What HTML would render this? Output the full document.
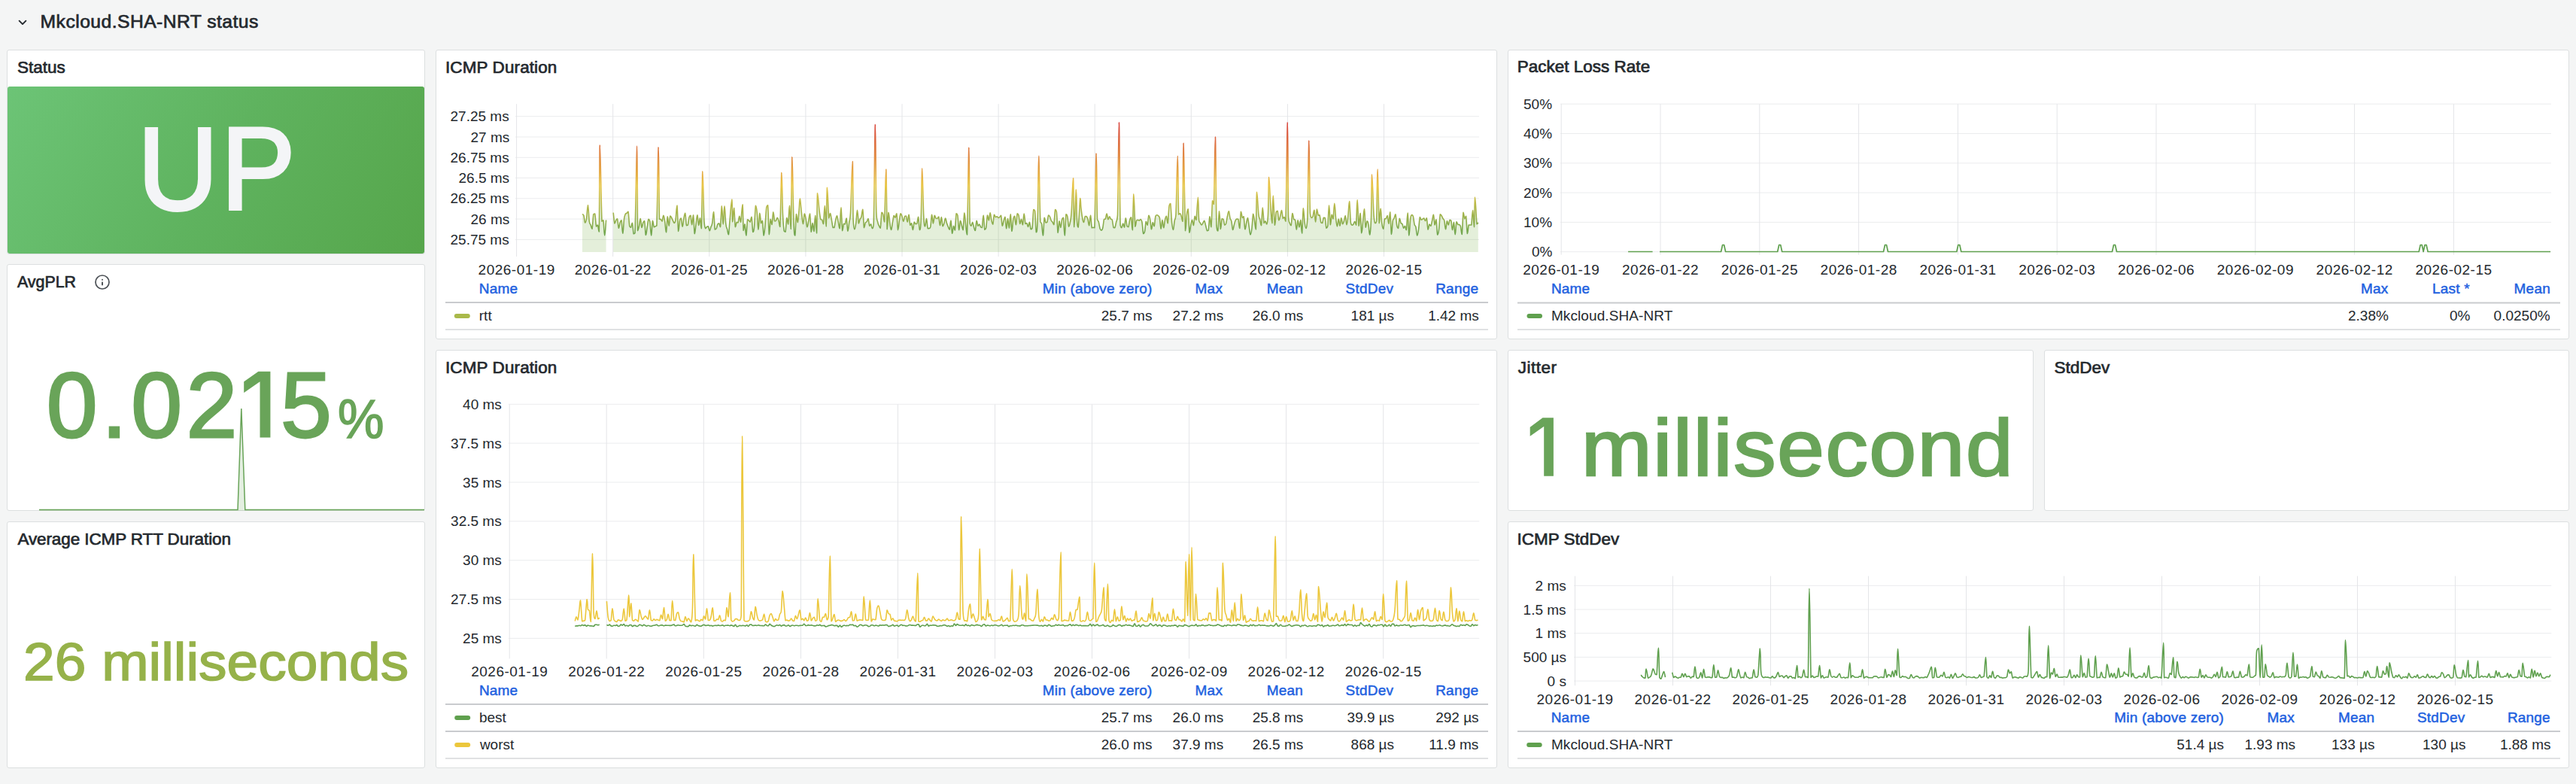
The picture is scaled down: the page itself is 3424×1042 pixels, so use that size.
<!DOCTYPE html>
<html><head><meta charset="utf-8"><style>
html,body{margin:0;padding:0}
body{width:3424px;height:1042px;overflow:hidden;position:relative;background:#f4f5f5;font-family:"Liberation Sans",sans-serif}
.p{position:absolute;box-sizing:border-box;background:#fff;border:1px solid #dcdfe0;border-radius:3px}
.t{position:absolute;white-space:nowrap}
svg{position:absolute;left:0;top:0}
</style></head><body>
<div class="p" style="left:9px;top:66px;width:556px;height:272px"></div>
<div class="p" style="left:9px;top:351px;width:556px;height:328px"></div>
<div class="p" style="left:9px;top:693px;width:556px;height:328px"></div>
<div class="p" style="left:579px;top:66px;width:1411px;height:385px"></div>
<div class="p" style="left:579px;top:465px;width:1411px;height:556px"></div>
<div class="p" style="left:2004px;top:66px;width:1411px;height:385px"></div>
<div class="p" style="left:2004px;top:465px;width:699px;height:214px"></div>
<div class="p" style="left:2717px;top:465px;width:698px;height:214px"></div>
<div class="p" style="left:2004px;top:693px;width:1411px;height:328px"></div>
<div style="position:absolute;left:10px;top:115px;width:554px;height:222px;border-radius:3px;background:linear-gradient(120deg,#6cc476 0%,#5fb35f 50%,#56a64b 100%)"></div>
<svg width="3424" height="1042">
<polyline points="25.6,27.7 30,32.1 34.4,27.7" fill="none" stroke="#24292e" stroke-width="1.9" stroke-linecap="round" stroke-linejoin="round"/>
<circle cx="136" cy="375" r="9" fill="none" stroke="#4d5257" stroke-width="1.7"/><rect x="135" y="370.8" width="2" height="2" rx="1" fill="#4d5257"/><rect x="135" y="374.6" width="2" height="4.8" rx="0.8" fill="#4d5257"/>
<path d="M52,677.5 L316,677.5 L320.8,543 L325.8,677.5 L564,677.5 L564,679 L52,679 Z" fill="#69a459" fill-opacity="0.18"/><polyline points="52,677.5 316,677.5 320.8,543 325.8,677.5 564,677.5" fill="none" stroke="#69a459" stroke-width="1.5"/>
<polygon points="359.4,493.8 343.4,493.8 324.2,507.2 324.2,521.9 345.5,507.2 345.5,581.6 359.4,581.6" fill="#69a459"/>
<polygon points="2064.9,555.2 2050.5,555.2 2033.7,567.7 2033.7,579.7 2052.2,566.7 2052.2,632.8 2064.9,632.8" fill="#69a459"/>
<path d="M685.0,154.7H1966.0M685.0,182.0H1966.0M685.0,209.3H1966.0M685.0,236.5H1966.0M685.0,263.8H1966.0M685.0,291.1H1966.0M685.0,318.4H1966.0" stroke="#ebecee" stroke-width="1" fill="none"/>
<path d="M686.6,138.2V341.0M814.7,138.2V341.0M942.8,138.2V341.0M1070.9,138.2V341.0M1199.0,138.2V341.0M1327.1,138.2V341.0M1455.2,138.2V341.0M1583.3,138.2V341.0M1711.4,138.2V341.0M1839.5,138.2V341.0" stroke="#e4e5e8" stroke-width="1" fill="none"/>
<defs><linearGradient id="g4" gradientUnits="userSpaceOnUse" x1="0" y1="318" x2="0" y2="160"><stop offset="0" stop-color="#62a24f"/><stop offset="0.45" stop-color="#e9c646"/><stop offset="1" stop-color="#d8403e"/></linearGradient></defs>
<path d="M774.0,284.6C774.4,284.9 775.1,284.6 775.9,286.3C776.6,288.6 777.0,295.1 777.7,296.0C778.5,296.0 778.8,295.3 779.6,290.6C780.3,286.0 780.7,272.7 781.4,272.7C782.2,273.4 782.6,289.2 783.3,294.4C784.0,299.1 784.4,297.1 785.2,299.1C785.9,301.0 786.3,304.3 787.0,304.3C787.8,301.5 788.1,288.7 788.9,284.7C789.6,284.0 790.0,284.0 790.7,284.0C791.5,287.3 791.8,298.0 792.6,301.0C793.3,301.0 793.7,299.0 794.4,299.0C795.2,300.4 795.7,308.0 796.3,308.0C796.9,286.8 796.7,195.8 797.4,193.0C798.1,193.0 799.1,274.2 800.0,294.1C800.9,294.1 801.1,292.7 801.9,292.7C802.6,296.4 803.0,313.0 803.7,313.0C804.5,313.0 805.2,296.6 805.6,292.5 L805.6,335 L774,335 Z" fill="rgb(120,175,70)" fill-opacity="0.2" stroke="none"/>
<path d="M774.0,284.6C774.4,284.9 775.1,284.6 775.9,286.3C776.6,288.6 777.0,295.1 777.7,296.0C778.5,296.0 778.8,295.3 779.6,290.6C780.3,286.0 780.7,272.7 781.4,272.7C782.2,273.4 782.6,289.2 783.3,294.4C784.0,299.1 784.4,297.1 785.2,299.1C785.9,301.0 786.3,304.3 787.0,304.3C787.8,301.5 788.1,288.7 788.9,284.7C789.6,284.0 790.0,284.0 790.7,284.0C791.5,287.3 791.8,298.0 792.6,301.0C793.3,301.0 793.7,299.0 794.4,299.0C795.2,300.4 795.7,308.0 796.3,308.0C796.9,286.8 796.7,195.8 797.4,193.0C798.1,193.0 799.1,274.2 800.0,294.1C800.9,294.1 801.1,292.7 801.9,292.7C802.6,296.4 803.0,313.0 803.7,313.0C804.5,313.0 805.2,296.6 805.6,292.5" fill="none" stroke="url(#g4)" stroke-width="1.6" stroke-linejoin="round"/>
<path d="M815.2,282.7C815.6,285.6 816.3,295.0 817.0,297.0C817.7,297.0 818.1,293.8 818.8,292.6C819.5,291.4 819.9,290.9 820.6,290.9C821.3,293.0 821.7,302.3 822.4,303.2C823.1,303.2 823.5,297.7 824.2,295.6C824.9,293.5 825.3,292.7 826.0,292.7C826.7,295.6 827.1,310.3 827.8,310.3C828.5,309.9 828.9,296.0 829.6,290.8C830.3,285.6 830.7,285.8 831.4,284.3C832.1,283.3 832.5,283.9 833.2,283.3C833.9,282.7 834.3,281.2 835.0,281.2C835.7,284.6 836.1,296.4 836.8,300.6C837.5,302.2 837.9,302.2 838.6,302.2C839.3,301.4 839.7,296.2 840.4,296.2C841.1,297.9 841.5,308.1 842.2,310.7C842.9,310.7 843.1,310.7 844.0,309.7C844.9,286.4 846.0,195.0 846.7,194.4C847.4,194.4 847.1,285.3 847.6,306.6C848.2,306.6 848.7,304.1 849.4,300.9C850.2,297.6 850.5,290.5 851.2,290.5C852.0,290.8 852.3,301.3 853.0,302.4C853.8,302.4 854.1,297.7 854.8,295.9C855.6,294.1 855.9,293.6 856.6,293.6C857.4,296.9 857.7,310.8 858.4,312.5C859.2,312.5 859.5,306.3 860.2,302.0C861.0,297.8 861.3,292.7 862.0,291.3C862.8,291.3 863.1,291.3 863.9,294.8C864.6,299.1 864.9,313.0 865.7,313.0C866.4,312.7 866.7,295.6 867.5,293.3C868.2,293.3 868.5,300.3 869.3,301.8C870.0,301.8 870.3,301.2 871.1,300.8C871.8,300.4 872.0,300.8 872.9,299.9C873.7,278.9 874.5,197.5 875.2,195.8C875.9,195.8 875.9,272.2 876.5,291.3C877.1,291.5 877.5,291.3 878.3,291.5C879.0,292.0 879.3,294.1 880.1,294.1C880.8,293.1 881.1,286.3 881.9,286.3C882.6,286.4 883.0,290.0 883.7,294.5C884.4,298.9 884.8,308.8 885.5,308.8C886.2,307.4 886.6,289.5 887.3,287.8C888.0,287.8 888.4,300.2 889.1,300.2C889.8,300.0 890.2,289.2 890.9,287.0C891.6,287.0 892.0,288.2 892.7,289.5C893.4,290.8 893.8,292.0 894.5,293.4C895.2,294.8 895.6,296.4 896.3,296.4C897.0,296.1 897.4,296.4 898.1,291.7C898.8,287.0 899.2,273.0 899.9,273.0C900.6,276.1 901.0,303.4 901.7,307.4C902.4,307.4 902.8,296.6 903.5,293.1C904.2,290.0 904.6,290.0 905.3,290.0C906.0,291.6 906.4,301.3 907.1,301.3C907.8,301.3 908.2,294.0 908.9,290.3C909.6,286.7 910.0,283.2 910.7,283.2C911.4,285.0 911.8,296.5 912.5,299.7C913.2,299.7 913.6,299.7 914.3,299.1C915.0,296.8 915.4,290.9 916.1,288.4C916.8,286.3 917.2,286.3 917.9,286.3C918.6,288.4 919.0,298.7 919.7,298.7C920.4,298.6 920.8,285.7 921.5,285.7C922.2,288.1 922.6,308.1 923.3,310.6C924.0,310.6 924.4,302.8 925.1,297.8C925.8,292.8 926.2,285.7 926.9,285.7C927.6,286.0 928.0,298.5 928.7,299.4C929.4,299.4 929.8,289.9 930.5,289.9C931.2,290.8 931.6,303.8 932.3,303.8C933.0,291.4 933.2,230.0 933.9,227.9C934.6,227.9 935.2,278.3 935.9,293.4C936.7,303.6 937.0,302.0 937.7,303.6C938.4,303.6 938.8,302.0 939.5,301.5C940.3,300.9 940.6,300.7 941.3,300.7C942.1,301.8 942.4,306.6 943.1,306.8C943.9,306.8 944.2,303.7 944.9,301.7C945.7,299.6 946.0,300.6 946.7,296.6C947.5,292.5 947.8,281.5 948.5,281.5C949.3,283.2 949.6,300.6 950.3,305.0C951.1,305.0 951.4,305.0 952.1,303.9C952.9,302.5 953.2,299.5 953.9,298.0C954.7,296.8 955.0,296.8 955.7,296.8C956.5,297.5 956.8,301.7 957.5,301.7C958.3,297.1 958.6,274.5 959.4,273.8C960.1,273.8 960.4,298.2 961.2,298.2C961.9,298.2 962.2,274.0 963.0,273.9C963.7,273.9 964.0,291.4 964.8,297.5C965.5,303.7 965.8,301.7 966.6,304.6C967.3,307.4 967.6,311.8 968.4,311.8C969.1,309.1 969.3,300.7 970.2,291.4C971.0,282.0 972.1,265.0 972.8,265.0C973.5,265.7 973.2,292.6 973.8,294.8C974.3,294.8 974.8,276.3 975.6,276.3C976.3,277.6 976.6,297.9 977.4,301.7C978.1,301.7 978.5,296.4 979.2,295.3C979.9,295.3 980.3,296.0 981.0,296.0C981.7,294.4 982.1,287.5 982.8,287.3C983.5,287.3 983.7,295.1 984.6,295.1C985.4,292.0 986.3,271.8 987.0,271.8C987.7,274.1 987.6,301.2 988.2,306.4C988.8,306.4 989.3,297.9 990.0,297.9C990.7,299.3 991.1,313.0 991.8,313.0C992.5,311.8 992.9,295.9 993.6,291.9C994.3,291.9 994.7,292.5 995.4,293.1C996.1,293.7 996.5,295.0 997.2,295.0C997.9,294.0 998.3,288.4 999.0,288.4C999.7,291.1 1000.1,305.9 1000.8,308.4C1001.5,308.4 1001.9,308.0 1002.6,301.0C1003.3,293.9 1003.7,277.1 1004.4,273.3C1005.1,273.3 1005.5,275.4 1006.2,281.8C1006.9,288.2 1007.3,305.0 1008.0,305.3C1008.7,305.3 1009.1,284.9 1009.8,283.2C1010.5,283.2 1010.9,294.7 1011.6,296.7C1012.3,296.7 1012.7,293.4 1013.4,293.4C1014.1,296.6 1014.5,311.9 1015.2,313.0C1015.9,313.0 1016.3,306.4 1017.0,299.0C1017.7,291.5 1018.1,280.9 1018.8,275.7C1019.5,272.8 1019.9,272.8 1020.6,272.8C1021.3,280.0 1021.7,308.0 1022.4,311.7C1023.1,311.7 1023.5,294.0 1024.2,291.4C1024.9,291.4 1025.3,298.5 1026.0,298.5C1026.7,296.6 1027.1,282.9 1027.8,281.9C1028.5,281.9 1028.9,291.5 1029.6,293.8C1030.3,293.8 1030.7,293.8 1031.4,293.3C1032.1,292.5 1032.5,289.3 1033.2,289.3C1033.9,289.4 1034.3,291.2 1035.0,293.6C1035.8,296.0 1036.1,301.4 1036.8,301.4C1037.6,288.5 1038.2,233.2 1038.9,229.5C1039.6,229.5 1039.8,267.6 1040.4,283.0C1041.1,298.5 1041.5,302.0 1042.2,307.0C1043.0,308.1 1043.3,308.1 1044.0,308.1C1044.8,304.5 1045.1,291.5 1045.8,289.5C1046.6,289.5 1046.9,298.0 1047.6,298.0C1048.4,294.8 1048.7,273.2 1049.4,273.2C1050.2,274.5 1050.6,304.4 1051.2,304.4C1051.9,291.5 1052.2,211.4 1052.9,208.7C1053.6,208.7 1054.1,269.8 1054.9,290.6C1055.6,311.5 1055.9,313.0 1056.7,313.0C1057.4,311.8 1057.7,288.0 1058.5,284.5C1059.2,284.5 1059.5,295.6 1060.3,295.6C1061.0,294.5 1061.4,285.6 1062.1,279.3C1062.7,273.0 1062.6,264.0 1063.3,264.0C1064.0,265.2 1064.8,278.6 1065.7,285.4C1066.5,292.1 1066.7,297.7 1067.5,297.7C1068.2,297.5 1068.5,285.6 1069.3,284.1C1070.0,284.1 1070.3,286.8 1071.1,290.3C1071.8,293.8 1072.1,300.9 1072.9,301.7C1073.6,301.7 1074.0,297.5 1074.7,294.0C1075.4,290.5 1075.8,284.1 1076.5,284.1C1077.2,287.0 1077.6,305.8 1078.3,308.3C1079.0,308.3 1079.4,296.6 1080.1,296.4C1080.8,296.4 1081.2,307.5 1081.9,307.5C1082.6,305.5 1083.0,286.4 1083.7,286.4C1084.4,286.8 1084.9,309.9 1085.5,309.9C1086.1,304.0 1085.9,262.6 1086.6,256.7C1087.3,256.7 1088.2,273.4 1089.1,280.4C1089.9,287.4 1090.2,289.4 1090.9,291.7C1091.6,292.2 1092.0,291.7 1092.7,292.2C1093.4,293.4 1093.8,297.7 1094.5,297.7C1095.2,293.9 1095.6,273.5 1096.3,273.5C1097.0,274.1 1097.5,300.9 1098.1,300.9C1098.7,296.0 1098.8,251.5 1099.5,249.3C1100.2,249.3 1100.9,282.9 1101.7,289.8C1102.5,289.8 1102.8,283.5 1103.5,283.5C1104.2,284.0 1104.6,288.2 1105.3,291.9C1106.0,295.7 1106.4,300.3 1107.1,302.4C1107.8,302.4 1108.2,302.4 1108.9,302.4C1109.6,300.4 1110.0,295.5 1110.7,292.4C1111.4,289.3 1111.8,286.9 1112.5,286.9C1113.2,287.5 1113.6,291.9 1114.3,295.2C1115.0,298.6 1115.4,303.7 1116.1,303.7C1116.8,299.8 1117.2,275.9 1117.9,275.9C1118.6,276.5 1119.0,302.3 1119.7,306.6C1120.4,306.6 1120.8,299.1 1121.5,297.3C1122.2,297.3 1122.6,297.9 1123.3,297.9C1124.0,296.4 1124.4,290.0 1125.1,290.0C1125.8,291.8 1126.2,306.0 1126.9,307.1C1127.6,307.1 1128.0,300.7 1128.7,295.8C1129.4,290.8 1129.6,295.8 1130.5,282.5C1131.4,266.3 1132.5,214.5 1133.2,214.5C1133.9,216.3 1133.6,273.7 1134.1,291.8C1134.7,304.7 1135.2,303.6 1135.9,304.7C1136.7,304.7 1137.0,301.9 1137.7,296.8C1138.5,291.7 1138.8,279.2 1139.5,279.2C1140.3,279.2 1140.6,294.5 1141.3,296.9C1142.1,296.9 1142.4,292.9 1143.1,291.1C1143.9,289.4 1144.2,290.8 1144.9,288.3C1145.7,285.7 1146.0,278.2 1146.7,278.2C1147.5,281.1 1147.8,299.0 1148.5,302.6C1149.3,302.6 1149.6,297.6 1150.3,296.0C1151.1,294.6 1151.4,295.7 1152.2,294.6C1152.9,293.6 1153.2,290.6 1154.0,290.6C1154.7,291.7 1155.0,298.9 1155.8,300.3C1156.5,300.3 1156.8,297.7 1157.6,297.7C1158.3,298.4 1158.6,303.5 1159.4,303.6C1160.1,303.6 1160.4,303.6 1161.2,298.5C1162.0,270.9 1162.7,168.9 1163.4,165.6C1164.1,165.6 1164.1,256.0 1164.8,281.8C1165.4,294.9 1165.8,291.3 1166.6,294.9C1167.3,298.5 1167.6,298.3 1168.4,300.0C1169.1,301.6 1169.4,303.1 1170.2,303.1C1170.9,299.5 1171.3,285.8 1172.0,282.2C1172.7,282.2 1173.1,282.3 1173.8,284.9C1174.5,287.4 1174.8,295.0 1175.6,295.0C1176.4,283.1 1177.0,225.1 1177.7,225.1C1178.4,227.1 1178.5,293.4 1179.2,304.8C1179.8,304.8 1180.3,284.0 1181.0,282.3C1181.7,282.3 1182.1,291.9 1182.8,296.5C1183.5,301.1 1183.9,305.5 1184.6,305.5C1185.3,305.3 1185.7,299.4 1186.4,295.6C1187.1,291.8 1187.5,287.8 1188.2,286.5C1188.9,286.5 1189.3,289.2 1190.0,289.2C1190.7,288.7 1191.1,283.9 1191.8,283.9C1192.5,287.2 1192.9,303.8 1193.6,305.6C1194.3,305.6 1194.7,297.5 1195.4,293.1C1196.1,288.8 1196.5,284.9 1197.2,283.8C1197.9,283.8 1198.3,285.8 1199.0,287.8C1199.7,289.9 1200.1,294.2 1200.8,294.2C1201.5,294.1 1201.9,289.0 1202.6,287.5C1203.3,287.0 1203.7,287.0 1204.4,287.0C1205.1,288.4 1205.5,295.0 1206.2,295.0C1206.9,294.7 1207.3,285.3 1208.0,285.3C1208.7,286.1 1209.1,297.0 1209.8,299.3C1210.5,299.3 1210.9,296.6 1211.6,296.6C1212.3,297.9 1212.7,305.5 1213.4,305.5C1214.1,305.2 1214.5,296.6 1215.2,295.0C1215.9,295.0 1216.3,297.1 1217.0,297.6C1217.7,297.6 1218.1,297.6 1218.8,297.3C1219.5,295.5 1219.9,288.4 1220.6,288.4C1221.3,290.1 1221.7,305.2 1222.4,305.6C1223.1,305.6 1223.6,305.6 1224.2,290.5C1224.9,274.2 1225.0,224.4 1225.7,224.0C1226.4,224.0 1227.0,273.2 1227.8,288.6C1228.6,301.0 1228.9,300.6 1229.6,301.0C1230.4,301.0 1230.7,290.5 1231.4,290.5C1232.2,291.0 1232.5,300.9 1233.2,303.6C1234.0,303.6 1234.3,303.6 1235.0,303.6C1235.8,303.2 1236.1,303.6 1236.8,301.4C1237.6,297.7 1237.9,286.2 1238.6,285.3C1239.4,285.3 1239.7,296.6 1240.4,296.9C1241.2,296.9 1241.5,287.8 1242.2,286.4C1243.0,286.4 1243.3,289.3 1244.0,290.1C1244.8,290.5 1245.1,290.5 1245.8,290.5C1246.6,290.1 1246.9,288.1 1247.7,288.1C1248.4,289.9 1248.7,299.5 1249.5,299.6C1250.2,299.6 1250.5,288.6 1251.3,288.6C1252.0,288.8 1252.3,299.0 1253.1,300.7C1253.8,300.7 1254.1,298.9 1254.9,296.8C1255.6,294.7 1255.9,290.1 1256.7,290.1C1257.4,290.1 1257.7,294.6 1258.5,296.8C1259.2,299.0 1259.5,299.6 1260.3,301.3C1261.0,302.9 1261.3,305.2 1262.1,305.2C1262.8,303.5 1263.1,293.1 1263.9,293.1C1264.6,294.1 1264.9,308.8 1265.7,310.3C1266.4,310.3 1266.8,301.1 1267.5,300.3C1268.2,300.3 1268.6,306.0 1269.3,306.0C1270.0,302.7 1270.4,287.7 1271.1,283.7C1271.8,283.7 1272.2,283.7 1272.9,286.3C1273.6,290.7 1274.0,304.3 1274.7,305.7C1275.4,305.7 1275.8,294.7 1276.5,293.4C1277.2,293.4 1277.6,296.9 1278.3,299.3C1279.0,301.8 1279.4,305.7 1280.1,305.7C1280.8,302.4 1281.2,284.2 1281.9,283.0C1282.6,283.0 1283.0,293.4 1283.7,299.2C1284.4,305.0 1284.6,312.0 1285.5,312.0C1286.3,291.4 1287.2,199.6 1287.9,196.4C1288.6,196.4 1288.5,275.4 1289.1,296.1C1289.7,300.2 1290.2,300.2 1290.9,300.2C1291.6,300.0 1292.0,295.4 1292.7,295.4C1293.4,295.8 1293.8,299.8 1294.5,302.0C1295.2,304.2 1295.6,306.5 1296.3,306.5C1297.0,304.8 1297.4,294.7 1298.1,293.4C1298.8,293.4 1299.2,299.4 1299.9,300.3C1300.6,300.3 1301.0,298.0 1301.7,298.0C1302.4,298.2 1302.8,300.8 1303.5,301.7C1304.2,302.5 1304.6,302.5 1305.3,302.5C1306.0,299.4 1306.4,286.2 1307.1,286.2C1307.8,286.7 1308.2,302.0 1308.9,305.3C1309.6,305.3 1310.0,305.3 1310.7,302.7C1311.4,298.9 1311.8,287.9 1312.5,286.0C1313.2,286.0 1313.6,292.9 1314.3,292.9C1315.0,292.3 1315.4,282.8 1316.1,282.8C1316.8,282.8 1317.2,289.8 1317.9,292.9C1318.6,295.9 1319.0,298.2 1319.7,298.2C1320.4,296.7 1320.8,287.3 1321.5,285.4C1322.2,285.4 1322.6,288.2 1323.3,288.7C1324.1,288.7 1324.4,287.8 1325.1,287.8C1325.9,288.0 1326.2,289.2 1326.9,289.4C1327.7,289.4 1328.0,289.4 1328.7,288.7C1329.5,288.1 1329.8,286.2 1330.5,286.2C1331.3,288.5 1331.6,298.8 1332.3,300.2C1333.1,300.2 1333.4,295.9 1334.1,293.5C1334.9,291.1 1335.2,288.3 1335.9,288.3C1336.7,290.4 1337.0,303.4 1337.7,303.8C1338.5,303.8 1338.8,290.7 1339.5,290.5C1340.3,290.5 1340.6,303.0 1341.3,303.0C1342.1,301.9 1342.4,284.7 1343.2,284.7C1343.9,285.6 1344.2,306.0 1345.0,307.4C1345.7,307.4 1346.0,295.5 1346.8,291.5C1347.5,287.5 1347.8,287.2 1348.6,287.2C1349.3,288.7 1349.6,298.8 1350.4,298.8C1351.1,298.2 1351.4,286.5 1352.2,283.9C1352.9,283.9 1353.2,283.9 1354.0,286.1C1354.7,288.8 1355.0,296.4 1355.8,297.4C1356.5,297.4 1356.8,291.2 1357.6,291.2C1358.3,291.5 1358.6,298.8 1359.4,298.8C1360.1,297.3 1360.4,284.3 1361.2,284.1C1361.9,284.1 1362.3,295.0 1363.0,297.5C1363.7,297.5 1364.1,296.5 1364.8,296.5C1365.5,297.2 1365.9,301.4 1366.6,301.4C1367.3,301.2 1367.7,295.3 1368.4,295.3C1369.1,296.0 1369.5,303.2 1370.2,304.8C1370.9,304.8 1371.3,304.8 1372.0,303.4C1372.7,298.2 1373.1,283.1 1373.8,278.5C1374.5,278.5 1374.9,278.5 1375.6,280.3C1376.3,286.3 1376.7,306.4 1377.4,308.7C1378.1,308.7 1378.5,308.7 1379.2,291.5C1379.9,271.3 1380.0,207.3 1380.7,207.3C1381.4,207.9 1382.0,276.3 1382.8,294.4C1383.6,297.7 1383.9,294.4 1384.6,297.7C1385.3,301.4 1385.7,313.0 1386.4,313.0C1387.1,311.3 1387.5,292.7 1388.2,289.3C1388.9,289.3 1389.3,294.7 1390.0,295.9C1390.7,295.9 1391.1,295.9 1391.8,295.4C1392.5,293.4 1392.9,287.6 1393.6,286.1C1394.3,286.1 1394.7,286.5 1395.4,287.9C1396.1,289.2 1396.5,291.6 1397.2,293.0C1397.9,294.5 1398.3,294.1 1399.0,295.2C1399.7,296.3 1400.1,298.6 1400.8,298.6C1401.5,295.3 1401.9,281.9 1402.6,278.6C1403.3,278.6 1403.7,278.6 1404.4,281.9C1405.1,288.1 1405.5,307.0 1406.2,309.4C1406.9,309.4 1407.3,295.2 1408.0,293.8C1408.7,293.8 1409.1,302.4 1409.8,302.4C1410.5,302.0 1410.9,294.3 1411.6,291.7C1412.3,289.3 1412.7,289.3 1413.4,289.3C1414.1,293.5 1414.5,313.0 1415.2,313.0C1415.9,312.1 1416.3,289.9 1417.0,284.8C1417.7,284.8 1418.1,284.8 1418.8,287.6C1419.6,290.8 1419.9,299.5 1420.6,301.1C1421.4,301.1 1421.7,299.4 1422.4,295.5C1423.2,291.5 1423.4,293.0 1424.2,281.3C1425.0,269.6 1425.8,236.9 1426.5,236.9C1427.2,240.9 1427.1,298.5 1427.8,301.6C1428.6,301.6 1429.7,254.2 1430.4,252.0C1431.1,252.0 1430.9,280.5 1431.4,290.5C1432.0,300.6 1432.4,302.0 1433.2,302.0C1434.1,296.6 1435.1,268.8 1435.8,263.5C1436.5,263.5 1436.3,270.3 1436.8,275.5C1437.4,280.6 1437.9,285.4 1438.7,289.4C1439.4,293.4 1439.7,295.5 1440.5,295.5C1441.2,295.1 1441.5,289.1 1442.3,287.5C1443.0,287.5 1443.3,287.5 1444.1,287.6C1444.8,288.3 1445.1,288.6 1445.9,291.0C1446.6,293.5 1446.9,299.7 1447.7,299.7C1448.4,298.7 1448.7,286.2 1449.5,286.2C1450.2,286.8 1450.5,299.5 1451.3,302.7C1452.0,302.7 1452.3,302.4 1453.1,302.4C1453.8,302.4 1454.0,302.6 1454.9,302.6C1455.7,282.9 1456.5,206.3 1457.2,204.0C1457.9,204.0 1457.9,272.7 1458.5,290.9C1459.1,294.9 1459.6,292.3 1460.3,294.9C1461.0,297.5 1461.4,301.6 1462.1,303.8C1462.8,306.1 1463.2,306.1 1463.9,306.1C1464.6,306.0 1465.0,306.1 1465.7,303.3C1466.4,300.4 1466.8,293.9 1467.5,291.5C1468.2,291.1 1468.6,291.5 1469.3,291.1C1470.0,289.7 1470.4,284.1 1471.1,284.1C1471.8,284.2 1472.2,290.9 1472.9,291.6C1473.6,291.6 1474.0,287.8 1474.7,287.7C1475.4,287.7 1475.8,290.3 1476.5,291.1C1477.2,292.0 1477.6,291.1 1478.3,292.1C1479.0,294.3 1479.4,300.3 1480.1,302.4C1480.8,302.6 1481.2,302.6 1481.9,302.6C1482.6,301.1 1483.0,298.3 1483.7,294.9C1484.4,291.5 1484.8,294.9 1485.5,285.6C1486.2,259.2 1486.7,162.9 1487.4,162.9C1488.1,165.6 1488.4,271.1 1489.1,299.0C1489.8,302.6 1490.2,302.6 1490.9,302.6C1491.6,302.2 1492.0,297.2 1492.7,297.1C1493.4,297.1 1493.8,302.2 1494.5,302.2C1495.2,300.7 1495.6,290.0 1496.3,289.7C1497.0,289.7 1497.4,298.5 1498.1,300.8C1498.8,301.6 1499.2,301.6 1499.9,301.6C1500.6,299.9 1501.0,294.8 1501.7,292.3C1502.4,289.7 1502.8,288.8 1503.5,288.8C1504.2,291.5 1504.6,305.8 1505.3,305.8C1506.0,299.6 1506.2,258.9 1506.9,258.0C1507.6,258.0 1508.2,294.2 1508.9,301.2C1509.7,301.2 1510.0,294.8 1510.7,293.0C1511.4,292.3 1511.8,292.3 1512.5,292.3C1513.2,292.4 1513.6,293.1 1514.3,293.1C1515.1,293.0 1515.4,291.5 1516.1,291.5C1516.9,291.9 1517.2,291.5 1517.9,295.0C1518.7,298.8 1519.0,307.9 1519.7,310.5C1520.5,310.5 1520.8,310.5 1521.5,307.7C1522.3,304.4 1522.6,295.8 1523.3,294.2C1524.1,294.2 1524.4,299.3 1525.1,299.3C1525.9,297.8 1526.2,287.9 1526.9,286.4C1527.7,286.4 1528.0,288.0 1528.7,291.7C1529.5,295.4 1529.8,304.0 1530.5,304.8C1531.3,304.8 1531.6,296.4 1532.3,295.6C1533.1,295.6 1533.4,300.6 1534.2,300.6C1534.9,298.9 1535.2,290.1 1536.0,287.2C1536.7,285.8 1537.0,285.8 1537.8,285.8C1538.5,285.8 1538.8,286.0 1539.6,286.8C1540.3,287.6 1540.6,286.8 1541.4,289.8C1542.1,293.3 1542.4,303.5 1543.2,304.1C1543.9,304.1 1544.2,292.9 1545.0,292.6C1545.7,292.6 1546.0,302.8 1546.8,302.8C1547.5,302.6 1547.8,294.9 1548.6,291.7C1549.3,288.6 1549.6,287.2 1550.4,287.2C1551.1,288.2 1551.4,296.7 1552.2,296.7C1552.9,294.1 1553.3,279.3 1554.0,274.0C1554.7,270.6 1555.1,270.6 1555.8,270.6C1556.5,275.0 1556.9,288.8 1557.6,295.7C1558.3,302.7 1558.7,305.4 1559.4,305.4C1560.1,304.9 1560.5,297.6 1561.2,293.5C1561.9,289.5 1562.2,293.5 1563.0,285.1C1563.8,267.8 1564.6,207.3 1565.3,207.3C1566.0,207.3 1566.0,269.7 1566.6,285.0C1567.2,285.0 1567.7,283.7 1568.4,283.7C1569.1,284.2 1569.5,285.1 1570.2,287.2C1570.9,289.4 1571.4,294.3 1572.0,294.3C1572.6,275.0 1572.3,190.3 1573.0,190.3C1573.7,192.7 1574.7,287.6 1575.6,306.6C1576.5,306.6 1576.7,291.2 1577.4,285.5C1578.1,279.7 1578.5,277.9 1579.2,277.9C1579.9,282.6 1580.3,304.9 1581.0,309.1C1581.7,309.1 1582.1,302.4 1582.8,299.0C1583.5,295.6 1583.9,292.2 1584.6,292.2C1585.3,292.3 1585.7,299.6 1586.4,299.6C1587.1,298.6 1587.5,288.8 1588.2,287.4C1588.9,287.4 1589.2,292.4 1590.0,292.4C1590.8,287.4 1591.7,262.2 1592.4,262.2C1593.1,262.2 1593.0,285.8 1593.6,292.6C1594.2,296.4 1594.7,295.1 1595.4,296.4C1596.1,297.7 1596.5,299.0 1597.2,299.0C1597.9,299.0 1598.3,297.5 1599.0,296.3C1599.7,295.2 1600.1,293.2 1600.8,293.2C1601.5,293.9 1601.9,297.0 1602.6,299.7C1603.3,302.3 1603.7,305.3 1604.4,306.6C1605.1,306.6 1605.5,306.6 1606.2,306.1C1606.9,302.4 1607.3,288.7 1608.0,287.8C1608.7,287.8 1609.1,301.8 1609.8,301.8C1610.6,297.6 1610.9,272.9 1611.6,266.8C1612.4,266.8 1612.7,271.4 1613.4,271.4C1614.2,254.5 1614.7,182.1 1615.4,182.1C1616.1,187.8 1616.3,274.9 1617.0,299.9C1617.7,306.9 1618.1,306.9 1618.8,306.9C1619.6,303.1 1619.9,281.2 1620.6,280.7C1621.4,280.7 1621.7,302.5 1622.4,304.5C1623.2,304.5 1623.5,293.3 1624.2,290.7C1625.0,290.7 1625.3,290.7 1626.0,291.3C1626.8,293.0 1627.1,298.0 1627.8,299.1C1628.6,299.1 1628.9,299.1 1629.7,296.9C1630.4,294.5 1630.7,290.5 1631.5,287.3C1632.2,284.1 1632.5,280.7 1633.3,280.7C1634.0,281.3 1634.3,287.5 1635.1,290.2C1635.8,292.9 1636.1,291.2 1636.9,294.3C1637.6,297.3 1637.9,304.7 1638.7,305.5C1639.4,305.5 1639.7,300.9 1640.5,298.4C1641.2,295.8 1641.5,294.2 1642.3,292.7C1643.0,291.3 1643.3,291.3 1644.1,291.0C1644.8,291.0 1645.1,291.0 1645.9,291.3C1646.6,293.8 1646.9,303.5 1647.7,303.5C1648.4,301.5 1648.8,284.0 1649.5,281.2C1650.2,281.2 1650.6,288.0 1651.3,289.4C1652.0,289.4 1652.4,287.8 1653.1,287.8C1653.8,290.9 1654.2,303.1 1654.9,304.8C1655.6,304.8 1656.0,299.4 1656.7,296.3C1657.4,293.3 1657.8,289.6 1658.5,289.6C1659.2,290.6 1659.6,297.2 1660.3,301.6C1661.0,306.1 1661.4,311.4 1662.1,311.9C1662.8,311.9 1663.2,309.5 1663.9,304.0C1664.6,298.4 1665.0,286.3 1665.7,284.2C1666.4,284.2 1666.8,289.3 1667.5,293.5C1668.2,297.6 1668.7,304.9 1669.3,304.9C1669.9,297.3 1669.9,259.3 1670.6,255.3C1671.3,255.3 1672.1,277.6 1672.9,284.9C1673.7,291.7 1674.0,288.8 1674.7,291.7C1675.4,294.7 1675.8,299.7 1676.5,299.7C1677.2,296.5 1677.6,276.6 1678.3,276.0C1679.0,276.0 1679.4,292.9 1680.1,296.5C1680.8,296.5 1681.2,293.9 1681.9,293.9C1682.6,294.2 1683.0,298.0 1683.7,298.0C1684.4,296.2 1684.9,297.5 1685.5,285.0C1686.1,272.5 1686.0,237.2 1686.7,235.6C1687.4,235.6 1688.3,264.8 1689.1,277.0C1690.0,289.2 1690.3,296.6 1690.9,296.6C1691.5,293.3 1691.5,260.2 1692.2,260.2C1692.9,260.7 1693.7,295.0 1694.5,299.3C1695.3,299.3 1695.6,285.4 1696.3,281.6C1697.0,280.4 1697.4,280.4 1698.1,280.4C1698.8,282.7 1699.2,291.4 1699.9,292.8C1700.6,292.8 1701.0,290.1 1701.7,287.4C1702.4,284.8 1702.8,279.6 1703.5,279.6C1704.2,280.2 1704.6,288.5 1705.3,290.3C1706.0,290.3 1706.4,288.5 1707.1,288.5C1707.9,289.2 1708.1,294.2 1708.9,294.2C1709.8,269.1 1710.7,164.3 1711.4,162.9C1712.1,162.9 1711.9,260.6 1712.5,287.3C1713.1,296.8 1713.6,294.3 1714.3,296.8C1715.1,299.2 1715.4,299.6 1716.1,299.6C1716.9,297.0 1717.2,285.1 1717.9,283.5C1718.7,283.5 1719.0,289.6 1719.7,291.4C1720.5,292.3 1720.8,291.4 1721.5,292.3C1722.3,295.0 1722.6,305.1 1723.3,305.2C1724.1,305.2 1724.4,293.4 1725.1,292.8C1725.9,292.8 1726.2,302.0 1727.0,302.0C1727.7,302.0 1728.0,292.6 1728.8,292.6C1729.5,294.2 1729.8,310.0 1730.6,310.0C1731.3,306.8 1731.6,279.6 1732.4,276.9C1733.1,276.9 1733.4,291.1 1734.2,296.4C1734.9,301.8 1735.2,303.5 1736.0,303.5C1736.7,302.5 1737.0,303.5 1737.8,291.3C1738.6,268.0 1739.2,188.7 1739.9,187.0C1740.6,187.0 1740.7,262.5 1741.4,283.0C1742.0,289.4 1742.4,288.4 1743.2,289.4C1743.9,289.4 1744.2,289.4 1745.0,287.9C1745.7,285.9 1746.1,279.2 1746.8,279.2C1747.5,280.6 1747.9,295.0 1748.6,295.0C1749.3,294.8 1749.7,279.8 1750.4,278.1C1751.1,278.1 1751.5,284.7 1752.2,286.3C1752.9,286.3 1753.3,285.9 1754.0,285.9C1754.7,287.8 1755.1,293.7 1755.8,295.8C1756.5,296.5 1756.9,296.5 1757.6,296.5C1758.3,295.2 1758.7,290.7 1759.4,289.2C1760.1,289.2 1760.5,289.2 1761.2,289.4C1761.9,292.2 1762.3,301.0 1763.0,303.2C1763.7,303.2 1764.1,303.2 1764.8,300.5C1765.5,294.4 1765.9,273.3 1766.6,273.0C1767.3,273.0 1767.7,296.4 1768.4,298.8C1769.1,298.8 1769.5,287.0 1770.2,285.3C1770.9,285.3 1771.3,290.7 1772.0,290.7C1772.7,287.7 1773.1,270.4 1773.8,270.3C1774.5,270.3 1774.9,284.2 1775.6,290.3C1776.3,296.4 1776.7,300.8 1777.4,300.9C1778.1,300.9 1778.5,291.1 1779.2,291.0C1779.9,291.0 1780.3,300.1 1781.0,300.1C1781.7,299.9 1782.1,290.2 1782.8,289.7C1783.5,289.7 1783.9,296.9 1784.6,297.7C1785.3,297.7 1785.7,296.0 1786.4,293.9C1787.1,291.7 1787.5,286.8 1788.2,286.8C1788.9,287.8 1789.3,298.4 1790.0,298.7C1790.7,298.7 1791.1,294.2 1791.8,288.0C1792.5,281.7 1792.9,267.5 1793.6,267.5C1794.3,269.1 1794.7,289.9 1795.4,296.2C1796.1,299.2 1796.5,298.8 1797.2,299.2C1797.9,299.2 1798.3,299.0 1799.0,298.0C1799.7,297.1 1800.1,294.2 1800.8,294.2C1801.5,294.4 1802.0,299.1 1802.6,299.1C1803.3,293.4 1803.4,265.7 1804.1,265.7C1804.8,266.0 1805.4,296.9 1806.2,300.4C1807.0,300.4 1807.3,283.4 1808.0,283.4C1808.8,285.2 1809.1,307.5 1809.8,309.8C1810.6,309.8 1810.9,301.3 1811.6,294.9C1812.4,288.4 1812.7,277.7 1813.4,277.7C1814.2,279.2 1814.5,299.0 1815.2,302.2C1816.0,302.2 1816.3,294.8 1817.0,293.9C1817.8,293.9 1818.1,293.9 1818.8,297.5C1819.6,301.1 1819.9,312.0 1820.6,312.0C1821.4,310.6 1821.9,306.6 1822.5,290.6C1823.0,274.6 1822.9,232.8 1823.6,232.0C1824.3,232.0 1825.2,273.8 1826.1,286.8C1826.9,296.7 1827.1,295.3 1827.9,296.7C1828.6,296.7 1829.0,296.7 1829.7,294.0C1830.3,279.7 1830.3,225.1 1831.0,225.1C1831.7,225.6 1832.4,286.2 1833.3,296.6C1834.1,296.6 1834.3,277.1 1835.1,277.1C1835.8,277.2 1836.1,291.9 1836.9,297.4C1837.6,302.8 1837.9,304.3 1838.7,304.3C1839.4,303.0 1839.7,293.5 1840.5,290.8C1841.2,290.6 1841.6,290.8 1842.3,290.6C1843.0,289.7 1843.4,286.5 1844.1,286.5C1844.8,287.9 1845.2,297.2 1845.9,297.2C1846.6,296.2 1847.0,281.9 1847.7,281.9C1848.4,284.7 1848.8,309.0 1849.5,311.4C1850.2,311.4 1850.6,297.7 1851.3,293.4C1852.0,290.0 1852.4,291.8 1853.1,290.0C1853.8,288.3 1854.2,284.8 1854.9,284.8C1855.6,286.7 1856.0,296.0 1856.7,299.7C1857.4,303.4 1857.8,303.4 1858.5,303.4C1859.2,301.5 1859.6,291.7 1860.3,290.3C1861.0,290.3 1861.4,295.1 1862.1,296.6C1862.8,297.6 1863.2,296.6 1863.9,297.6C1864.6,299.0 1865.0,302.8 1865.7,303.3C1866.4,303.3 1866.8,300.3 1867.5,300.3C1868.2,300.8 1868.6,305.6 1869.3,305.6C1870.0,302.2 1870.4,283.1 1871.1,283.1C1871.8,284.6 1872.2,311.4 1872.9,313.0C1873.6,313.0 1874.0,296.4 1874.7,290.9C1875.4,285.6 1875.8,286.3 1876.5,285.6C1877.2,285.6 1877.6,285.6 1878.3,287.2C1879.0,289.8 1879.4,295.5 1880.1,298.4C1880.8,301.3 1881.2,298.8 1881.9,301.7C1882.6,304.6 1883.0,312.2 1883.7,313.0C1884.4,313.0 1884.8,310.4 1885.5,305.5C1886.2,300.7 1886.6,291.3 1887.3,288.6C1888.0,288.6 1888.4,291.7 1889.1,292.2C1889.8,292.2 1890.2,291.6 1890.9,291.2C1891.6,290.7 1892.0,290.0 1892.7,290.0C1893.4,290.5 1893.8,293.7 1894.5,293.7C1895.2,293.7 1895.6,289.9 1896.3,289.9C1897.0,292.2 1897.4,303.5 1898.1,305.1C1898.9,305.1 1899.2,298.9 1899.9,298.0C1900.7,298.0 1901.0,300.4 1901.7,300.4C1902.5,299.6 1902.8,296.8 1903.5,293.8C1904.3,290.8 1904.6,285.3 1905.3,285.3C1906.1,286.3 1906.4,297.5 1907.1,298.9C1907.9,298.9 1908.2,291.8 1908.9,291.8C1909.7,294.4 1910.0,309.3 1910.7,312.0C1911.5,312.0 1911.8,311.0 1912.5,305.6C1913.3,300.2 1913.6,288.6 1914.3,284.9C1915.1,284.9 1915.4,285.6 1916.1,286.7C1916.9,287.9 1917.2,289.2 1918.0,290.5C1918.7,291.8 1919.0,290.5 1919.8,293.3C1920.5,296.2 1920.8,304.8 1921.6,304.8C1922.3,304.8 1922.6,294.8 1923.4,293.6C1924.1,293.6 1924.4,299.0 1925.2,299.0C1925.9,298.8 1926.2,293.6 1927.0,292.4C1927.7,292.4 1928.0,292.4 1928.8,293.3C1929.5,295.9 1929.8,305.2 1930.6,305.6C1931.3,305.6 1931.6,295.3 1932.4,295.3C1933.1,296.5 1933.4,311.8 1934.2,311.8C1934.9,311.7 1935.2,297.4 1936.0,294.8C1936.7,294.8 1937.1,297.7 1937.8,298.4C1938.5,298.5 1938.9,298.4 1939.6,298.5C1940.3,299.0 1940.7,298.5 1941.4,300.8C1942.1,303.4 1942.5,311.5 1943.2,311.5C1943.9,307.8 1944.3,286.5 1945.0,282.3C1945.7,282.3 1946.1,289.7 1946.8,290.7C1947.5,290.7 1947.9,287.2 1948.6,287.2C1949.3,291.1 1949.7,308.1 1950.4,310.5C1951.1,310.5 1951.5,301.4 1952.2,299.1C1952.9,299.0 1953.3,299.0 1954.0,299.0C1954.7,299.0 1955.1,299.0 1955.8,299.0C1956.5,295.1 1956.9,279.5 1957.6,279.5C1958.3,280.0 1958.8,301.7 1959.4,301.7C1960.0,298.3 1959.9,263.0 1960.6,262.2C1961.3,262.2 1962.2,291.0 1963.0,297.8C1963.8,297.8 1964.4,296.3 1964.8,295.9 L1964.8,335 L815.2,335 Z" fill="rgb(120,175,70)" fill-opacity="0.2" stroke="none"/>
<path d="M815.2,282.7C815.6,285.6 816.3,295.0 817.0,297.0C817.7,297.0 818.1,293.8 818.8,292.6C819.5,291.4 819.9,290.9 820.6,290.9C821.3,293.0 821.7,302.3 822.4,303.2C823.1,303.2 823.5,297.7 824.2,295.6C824.9,293.5 825.3,292.7 826.0,292.7C826.7,295.6 827.1,310.3 827.8,310.3C828.5,309.9 828.9,296.0 829.6,290.8C830.3,285.6 830.7,285.8 831.4,284.3C832.1,283.3 832.5,283.9 833.2,283.3C833.9,282.7 834.3,281.2 835.0,281.2C835.7,284.6 836.1,296.4 836.8,300.6C837.5,302.2 837.9,302.2 838.6,302.2C839.3,301.4 839.7,296.2 840.4,296.2C841.1,297.9 841.5,308.1 842.2,310.7C842.9,310.7 843.1,310.7 844.0,309.7C844.9,286.4 846.0,195.0 846.7,194.4C847.4,194.4 847.1,285.3 847.6,306.6C848.2,306.6 848.7,304.1 849.4,300.9C850.2,297.6 850.5,290.5 851.2,290.5C852.0,290.8 852.3,301.3 853.0,302.4C853.8,302.4 854.1,297.7 854.8,295.9C855.6,294.1 855.9,293.6 856.6,293.6C857.4,296.9 857.7,310.8 858.4,312.5C859.2,312.5 859.5,306.3 860.2,302.0C861.0,297.8 861.3,292.7 862.0,291.3C862.8,291.3 863.1,291.3 863.9,294.8C864.6,299.1 864.9,313.0 865.7,313.0C866.4,312.7 866.7,295.6 867.5,293.3C868.2,293.3 868.5,300.3 869.3,301.8C870.0,301.8 870.3,301.2 871.1,300.8C871.8,300.4 872.0,300.8 872.9,299.9C873.7,278.9 874.5,197.5 875.2,195.8C875.9,195.8 875.9,272.2 876.5,291.3C877.1,291.5 877.5,291.3 878.3,291.5C879.0,292.0 879.3,294.1 880.1,294.1C880.8,293.1 881.1,286.3 881.9,286.3C882.6,286.4 883.0,290.0 883.7,294.5C884.4,298.9 884.8,308.8 885.5,308.8C886.2,307.4 886.6,289.5 887.3,287.8C888.0,287.8 888.4,300.2 889.1,300.2C889.8,300.0 890.2,289.2 890.9,287.0C891.6,287.0 892.0,288.2 892.7,289.5C893.4,290.8 893.8,292.0 894.5,293.4C895.2,294.8 895.6,296.4 896.3,296.4C897.0,296.1 897.4,296.4 898.1,291.7C898.8,287.0 899.2,273.0 899.9,273.0C900.6,276.1 901.0,303.4 901.7,307.4C902.4,307.4 902.8,296.6 903.5,293.1C904.2,290.0 904.6,290.0 905.3,290.0C906.0,291.6 906.4,301.3 907.1,301.3C907.8,301.3 908.2,294.0 908.9,290.3C909.6,286.7 910.0,283.2 910.7,283.2C911.4,285.0 911.8,296.5 912.5,299.7C913.2,299.7 913.6,299.7 914.3,299.1C915.0,296.8 915.4,290.9 916.1,288.4C916.8,286.3 917.2,286.3 917.9,286.3C918.6,288.4 919.0,298.7 919.7,298.7C920.4,298.6 920.8,285.7 921.5,285.7C922.2,288.1 922.6,308.1 923.3,310.6C924.0,310.6 924.4,302.8 925.1,297.8C925.8,292.8 926.2,285.7 926.9,285.7C927.6,286.0 928.0,298.5 928.7,299.4C929.4,299.4 929.8,289.9 930.5,289.9C931.2,290.8 931.6,303.8 932.3,303.8C933.0,291.4 933.2,230.0 933.9,227.9C934.6,227.9 935.2,278.3 935.9,293.4C936.7,303.6 937.0,302.0 937.7,303.6C938.4,303.6 938.8,302.0 939.5,301.5C940.3,300.9 940.6,300.7 941.3,300.7C942.1,301.8 942.4,306.6 943.1,306.8C943.9,306.8 944.2,303.7 944.9,301.7C945.7,299.6 946.0,300.6 946.7,296.6C947.5,292.5 947.8,281.5 948.5,281.5C949.3,283.2 949.6,300.6 950.3,305.0C951.1,305.0 951.4,305.0 952.1,303.9C952.9,302.5 953.2,299.5 953.9,298.0C954.7,296.8 955.0,296.8 955.7,296.8C956.5,297.5 956.8,301.7 957.5,301.7C958.3,297.1 958.6,274.5 959.4,273.8C960.1,273.8 960.4,298.2 961.2,298.2C961.9,298.2 962.2,274.0 963.0,273.9C963.7,273.9 964.0,291.4 964.8,297.5C965.5,303.7 965.8,301.7 966.6,304.6C967.3,307.4 967.6,311.8 968.4,311.8C969.1,309.1 969.3,300.7 970.2,291.4C971.0,282.0 972.1,265.0 972.8,265.0C973.5,265.7 973.2,292.6 973.8,294.8C974.3,294.8 974.8,276.3 975.6,276.3C976.3,277.6 976.6,297.9 977.4,301.7C978.1,301.7 978.5,296.4 979.2,295.3C979.9,295.3 980.3,296.0 981.0,296.0C981.7,294.4 982.1,287.5 982.8,287.3C983.5,287.3 983.7,295.1 984.6,295.1C985.4,292.0 986.3,271.8 987.0,271.8C987.7,274.1 987.6,301.2 988.2,306.4C988.8,306.4 989.3,297.9 990.0,297.9C990.7,299.3 991.1,313.0 991.8,313.0C992.5,311.8 992.9,295.9 993.6,291.9C994.3,291.9 994.7,292.5 995.4,293.1C996.1,293.7 996.5,295.0 997.2,295.0C997.9,294.0 998.3,288.4 999.0,288.4C999.7,291.1 1000.1,305.9 1000.8,308.4C1001.5,308.4 1001.9,308.0 1002.6,301.0C1003.3,293.9 1003.7,277.1 1004.4,273.3C1005.1,273.3 1005.5,275.4 1006.2,281.8C1006.9,288.2 1007.3,305.0 1008.0,305.3C1008.7,305.3 1009.1,284.9 1009.8,283.2C1010.5,283.2 1010.9,294.7 1011.6,296.7C1012.3,296.7 1012.7,293.4 1013.4,293.4C1014.1,296.6 1014.5,311.9 1015.2,313.0C1015.9,313.0 1016.3,306.4 1017.0,299.0C1017.7,291.5 1018.1,280.9 1018.8,275.7C1019.5,272.8 1019.9,272.8 1020.6,272.8C1021.3,280.0 1021.7,308.0 1022.4,311.7C1023.1,311.7 1023.5,294.0 1024.2,291.4C1024.9,291.4 1025.3,298.5 1026.0,298.5C1026.7,296.6 1027.1,282.9 1027.8,281.9C1028.5,281.9 1028.9,291.5 1029.6,293.8C1030.3,293.8 1030.7,293.8 1031.4,293.3C1032.1,292.5 1032.5,289.3 1033.2,289.3C1033.9,289.4 1034.3,291.2 1035.0,293.6C1035.8,296.0 1036.1,301.4 1036.8,301.4C1037.6,288.5 1038.2,233.2 1038.9,229.5C1039.6,229.5 1039.8,267.6 1040.4,283.0C1041.1,298.5 1041.5,302.0 1042.2,307.0C1043.0,308.1 1043.3,308.1 1044.0,308.1C1044.8,304.5 1045.1,291.5 1045.8,289.5C1046.6,289.5 1046.9,298.0 1047.6,298.0C1048.4,294.8 1048.7,273.2 1049.4,273.2C1050.2,274.5 1050.6,304.4 1051.2,304.4C1051.9,291.5 1052.2,211.4 1052.9,208.7C1053.6,208.7 1054.1,269.8 1054.9,290.6C1055.6,311.5 1055.9,313.0 1056.7,313.0C1057.4,311.8 1057.7,288.0 1058.5,284.5C1059.2,284.5 1059.5,295.6 1060.3,295.6C1061.0,294.5 1061.4,285.6 1062.1,279.3C1062.7,273.0 1062.6,264.0 1063.3,264.0C1064.0,265.2 1064.8,278.6 1065.7,285.4C1066.5,292.1 1066.7,297.7 1067.5,297.7C1068.2,297.5 1068.5,285.6 1069.3,284.1C1070.0,284.1 1070.3,286.8 1071.1,290.3C1071.8,293.8 1072.1,300.9 1072.9,301.7C1073.6,301.7 1074.0,297.5 1074.7,294.0C1075.4,290.5 1075.8,284.1 1076.5,284.1C1077.2,287.0 1077.6,305.8 1078.3,308.3C1079.0,308.3 1079.4,296.6 1080.1,296.4C1080.8,296.4 1081.2,307.5 1081.9,307.5C1082.6,305.5 1083.0,286.4 1083.7,286.4C1084.4,286.8 1084.9,309.9 1085.5,309.9C1086.1,304.0 1085.9,262.6 1086.6,256.7C1087.3,256.7 1088.2,273.4 1089.1,280.4C1089.9,287.4 1090.2,289.4 1090.9,291.7C1091.6,292.2 1092.0,291.7 1092.7,292.2C1093.4,293.4 1093.8,297.7 1094.5,297.7C1095.2,293.9 1095.6,273.5 1096.3,273.5C1097.0,274.1 1097.5,300.9 1098.1,300.9C1098.7,296.0 1098.8,251.5 1099.5,249.3C1100.2,249.3 1100.9,282.9 1101.7,289.8C1102.5,289.8 1102.8,283.5 1103.5,283.5C1104.2,284.0 1104.6,288.2 1105.3,291.9C1106.0,295.7 1106.4,300.3 1107.1,302.4C1107.8,302.4 1108.2,302.4 1108.9,302.4C1109.6,300.4 1110.0,295.5 1110.7,292.4C1111.4,289.3 1111.8,286.9 1112.5,286.9C1113.2,287.5 1113.6,291.9 1114.3,295.2C1115.0,298.6 1115.4,303.7 1116.1,303.7C1116.8,299.8 1117.2,275.9 1117.9,275.9C1118.6,276.5 1119.0,302.3 1119.7,306.6C1120.4,306.6 1120.8,299.1 1121.5,297.3C1122.2,297.3 1122.6,297.9 1123.3,297.9C1124.0,296.4 1124.4,290.0 1125.1,290.0C1125.8,291.8 1126.2,306.0 1126.9,307.1C1127.6,307.1 1128.0,300.7 1128.7,295.8C1129.4,290.8 1129.6,295.8 1130.5,282.5C1131.4,266.3 1132.5,214.5 1133.2,214.5C1133.9,216.3 1133.6,273.7 1134.1,291.8C1134.7,304.7 1135.2,303.6 1135.9,304.7C1136.7,304.7 1137.0,301.9 1137.7,296.8C1138.5,291.7 1138.8,279.2 1139.5,279.2C1140.3,279.2 1140.6,294.5 1141.3,296.9C1142.1,296.9 1142.4,292.9 1143.1,291.1C1143.9,289.4 1144.2,290.8 1144.9,288.3C1145.7,285.7 1146.0,278.2 1146.7,278.2C1147.5,281.1 1147.8,299.0 1148.5,302.6C1149.3,302.6 1149.6,297.6 1150.3,296.0C1151.1,294.6 1151.4,295.7 1152.2,294.6C1152.9,293.6 1153.2,290.6 1154.0,290.6C1154.7,291.7 1155.0,298.9 1155.8,300.3C1156.5,300.3 1156.8,297.7 1157.6,297.7C1158.3,298.4 1158.6,303.5 1159.4,303.6C1160.1,303.6 1160.4,303.6 1161.2,298.5C1162.0,270.9 1162.7,168.9 1163.4,165.6C1164.1,165.6 1164.1,256.0 1164.8,281.8C1165.4,294.9 1165.8,291.3 1166.6,294.9C1167.3,298.5 1167.6,298.3 1168.4,300.0C1169.1,301.6 1169.4,303.1 1170.2,303.1C1170.9,299.5 1171.3,285.8 1172.0,282.2C1172.7,282.2 1173.1,282.3 1173.8,284.9C1174.5,287.4 1174.8,295.0 1175.6,295.0C1176.4,283.1 1177.0,225.1 1177.7,225.1C1178.4,227.1 1178.5,293.4 1179.2,304.8C1179.8,304.8 1180.3,284.0 1181.0,282.3C1181.7,282.3 1182.1,291.9 1182.8,296.5C1183.5,301.1 1183.9,305.5 1184.6,305.5C1185.3,305.3 1185.7,299.4 1186.4,295.6C1187.1,291.8 1187.5,287.8 1188.2,286.5C1188.9,286.5 1189.3,289.2 1190.0,289.2C1190.7,288.7 1191.1,283.9 1191.8,283.9C1192.5,287.2 1192.9,303.8 1193.6,305.6C1194.3,305.6 1194.7,297.5 1195.4,293.1C1196.1,288.8 1196.5,284.9 1197.2,283.8C1197.9,283.8 1198.3,285.8 1199.0,287.8C1199.7,289.9 1200.1,294.2 1200.8,294.2C1201.5,294.1 1201.9,289.0 1202.6,287.5C1203.3,287.0 1203.7,287.0 1204.4,287.0C1205.1,288.4 1205.5,295.0 1206.2,295.0C1206.9,294.7 1207.3,285.3 1208.0,285.3C1208.7,286.1 1209.1,297.0 1209.8,299.3C1210.5,299.3 1210.9,296.6 1211.6,296.6C1212.3,297.9 1212.7,305.5 1213.4,305.5C1214.1,305.2 1214.5,296.6 1215.2,295.0C1215.9,295.0 1216.3,297.1 1217.0,297.6C1217.7,297.6 1218.1,297.6 1218.8,297.3C1219.5,295.5 1219.9,288.4 1220.6,288.4C1221.3,290.1 1221.7,305.2 1222.4,305.6C1223.1,305.6 1223.6,305.6 1224.2,290.5C1224.9,274.2 1225.0,224.4 1225.7,224.0C1226.4,224.0 1227.0,273.2 1227.8,288.6C1228.6,301.0 1228.9,300.6 1229.6,301.0C1230.4,301.0 1230.7,290.5 1231.4,290.5C1232.2,291.0 1232.5,300.9 1233.2,303.6C1234.0,303.6 1234.3,303.6 1235.0,303.6C1235.8,303.2 1236.1,303.6 1236.8,301.4C1237.6,297.7 1237.9,286.2 1238.6,285.3C1239.4,285.3 1239.7,296.6 1240.4,296.9C1241.2,296.9 1241.5,287.8 1242.2,286.4C1243.0,286.4 1243.3,289.3 1244.0,290.1C1244.8,290.5 1245.1,290.5 1245.8,290.5C1246.6,290.1 1246.9,288.1 1247.7,288.1C1248.4,289.9 1248.7,299.5 1249.5,299.6C1250.2,299.6 1250.5,288.6 1251.3,288.6C1252.0,288.8 1252.3,299.0 1253.1,300.7C1253.8,300.7 1254.1,298.9 1254.9,296.8C1255.6,294.7 1255.9,290.1 1256.7,290.1C1257.4,290.1 1257.7,294.6 1258.5,296.8C1259.2,299.0 1259.5,299.6 1260.3,301.3C1261.0,302.9 1261.3,305.2 1262.1,305.2C1262.8,303.5 1263.1,293.1 1263.9,293.1C1264.6,294.1 1264.9,308.8 1265.7,310.3C1266.4,310.3 1266.8,301.1 1267.5,300.3C1268.2,300.3 1268.6,306.0 1269.3,306.0C1270.0,302.7 1270.4,287.7 1271.1,283.7C1271.8,283.7 1272.2,283.7 1272.9,286.3C1273.6,290.7 1274.0,304.3 1274.7,305.7C1275.4,305.7 1275.8,294.7 1276.5,293.4C1277.2,293.4 1277.6,296.9 1278.3,299.3C1279.0,301.8 1279.4,305.7 1280.1,305.7C1280.8,302.4 1281.2,284.2 1281.9,283.0C1282.6,283.0 1283.0,293.4 1283.7,299.2C1284.4,305.0 1284.6,312.0 1285.5,312.0C1286.3,291.4 1287.2,199.6 1287.9,196.4C1288.6,196.4 1288.5,275.4 1289.1,296.1C1289.7,300.2 1290.2,300.2 1290.9,300.2C1291.6,300.0 1292.0,295.4 1292.7,295.4C1293.4,295.8 1293.8,299.8 1294.5,302.0C1295.2,304.2 1295.6,306.5 1296.3,306.5C1297.0,304.8 1297.4,294.7 1298.1,293.4C1298.8,293.4 1299.2,299.4 1299.9,300.3C1300.6,300.3 1301.0,298.0 1301.7,298.0C1302.4,298.2 1302.8,300.8 1303.5,301.7C1304.2,302.5 1304.6,302.5 1305.3,302.5C1306.0,299.4 1306.4,286.2 1307.1,286.2C1307.8,286.7 1308.2,302.0 1308.9,305.3C1309.6,305.3 1310.0,305.3 1310.7,302.7C1311.4,298.9 1311.8,287.9 1312.5,286.0C1313.2,286.0 1313.6,292.9 1314.3,292.9C1315.0,292.3 1315.4,282.8 1316.1,282.8C1316.8,282.8 1317.2,289.8 1317.9,292.9C1318.6,295.9 1319.0,298.2 1319.7,298.2C1320.4,296.7 1320.8,287.3 1321.5,285.4C1322.2,285.4 1322.6,288.2 1323.3,288.7C1324.1,288.7 1324.4,287.8 1325.1,287.8C1325.9,288.0 1326.2,289.2 1326.9,289.4C1327.7,289.4 1328.0,289.4 1328.7,288.7C1329.5,288.1 1329.8,286.2 1330.5,286.2C1331.3,288.5 1331.6,298.8 1332.3,300.2C1333.1,300.2 1333.4,295.9 1334.1,293.5C1334.9,291.1 1335.2,288.3 1335.9,288.3C1336.7,290.4 1337.0,303.4 1337.7,303.8C1338.5,303.8 1338.8,290.7 1339.5,290.5C1340.3,290.5 1340.6,303.0 1341.3,303.0C1342.1,301.9 1342.4,284.7 1343.2,284.7C1343.9,285.6 1344.2,306.0 1345.0,307.4C1345.7,307.4 1346.0,295.5 1346.8,291.5C1347.5,287.5 1347.8,287.2 1348.6,287.2C1349.3,288.7 1349.6,298.8 1350.4,298.8C1351.1,298.2 1351.4,286.5 1352.2,283.9C1352.9,283.9 1353.2,283.9 1354.0,286.1C1354.7,288.8 1355.0,296.4 1355.8,297.4C1356.5,297.4 1356.8,291.2 1357.6,291.2C1358.3,291.5 1358.6,298.8 1359.4,298.8C1360.1,297.3 1360.4,284.3 1361.2,284.1C1361.9,284.1 1362.3,295.0 1363.0,297.5C1363.7,297.5 1364.1,296.5 1364.8,296.5C1365.5,297.2 1365.9,301.4 1366.6,301.4C1367.3,301.2 1367.7,295.3 1368.4,295.3C1369.1,296.0 1369.5,303.2 1370.2,304.8C1370.9,304.8 1371.3,304.8 1372.0,303.4C1372.7,298.2 1373.1,283.1 1373.8,278.5C1374.5,278.5 1374.9,278.5 1375.6,280.3C1376.3,286.3 1376.7,306.4 1377.4,308.7C1378.1,308.7 1378.5,308.7 1379.2,291.5C1379.9,271.3 1380.0,207.3 1380.7,207.3C1381.4,207.9 1382.0,276.3 1382.8,294.4C1383.6,297.7 1383.9,294.4 1384.6,297.7C1385.3,301.4 1385.7,313.0 1386.4,313.0C1387.1,311.3 1387.5,292.7 1388.2,289.3C1388.9,289.3 1389.3,294.7 1390.0,295.9C1390.7,295.9 1391.1,295.9 1391.8,295.4C1392.5,293.4 1392.9,287.6 1393.6,286.1C1394.3,286.1 1394.7,286.5 1395.4,287.9C1396.1,289.2 1396.5,291.6 1397.2,293.0C1397.9,294.5 1398.3,294.1 1399.0,295.2C1399.7,296.3 1400.1,298.6 1400.8,298.6C1401.5,295.3 1401.9,281.9 1402.6,278.6C1403.3,278.6 1403.7,278.6 1404.4,281.9C1405.1,288.1 1405.5,307.0 1406.2,309.4C1406.9,309.4 1407.3,295.2 1408.0,293.8C1408.7,293.8 1409.1,302.4 1409.8,302.4C1410.5,302.0 1410.9,294.3 1411.6,291.7C1412.3,289.3 1412.7,289.3 1413.4,289.3C1414.1,293.5 1414.5,313.0 1415.2,313.0C1415.9,312.1 1416.3,289.9 1417.0,284.8C1417.7,284.8 1418.1,284.8 1418.8,287.6C1419.6,290.8 1419.9,299.5 1420.6,301.1C1421.4,301.1 1421.7,299.4 1422.4,295.5C1423.2,291.5 1423.4,293.0 1424.2,281.3C1425.0,269.6 1425.8,236.9 1426.5,236.9C1427.2,240.9 1427.1,298.5 1427.8,301.6C1428.6,301.6 1429.7,254.2 1430.4,252.0C1431.1,252.0 1430.9,280.5 1431.4,290.5C1432.0,300.6 1432.4,302.0 1433.2,302.0C1434.1,296.6 1435.1,268.8 1435.8,263.5C1436.5,263.5 1436.3,270.3 1436.8,275.5C1437.4,280.6 1437.9,285.4 1438.7,289.4C1439.4,293.4 1439.7,295.5 1440.5,295.5C1441.2,295.1 1441.5,289.1 1442.3,287.5C1443.0,287.5 1443.3,287.5 1444.1,287.6C1444.8,288.3 1445.1,288.6 1445.9,291.0C1446.6,293.5 1446.9,299.7 1447.7,299.7C1448.4,298.7 1448.7,286.2 1449.5,286.2C1450.2,286.8 1450.5,299.5 1451.3,302.7C1452.0,302.7 1452.3,302.4 1453.1,302.4C1453.8,302.4 1454.0,302.6 1454.9,302.6C1455.7,282.9 1456.5,206.3 1457.2,204.0C1457.9,204.0 1457.9,272.7 1458.5,290.9C1459.1,294.9 1459.6,292.3 1460.3,294.9C1461.0,297.5 1461.4,301.6 1462.1,303.8C1462.8,306.1 1463.2,306.1 1463.9,306.1C1464.6,306.0 1465.0,306.1 1465.7,303.3C1466.4,300.4 1466.8,293.9 1467.5,291.5C1468.2,291.1 1468.6,291.5 1469.3,291.1C1470.0,289.7 1470.4,284.1 1471.1,284.1C1471.8,284.2 1472.2,290.9 1472.9,291.6C1473.6,291.6 1474.0,287.8 1474.7,287.7C1475.4,287.7 1475.8,290.3 1476.5,291.1C1477.2,292.0 1477.6,291.1 1478.3,292.1C1479.0,294.3 1479.4,300.3 1480.1,302.4C1480.8,302.6 1481.2,302.6 1481.9,302.6C1482.6,301.1 1483.0,298.3 1483.7,294.9C1484.4,291.5 1484.8,294.9 1485.5,285.6C1486.2,259.2 1486.7,162.9 1487.4,162.9C1488.1,165.6 1488.4,271.1 1489.1,299.0C1489.8,302.6 1490.2,302.6 1490.9,302.6C1491.6,302.2 1492.0,297.2 1492.7,297.1C1493.4,297.1 1493.8,302.2 1494.5,302.2C1495.2,300.7 1495.6,290.0 1496.3,289.7C1497.0,289.7 1497.4,298.5 1498.1,300.8C1498.8,301.6 1499.2,301.6 1499.9,301.6C1500.6,299.9 1501.0,294.8 1501.7,292.3C1502.4,289.7 1502.8,288.8 1503.5,288.8C1504.2,291.5 1504.6,305.8 1505.3,305.8C1506.0,299.6 1506.2,258.9 1506.9,258.0C1507.6,258.0 1508.2,294.2 1508.9,301.2C1509.7,301.2 1510.0,294.8 1510.7,293.0C1511.4,292.3 1511.8,292.3 1512.5,292.3C1513.2,292.4 1513.6,293.1 1514.3,293.1C1515.1,293.0 1515.4,291.5 1516.1,291.5C1516.9,291.9 1517.2,291.5 1517.9,295.0C1518.7,298.8 1519.0,307.9 1519.7,310.5C1520.5,310.5 1520.8,310.5 1521.5,307.7C1522.3,304.4 1522.6,295.8 1523.3,294.2C1524.1,294.2 1524.4,299.3 1525.1,299.3C1525.9,297.8 1526.2,287.9 1526.9,286.4C1527.7,286.4 1528.0,288.0 1528.7,291.7C1529.5,295.4 1529.8,304.0 1530.5,304.8C1531.3,304.8 1531.6,296.4 1532.3,295.6C1533.1,295.6 1533.4,300.6 1534.2,300.6C1534.9,298.9 1535.2,290.1 1536.0,287.2C1536.7,285.8 1537.0,285.8 1537.8,285.8C1538.5,285.8 1538.8,286.0 1539.6,286.8C1540.3,287.6 1540.6,286.8 1541.4,289.8C1542.1,293.3 1542.4,303.5 1543.2,304.1C1543.9,304.1 1544.2,292.9 1545.0,292.6C1545.7,292.6 1546.0,302.8 1546.8,302.8C1547.5,302.6 1547.8,294.9 1548.6,291.7C1549.3,288.6 1549.6,287.2 1550.4,287.2C1551.1,288.2 1551.4,296.7 1552.2,296.7C1552.9,294.1 1553.3,279.3 1554.0,274.0C1554.7,270.6 1555.1,270.6 1555.8,270.6C1556.5,275.0 1556.9,288.8 1557.6,295.7C1558.3,302.7 1558.7,305.4 1559.4,305.4C1560.1,304.9 1560.5,297.6 1561.2,293.5C1561.9,289.5 1562.2,293.5 1563.0,285.1C1563.8,267.8 1564.6,207.3 1565.3,207.3C1566.0,207.3 1566.0,269.7 1566.6,285.0C1567.2,285.0 1567.7,283.7 1568.4,283.7C1569.1,284.2 1569.5,285.1 1570.2,287.2C1570.9,289.4 1571.4,294.3 1572.0,294.3C1572.6,275.0 1572.3,190.3 1573.0,190.3C1573.7,192.7 1574.7,287.6 1575.6,306.6C1576.5,306.6 1576.7,291.2 1577.4,285.5C1578.1,279.7 1578.5,277.9 1579.2,277.9C1579.9,282.6 1580.3,304.9 1581.0,309.1C1581.7,309.1 1582.1,302.4 1582.8,299.0C1583.5,295.6 1583.9,292.2 1584.6,292.2C1585.3,292.3 1585.7,299.6 1586.4,299.6C1587.1,298.6 1587.5,288.8 1588.2,287.4C1588.9,287.4 1589.2,292.4 1590.0,292.4C1590.8,287.4 1591.7,262.2 1592.4,262.2C1593.1,262.2 1593.0,285.8 1593.6,292.6C1594.2,296.4 1594.7,295.1 1595.4,296.4C1596.1,297.7 1596.5,299.0 1597.2,299.0C1597.9,299.0 1598.3,297.5 1599.0,296.3C1599.7,295.2 1600.1,293.2 1600.8,293.2C1601.5,293.9 1601.9,297.0 1602.6,299.7C1603.3,302.3 1603.7,305.3 1604.4,306.6C1605.1,306.6 1605.5,306.6 1606.2,306.1C1606.9,302.4 1607.3,288.7 1608.0,287.8C1608.7,287.8 1609.1,301.8 1609.8,301.8C1610.6,297.6 1610.9,272.9 1611.6,266.8C1612.4,266.8 1612.7,271.4 1613.4,271.4C1614.2,254.5 1614.7,182.1 1615.4,182.1C1616.1,187.8 1616.3,274.9 1617.0,299.9C1617.7,306.9 1618.1,306.9 1618.8,306.9C1619.6,303.1 1619.9,281.2 1620.6,280.7C1621.4,280.7 1621.7,302.5 1622.4,304.5C1623.2,304.5 1623.5,293.3 1624.2,290.7C1625.0,290.7 1625.3,290.7 1626.0,291.3C1626.8,293.0 1627.1,298.0 1627.8,299.1C1628.6,299.1 1628.9,299.1 1629.7,296.9C1630.4,294.5 1630.7,290.5 1631.5,287.3C1632.2,284.1 1632.5,280.7 1633.3,280.7C1634.0,281.3 1634.3,287.5 1635.1,290.2C1635.8,292.9 1636.1,291.2 1636.9,294.3C1637.6,297.3 1637.9,304.7 1638.7,305.5C1639.4,305.5 1639.7,300.9 1640.5,298.4C1641.2,295.8 1641.5,294.2 1642.3,292.7C1643.0,291.3 1643.3,291.3 1644.1,291.0C1644.8,291.0 1645.1,291.0 1645.9,291.3C1646.6,293.8 1646.9,303.5 1647.7,303.5C1648.4,301.5 1648.8,284.0 1649.5,281.2C1650.2,281.2 1650.6,288.0 1651.3,289.4C1652.0,289.4 1652.4,287.8 1653.1,287.8C1653.8,290.9 1654.2,303.1 1654.9,304.8C1655.6,304.8 1656.0,299.4 1656.7,296.3C1657.4,293.3 1657.8,289.6 1658.5,289.6C1659.2,290.6 1659.6,297.2 1660.3,301.6C1661.0,306.1 1661.4,311.4 1662.1,311.9C1662.8,311.9 1663.2,309.5 1663.9,304.0C1664.6,298.4 1665.0,286.3 1665.7,284.2C1666.4,284.2 1666.8,289.3 1667.5,293.5C1668.2,297.6 1668.7,304.9 1669.3,304.9C1669.9,297.3 1669.9,259.3 1670.6,255.3C1671.3,255.3 1672.1,277.6 1672.9,284.9C1673.7,291.7 1674.0,288.8 1674.7,291.7C1675.4,294.7 1675.8,299.7 1676.5,299.7C1677.2,296.5 1677.6,276.6 1678.3,276.0C1679.0,276.0 1679.4,292.9 1680.1,296.5C1680.8,296.5 1681.2,293.9 1681.9,293.9C1682.6,294.2 1683.0,298.0 1683.7,298.0C1684.4,296.2 1684.9,297.5 1685.5,285.0C1686.1,272.5 1686.0,237.2 1686.7,235.6C1687.4,235.6 1688.3,264.8 1689.1,277.0C1690.0,289.2 1690.3,296.6 1690.9,296.6C1691.5,293.3 1691.5,260.2 1692.2,260.2C1692.9,260.7 1693.7,295.0 1694.5,299.3C1695.3,299.3 1695.6,285.4 1696.3,281.6C1697.0,280.4 1697.4,280.4 1698.1,280.4C1698.8,282.7 1699.2,291.4 1699.9,292.8C1700.6,292.8 1701.0,290.1 1701.7,287.4C1702.4,284.8 1702.8,279.6 1703.5,279.6C1704.2,280.2 1704.6,288.5 1705.3,290.3C1706.0,290.3 1706.4,288.5 1707.1,288.5C1707.9,289.2 1708.1,294.2 1708.9,294.2C1709.8,269.1 1710.7,164.3 1711.4,162.9C1712.1,162.9 1711.9,260.6 1712.5,287.3C1713.1,296.8 1713.6,294.3 1714.3,296.8C1715.1,299.2 1715.4,299.6 1716.1,299.6C1716.9,297.0 1717.2,285.1 1717.9,283.5C1718.7,283.5 1719.0,289.6 1719.7,291.4C1720.5,292.3 1720.8,291.4 1721.5,292.3C1722.3,295.0 1722.6,305.1 1723.3,305.2C1724.1,305.2 1724.4,293.4 1725.1,292.8C1725.9,292.8 1726.2,302.0 1727.0,302.0C1727.7,302.0 1728.0,292.6 1728.8,292.6C1729.5,294.2 1729.8,310.0 1730.6,310.0C1731.3,306.8 1731.6,279.6 1732.4,276.9C1733.1,276.9 1733.4,291.1 1734.2,296.4C1734.9,301.8 1735.2,303.5 1736.0,303.5C1736.7,302.5 1737.0,303.5 1737.8,291.3C1738.6,268.0 1739.2,188.7 1739.9,187.0C1740.6,187.0 1740.7,262.5 1741.4,283.0C1742.0,289.4 1742.4,288.4 1743.2,289.4C1743.9,289.4 1744.2,289.4 1745.0,287.9C1745.7,285.9 1746.1,279.2 1746.8,279.2C1747.5,280.6 1747.9,295.0 1748.6,295.0C1749.3,294.8 1749.7,279.8 1750.4,278.1C1751.1,278.1 1751.5,284.7 1752.2,286.3C1752.9,286.3 1753.3,285.9 1754.0,285.9C1754.7,287.8 1755.1,293.7 1755.8,295.8C1756.5,296.5 1756.9,296.5 1757.6,296.5C1758.3,295.2 1758.7,290.7 1759.4,289.2C1760.1,289.2 1760.5,289.2 1761.2,289.4C1761.9,292.2 1762.3,301.0 1763.0,303.2C1763.7,303.2 1764.1,303.2 1764.8,300.5C1765.5,294.4 1765.9,273.3 1766.6,273.0C1767.3,273.0 1767.7,296.4 1768.4,298.8C1769.1,298.8 1769.5,287.0 1770.2,285.3C1770.9,285.3 1771.3,290.7 1772.0,290.7C1772.7,287.7 1773.1,270.4 1773.8,270.3C1774.5,270.3 1774.9,284.2 1775.6,290.3C1776.3,296.4 1776.7,300.8 1777.4,300.9C1778.1,300.9 1778.5,291.1 1779.2,291.0C1779.9,291.0 1780.3,300.1 1781.0,300.1C1781.7,299.9 1782.1,290.2 1782.8,289.7C1783.5,289.7 1783.9,296.9 1784.6,297.7C1785.3,297.7 1785.7,296.0 1786.4,293.9C1787.1,291.7 1787.5,286.8 1788.2,286.8C1788.9,287.8 1789.3,298.4 1790.0,298.7C1790.7,298.7 1791.1,294.2 1791.8,288.0C1792.5,281.7 1792.9,267.5 1793.6,267.5C1794.3,269.1 1794.7,289.9 1795.4,296.2C1796.1,299.2 1796.5,298.8 1797.2,299.2C1797.9,299.2 1798.3,299.0 1799.0,298.0C1799.7,297.1 1800.1,294.2 1800.8,294.2C1801.5,294.4 1802.0,299.1 1802.6,299.1C1803.3,293.4 1803.4,265.7 1804.1,265.7C1804.8,266.0 1805.4,296.9 1806.2,300.4C1807.0,300.4 1807.3,283.4 1808.0,283.4C1808.8,285.2 1809.1,307.5 1809.8,309.8C1810.6,309.8 1810.9,301.3 1811.6,294.9C1812.4,288.4 1812.7,277.7 1813.4,277.7C1814.2,279.2 1814.5,299.0 1815.2,302.2C1816.0,302.2 1816.3,294.8 1817.0,293.9C1817.8,293.9 1818.1,293.9 1818.8,297.5C1819.6,301.1 1819.9,312.0 1820.6,312.0C1821.4,310.6 1821.9,306.6 1822.5,290.6C1823.0,274.6 1822.9,232.8 1823.6,232.0C1824.3,232.0 1825.2,273.8 1826.1,286.8C1826.9,296.7 1827.1,295.3 1827.9,296.7C1828.6,296.7 1829.0,296.7 1829.7,294.0C1830.3,279.7 1830.3,225.1 1831.0,225.1C1831.7,225.6 1832.4,286.2 1833.3,296.6C1834.1,296.6 1834.3,277.1 1835.1,277.1C1835.8,277.2 1836.1,291.9 1836.9,297.4C1837.6,302.8 1837.9,304.3 1838.7,304.3C1839.4,303.0 1839.7,293.5 1840.5,290.8C1841.2,290.6 1841.6,290.8 1842.3,290.6C1843.0,289.7 1843.4,286.5 1844.1,286.5C1844.8,287.9 1845.2,297.2 1845.9,297.2C1846.6,296.2 1847.0,281.9 1847.7,281.9C1848.4,284.7 1848.8,309.0 1849.5,311.4C1850.2,311.4 1850.6,297.7 1851.3,293.4C1852.0,290.0 1852.4,291.8 1853.1,290.0C1853.8,288.3 1854.2,284.8 1854.9,284.8C1855.6,286.7 1856.0,296.0 1856.7,299.7C1857.4,303.4 1857.8,303.4 1858.5,303.4C1859.2,301.5 1859.6,291.7 1860.3,290.3C1861.0,290.3 1861.4,295.1 1862.1,296.6C1862.8,297.6 1863.2,296.6 1863.9,297.6C1864.6,299.0 1865.0,302.8 1865.7,303.3C1866.4,303.3 1866.8,300.3 1867.5,300.3C1868.2,300.8 1868.6,305.6 1869.3,305.6C1870.0,302.2 1870.4,283.1 1871.1,283.1C1871.8,284.6 1872.2,311.4 1872.9,313.0C1873.6,313.0 1874.0,296.4 1874.7,290.9C1875.4,285.6 1875.8,286.3 1876.5,285.6C1877.2,285.6 1877.6,285.6 1878.3,287.2C1879.0,289.8 1879.4,295.5 1880.1,298.4C1880.8,301.3 1881.2,298.8 1881.9,301.7C1882.6,304.6 1883.0,312.2 1883.7,313.0C1884.4,313.0 1884.8,310.4 1885.5,305.5C1886.2,300.7 1886.6,291.3 1887.3,288.6C1888.0,288.6 1888.4,291.7 1889.1,292.2C1889.8,292.2 1890.2,291.6 1890.9,291.2C1891.6,290.7 1892.0,290.0 1892.7,290.0C1893.4,290.5 1893.8,293.7 1894.5,293.7C1895.2,293.7 1895.6,289.9 1896.3,289.9C1897.0,292.2 1897.4,303.5 1898.1,305.1C1898.9,305.1 1899.2,298.9 1899.9,298.0C1900.7,298.0 1901.0,300.4 1901.7,300.4C1902.5,299.6 1902.8,296.8 1903.5,293.8C1904.3,290.8 1904.6,285.3 1905.3,285.3C1906.1,286.3 1906.4,297.5 1907.1,298.9C1907.9,298.9 1908.2,291.8 1908.9,291.8C1909.7,294.4 1910.0,309.3 1910.7,312.0C1911.5,312.0 1911.8,311.0 1912.5,305.6C1913.3,300.2 1913.6,288.6 1914.3,284.9C1915.1,284.9 1915.4,285.6 1916.1,286.7C1916.9,287.9 1917.2,289.2 1918.0,290.5C1918.7,291.8 1919.0,290.5 1919.8,293.3C1920.5,296.2 1920.8,304.8 1921.6,304.8C1922.3,304.8 1922.6,294.8 1923.4,293.6C1924.1,293.6 1924.4,299.0 1925.2,299.0C1925.9,298.8 1926.2,293.6 1927.0,292.4C1927.7,292.4 1928.0,292.4 1928.8,293.3C1929.5,295.9 1929.8,305.2 1930.6,305.6C1931.3,305.6 1931.6,295.3 1932.4,295.3C1933.1,296.5 1933.4,311.8 1934.2,311.8C1934.9,311.7 1935.2,297.4 1936.0,294.8C1936.7,294.8 1937.1,297.7 1937.8,298.4C1938.5,298.5 1938.9,298.4 1939.6,298.5C1940.3,299.0 1940.7,298.5 1941.4,300.8C1942.1,303.4 1942.5,311.5 1943.2,311.5C1943.9,307.8 1944.3,286.5 1945.0,282.3C1945.7,282.3 1946.1,289.7 1946.8,290.7C1947.5,290.7 1947.9,287.2 1948.6,287.2C1949.3,291.1 1949.7,308.1 1950.4,310.5C1951.1,310.5 1951.5,301.4 1952.2,299.1C1952.9,299.0 1953.3,299.0 1954.0,299.0C1954.7,299.0 1955.1,299.0 1955.8,299.0C1956.5,295.1 1956.9,279.5 1957.6,279.5C1958.3,280.0 1958.8,301.7 1959.4,301.7C1960.0,298.3 1959.9,263.0 1960.6,262.2C1961.3,262.2 1962.2,291.0 1963.0,297.8C1963.8,297.8 1964.4,296.3 1964.8,295.9" fill="none" stroke="url(#g4)" stroke-width="1.6" stroke-linejoin="round"/>
<rect x="592" y="401" width="1386" height="2" fill="#c9cbce"/>
<rect x="603.8" y="417" width="21" height="6" rx="3" fill="#a9b94a"/>
<rect x="592" y="437" width="1386" height="2" fill="#e0e1e3"/>
<path d="M676.0,537.3H1966.3M676.0,589.1H1966.3M676.0,641.0H1966.3M676.0,692.8H1966.3M676.0,744.7H1966.3M676.0,796.5H1966.3M676.0,848.4H1966.3" stroke="#ebecee" stroke-width="1" fill="none"/>
<path d="M677.2,537.5V875.4M806.2,537.5V875.4M935.3,537.5V875.4M1064.4,537.5V875.4M1193.4,537.5V875.4M1322.5,537.5V875.4M1451.5,537.5V875.4M1580.6,537.5V875.4M1709.6,537.5V875.4M1838.7,537.5V875.4" stroke="#e4e5e8" stroke-width="1" fill="none"/>
<path d="M764.2,825.6C764.6,824.5 765.4,820.1 766.1,819.8C766.9,819.8 767.3,824.0 768.0,824.0C768.8,822.2 769.3,815.6 770.0,810.4C770.6,805.2 770.7,797.9 771.5,797.9C772.3,800.9 772.9,820.1 773.8,825.6C774.6,825.6 774.9,825.4 775.7,825.2C776.5,825.0 776.7,825.2 777.6,824.5C778.5,818.7 779.4,799.4 780.2,796.5C781.0,796.5 780.8,807.1 781.5,810.1C782.1,811.3 782.6,810.1 783.4,811.3C784.1,814.5 784.4,826.4 785.3,826.4C786.1,811.3 786.8,738.4 787.6,735.9C788.4,735.9 788.4,796.8 789.1,814.1C789.8,822.4 790.3,822.4 791.0,822.4C791.8,821.9 792.2,811.7 793.0,811.7C793.7,811.8 794.1,820.8 794.9,822.7C795.6,822.7 796.4,821.5 796.8,821.2" fill="none" stroke="#ecc73c" stroke-width="1.6" stroke-linejoin="round"/>
<path d="M764.2,832.2C764.6,832.1 765.4,831.9 766.1,831.9C766.9,831.9 767.3,831.9 768.0,831.9C768.8,831.8 769.2,831.2 770.0,831.2C770.7,831.2 771.1,831.7 771.9,831.7C772.6,831.6 773.0,830.6 773.8,830.5C774.6,830.5 774.9,831.4 775.7,831.4C776.5,831.4 776.9,830.6 777.6,830.6C778.4,830.8 778.8,832.3 779.5,832.3C780.3,832.3 780.7,831.1 781.5,831.0C782.2,831.0 782.6,831.6 783.4,831.8C784.1,831.9 784.5,831.9 785.3,831.9C786.1,831.9 786.4,831.9 787.2,832.0C788.0,832.1 788.4,832.4 789.1,832.4C789.9,832.1 790.3,830.6 791.0,830.2C791.8,830.2 792.2,830.2 793.0,830.3C793.7,830.4 794.1,830.6 794.9,830.7C795.6,830.7 796.4,830.4 796.8,830.4" fill="none" stroke="#5fa04e" stroke-width="1.6" stroke-linejoin="round"/>
<path d="M806.4,799.1C806.8,803.4 807.5,815.4 808.3,820.7C809.1,825.4 809.4,824.7 810.2,825.4C811.0,825.4 811.3,825.4 812.1,824.6C812.9,821.3 813.2,809.0 814.0,808.7C814.8,808.7 815.1,820.0 815.9,823.3C816.7,825.6 817.0,824.9 817.8,825.6C818.6,826.2 819.0,826.4 819.7,826.4C820.5,826.1 820.9,824.3 821.6,823.9C822.4,823.9 822.8,824.2 823.5,824.5C824.3,824.8 824.7,825.4 825.4,825.4C826.2,825.1 826.6,825.4 827.3,823.0C828.1,819.8 828.5,809.0 829.2,809.0C830.0,809.4 830.4,822.2 831.1,825.2C831.9,825.2 832.1,825.2 833.0,824.0C834.0,817.2 835.0,791.9 835.8,791.0C836.6,791.0 836.2,817.5 836.8,819.7C837.4,819.7 838.0,801.8 838.7,801.8C839.5,802.7 839.9,819.6 840.6,824.3C841.4,825.3 841.8,825.3 842.5,825.3C843.3,825.1 843.7,823.5 844.4,823.2C845.2,823.2 845.6,823.7 846.3,824.2C847.1,824.7 847.5,826.0 848.2,826.0C849.0,823.2 849.4,812.1 850.1,810.6C850.9,810.6 851.3,815.8 852.0,818.4C852.8,820.9 853.2,822.9 853.9,823.4C854.7,823.4 855.1,822.0 855.8,821.1C856.6,820.2 857.0,818.9 857.7,818.8C858.5,818.8 858.9,819.9 859.6,820.7C860.4,821.6 860.8,823.0 861.5,823.0C862.3,821.0 862.7,810.8 863.4,810.8C864.2,811.0 864.6,821.4 865.4,824.3C866.1,824.9 866.5,824.9 867.3,824.9C868.0,824.7 868.4,823.0 869.2,822.9C869.9,822.9 870.3,824.4 871.1,824.5C871.8,824.5 872.2,823.5 873.0,823.4C873.7,823.4 874.1,823.7 874.9,824.0C875.6,824.3 876.0,824.8 876.8,824.8C877.5,823.5 877.9,817.7 878.7,817.3C879.4,817.3 879.8,822.7 880.6,822.7C881.3,820.8 881.7,807.5 882.5,807.5C883.2,808.0 883.6,822.1 884.4,825.2C885.1,825.2 885.5,825.2 886.3,823.4C887.0,821.7 887.4,816.4 888.2,816.4C888.9,816.7 889.3,823.0 890.1,824.7C890.8,824.7 891.2,824.7 892.0,824.6C892.7,819.4 892.9,798.5 893.7,798.4C894.5,798.4 895.0,819.0 895.8,824.2C896.6,824.5 896.9,824.5 897.7,824.5C898.4,822.7 898.8,817.4 899.6,815.3C900.3,813.9 900.7,813.9 901.5,813.9C902.2,815.4 902.6,820.5 903.4,822.8C904.1,825.2 904.5,825.0 905.3,825.6C906.0,825.8 906.4,825.6 907.2,825.8C907.9,826.1 908.3,826.9 909.1,826.9C909.8,825.7 910.2,819.8 911.0,819.5C911.8,819.5 912.1,824.9 912.9,825.4C913.7,825.4 914.0,822.3 914.8,822.0C915.6,822.0 915.9,823.0 916.7,823.9C917.5,824.9 917.8,826.8 918.6,826.8C919.4,823.5 919.9,825.4 920.5,807.4C921.1,789.4 920.9,736.8 921.7,736.8C922.5,740.3 923.4,807.5 924.3,824.9C925.2,824.9 925.4,823.8 926.2,823.8C927.0,823.8 927.3,824.3 928.1,824.7C928.9,825.1 929.2,825.8 930.0,825.8C930.8,825.5 931.1,823.6 931.9,823.3C932.7,823.3 933.0,824.7 933.8,824.7C934.6,823.8 935.0,819.1 935.7,818.7C936.5,818.7 936.9,823.0 937.6,823.0C938.4,821.0 938.8,808.7 939.5,808.7C940.3,809.0 940.7,821.3 941.4,824.5C942.2,824.5 942.6,824.5 943.3,824.2C944.1,823.2 944.5,822.8 945.2,819.5C946.0,816.2 946.4,807.8 947.1,807.8C947.9,809.0 948.3,821.7 949.0,825.2C949.8,825.2 950.2,825.2 950.9,825.1C951.7,824.6 952.1,823.3 952.8,823.0C953.6,823.0 954.0,823.5 954.7,823.5C955.5,822.5 955.9,817.9 956.6,817.9C957.4,818.2 957.8,823.5 958.5,825.2C959.3,826.0 959.7,826.0 960.4,826.0C961.2,825.8 961.6,824.5 962.3,824.3C963.1,824.3 963.5,824.8 964.2,824.8C965.0,821.4 965.4,808.5 966.1,807.5C966.9,807.5 967.2,819.8 968.0,819.8C968.9,815.9 969.6,787.8 970.4,787.8C971.2,788.6 971.2,816.2 971.8,823.9C972.5,825.9 973.0,825.6 973.7,825.9C974.5,825.9 974.9,825.7 975.6,825.0C976.4,824.4 976.8,823.1 977.5,822.6C978.3,822.5 978.7,822.5 979.4,822.5C980.2,822.8 980.6,823.8 981.4,824.2C982.1,824.5 982.5,824.5 983.3,824.5C984.0,823.3 984.5,824.5 985.2,818.4C985.8,769.4 985.7,579.7 986.5,579.7C987.3,580.9 988.1,775.4 989.0,824.6C989.8,825.7 990.1,825.5 990.9,825.7C991.6,825.7 992.0,825.7 992.8,825.7C993.5,825.6 993.9,825.7 994.7,825.2C995.4,824.7 995.8,825.2 996.6,823.3C997.3,820.8 997.7,813.2 998.5,812.7C999.2,812.7 999.6,818.1 1000.4,820.4C1001.1,822.6 1001.5,823.9 1002.3,823.9C1003.0,821.0 1003.4,807.5 1004.2,806.2C1004.9,806.2 1005.3,813.9 1006.1,817.4C1006.8,820.9 1007.2,822.3 1008.0,823.9C1008.7,825.1 1009.1,825.0 1009.9,825.1C1010.6,825.1 1011.0,824.9 1011.8,824.6C1012.5,824.3 1012.9,824.6 1013.7,823.6C1014.4,821.9 1014.8,816.2 1015.6,816.2C1016.3,816.6 1016.7,823.6 1017.5,825.7C1018.2,826.7 1018.6,826.7 1019.4,826.7C1020.1,826.6 1020.5,826.7 1021.3,825.1C1022.0,823.3 1022.4,819.5 1023.2,817.6C1023.9,815.7 1024.3,815.6 1025.1,815.6C1025.8,816.1 1026.2,818.2 1027.0,820.2C1027.8,822.2 1028.1,825.2 1028.9,825.7C1029.7,825.7 1030.0,822.8 1030.8,822.6C1031.6,822.6 1031.9,824.2 1032.7,824.5C1033.5,824.5 1033.8,824.5 1034.6,823.9C1035.4,822.3 1035.7,818.7 1036.5,816.4C1037.3,814.0 1037.7,816.4 1038.4,812.2C1039.1,806.0 1039.4,786.9 1040.2,785.5C1041.0,785.5 1041.4,797.3 1042.2,805.2C1043.0,813.0 1043.3,821.0 1044.1,824.8C1044.9,824.8 1045.2,824.1 1046.0,824.1C1046.8,824.2 1047.1,825.0 1047.9,825.1C1048.7,825.1 1049.0,825.1 1049.8,824.7C1050.6,824.0 1051.0,822.0 1051.7,822.0C1052.5,822.0 1052.9,824.4 1053.6,825.0C1054.4,825.4 1054.8,825.4 1055.5,825.4C1056.3,824.1 1056.7,818.9 1057.4,818.4C1058.2,818.4 1058.6,822.7 1059.3,822.7C1060.1,822.5 1060.5,819.5 1061.2,817.1C1062.0,814.7 1062.4,810.8 1063.1,810.8C1063.9,812.2 1064.3,821.4 1065.0,823.7C1065.8,823.7 1066.2,822.3 1066.9,822.3C1067.7,822.5 1068.1,824.8 1068.8,824.8C1069.6,824.5 1070.0,821.0 1070.7,821.0C1071.5,821.1 1071.9,824.6 1072.6,825.2C1073.4,825.2 1073.8,825.2 1074.5,824.2C1075.3,822.1 1075.7,814.6 1076.4,814.6C1077.2,814.8 1077.6,823.5 1078.3,825.0C1079.1,825.0 1079.5,822.8 1080.2,821.9C1081.0,820.9 1081.4,820.2 1082.1,820.2C1082.9,820.9 1083.3,824.5 1084.0,825.3C1084.8,825.3 1085.3,825.3 1085.9,824.0C1086.6,818.1 1086.3,795.6 1087.1,795.6C1087.9,795.7 1088.8,818.4 1089.7,824.6C1090.7,826.2 1090.9,826.2 1091.6,826.2C1092.4,825.4 1092.8,821.5 1093.5,820.3C1094.3,820.2 1094.7,820.3 1095.4,820.2C1096.2,819.2 1096.6,815.6 1097.4,815.6C1098.1,816.3 1098.5,823.1 1099.3,823.8C1100.0,823.8 1100.4,823.8 1101.2,819.0C1101.9,802.0 1102.4,739.1 1103.2,739.1C1104.0,740.4 1104.2,809.0 1105.0,825.7C1105.7,825.7 1106.1,824.0 1106.9,822.2C1107.6,820.4 1108.0,816.6 1108.8,816.6C1109.5,817.4 1109.9,824.7 1110.7,826.3C1111.4,826.3 1111.8,825.2 1112.6,824.7C1113.3,824.3 1113.7,824.0 1114.5,824.0C1115.2,824.0 1115.6,824.6 1116.4,824.9C1117.1,825.2 1117.5,825.4 1118.3,825.4C1119.0,825.3 1119.4,825.2 1120.2,824.8C1120.9,824.4 1121.3,823.5 1122.1,823.5C1122.8,823.6 1123.2,825.3 1124.0,825.4C1124.7,825.4 1125.1,824.7 1125.9,823.7C1126.6,822.8 1127.0,821.4 1127.8,820.7C1128.5,820.4 1128.9,820.7 1129.7,820.4C1130.4,818.8 1130.8,812.9 1131.6,812.9C1132.3,813.9 1132.7,822.7 1133.5,825.0C1134.2,825.0 1134.6,825.0 1135.4,824.6C1136.1,822.8 1136.5,816.1 1137.3,816.1C1138.0,816.2 1138.4,823.5 1139.2,825.1C1139.9,825.1 1140.3,824.5 1141.1,824.3C1141.8,824.0 1142.2,823.9 1143.0,823.9C1143.8,823.9 1144.1,823.9 1144.9,824.0C1145.7,824.2 1146.1,824.4 1146.8,824.4C1147.5,818.2 1147.4,793.0 1148.2,792.9C1149.0,792.9 1149.7,817.5 1150.6,823.8C1151.5,824.4 1151.7,824.3 1152.5,824.4C1153.3,824.4 1153.6,824.4 1154.4,824.0C1155.2,818.7 1155.5,798.0 1156.3,798.0C1157.1,798.4 1157.4,820.9 1158.2,825.9C1159.0,825.9 1159.3,823.2 1160.1,822.8C1160.9,822.8 1161.2,823.3 1162.0,823.5C1162.8,823.6 1163.1,823.6 1163.9,823.6C1164.7,820.6 1165.0,812.4 1165.8,808.7C1166.6,805.0 1167.0,805.0 1167.7,805.0C1168.5,805.8 1168.9,809.2 1169.6,812.7C1170.4,816.3 1170.8,820.3 1171.5,822.7C1172.3,824.3 1172.7,824.0 1173.4,824.3C1174.2,824.5 1174.6,824.5 1175.3,824.5C1176.1,824.3 1176.5,824.5 1177.2,823.7C1178.0,820.9 1178.4,812.3 1179.1,810.7C1179.9,810.7 1180.3,814.6 1181.0,815.7C1181.8,816.3 1182.2,815.7 1182.9,816.3C1183.7,818.0 1184.1,823.1 1184.8,824.2C1185.6,824.2 1186.0,821.8 1186.7,821.8C1187.5,822.0 1187.9,824.4 1188.6,825.1C1189.4,825.4 1189.8,825.3 1190.5,825.4C1191.3,825.6 1191.7,825.8 1192.4,825.8C1193.2,825.6 1193.6,824.6 1194.3,824.3C1195.1,824.1 1195.5,824.1 1196.2,824.1C1197.0,824.1 1197.4,824.4 1198.1,824.4C1198.9,824.4 1199.3,824.2 1200.0,824.2C1200.8,824.2 1201.2,824.5 1201.9,824.5C1202.7,823.9 1203.1,824.4 1203.8,821.6C1204.6,818.8 1205.0,810.6 1205.7,810.5C1206.5,810.5 1206.9,818.2 1207.6,821.2C1208.4,824.2 1208.8,825.2 1209.5,825.7C1210.3,825.7 1210.7,825.2 1211.4,823.9C1212.2,822.6 1212.6,819.1 1213.4,819.1C1214.1,819.1 1214.5,822.5 1215.3,823.9C1216.0,825.3 1216.2,826.0 1217.2,826.0C1218.1,813.6 1219.0,761.6 1219.8,761.6C1220.6,761.6 1220.3,812.9 1221.0,825.9C1221.6,826.3 1222.1,826.3 1222.9,826.3C1223.6,826.1 1224.0,825.3 1224.8,824.9C1225.5,824.5 1225.9,824.9 1226.7,824.4C1227.4,823.5 1227.8,820.4 1228.6,820.4C1229.3,820.5 1229.7,824.0 1230.5,824.9C1231.2,824.9 1231.6,824.9 1232.4,824.9C1233.1,824.4 1233.5,822.2 1234.3,822.1C1235.0,822.1 1235.4,823.6 1236.2,824.4C1236.9,825.1 1237.3,825.9 1238.1,825.9C1238.8,824.8 1239.2,819.7 1240.0,819.0C1240.7,819.0 1241.1,821.1 1241.9,822.2C1242.6,823.3 1243.0,823.8 1243.8,824.4C1244.5,824.9 1244.9,824.9 1245.7,824.9C1246.4,824.7 1246.8,823.3 1247.6,823.1C1248.3,823.1 1248.7,823.9 1249.5,824.4C1250.2,824.8 1250.6,825.4 1251.4,825.4C1252.1,825.2 1252.5,823.8 1253.3,823.7C1254.0,823.7 1254.4,824.7 1255.2,824.8C1255.9,824.8 1256.3,824.7 1257.1,824.2C1257.8,823.6 1258.2,822.1 1259.0,822.1C1259.8,822.2 1260.1,824.3 1260.9,824.7C1261.7,824.7 1262.0,824.5 1262.8,824.3C1263.6,824.1 1263.9,823.7 1264.7,823.7C1265.5,823.8 1265.8,824.5 1266.6,824.7C1267.4,824.7 1267.7,824.7 1268.5,824.7C1269.3,824.3 1269.6,824.7 1270.4,822.9C1271.2,820.8 1271.5,814.1 1272.3,814.1C1273.1,814.1 1273.4,820.9 1274.2,822.8C1275.0,823.3 1275.4,823.3 1276.1,823.3C1276.8,796.0 1276.9,689.1 1277.7,686.7C1278.5,686.7 1279.1,783.7 1279.9,811.3C1280.7,824.9 1281.0,822.2 1281.8,824.9C1282.6,824.9 1283.0,824.9 1283.7,824.9C1284.5,825.0 1284.9,825.8 1285.6,825.8C1286.4,822.9 1286.8,815.0 1287.5,810.4C1288.3,805.8 1288.7,802.7 1289.4,802.7C1290.2,804.9 1290.6,818.9 1291.3,821.6C1292.1,821.6 1292.5,816.1 1293.2,815.9C1294.0,815.9 1294.4,818.5 1295.1,820.5C1295.9,822.6 1296.3,825.5 1297.0,826.4C1297.8,826.4 1298.2,826.4 1298.9,825.1C1299.7,823.1 1300.2,825.1 1300.8,816.1C1301.5,797.0 1301.3,729.5 1302.1,729.5C1302.9,731.1 1303.7,806.0 1304.6,824.0C1305.5,824.0 1305.8,819.5 1306.5,819.4C1307.3,819.4 1307.7,822.7 1308.4,823.6C1309.2,823.9 1309.4,823.9 1310.3,823.9C1311.2,818.5 1312.2,797.3 1313.0,796.5C1313.8,796.5 1313.5,815.9 1314.1,819.7C1314.7,819.7 1315.3,815.5 1316.0,815.5C1316.8,816.3 1317.2,821.6 1317.9,823.4C1318.7,824.9 1319.1,824.5 1319.8,824.9C1320.6,825.3 1321.0,825.2 1321.7,825.3C1322.5,825.3 1322.9,825.2 1323.6,825.1C1324.4,825.1 1324.8,825.1 1325.5,824.9C1326.3,824.5 1326.7,823.6 1327.4,823.6C1328.2,823.6 1328.6,824.6 1329.4,824.6C1330.1,823.7 1330.5,819.1 1331.3,819.1C1332.0,819.3 1332.4,824.7 1333.2,825.9C1333.9,825.9 1334.3,825.6 1335.1,825.1C1335.8,824.6 1336.2,824.2 1337.0,823.4C1337.7,822.6 1338.1,821.2 1338.9,821.2C1339.6,821.6 1340.0,824.8 1340.8,825.6C1341.5,825.6 1341.8,825.6 1342.7,825.1C1343.6,811.3 1344.5,757.1 1345.3,756.6C1346.1,756.6 1345.9,808.8 1346.5,822.7C1347.1,826.1 1347.6,825.5 1348.4,826.1C1349.1,826.1 1349.5,826.0 1350.3,825.7C1351.0,825.3 1351.4,825.7 1352.2,824.3C1352.9,822.3 1353.3,824.3 1354.1,815.5C1354.8,806.4 1355.0,778.8 1355.8,778.6C1356.6,778.6 1357.1,805.5 1357.9,814.4C1358.7,823.2 1359.0,823.1 1359.8,823.2C1360.5,823.2 1360.9,814.9 1361.7,814.9C1362.4,815.3 1362.9,825.5 1363.6,825.5C1364.2,815.1 1364.2,763.5 1365.0,763.0C1365.8,763.0 1366.5,810.9 1367.4,822.8C1368.2,822.8 1368.5,822.8 1369.3,822.8C1370.0,823.2 1370.4,824.2 1371.2,824.7C1371.9,825.2 1372.3,825.3 1373.1,825.3C1373.8,824.8 1374.2,823.8 1375.0,821.7C1375.8,819.6 1376.1,821.7 1376.9,814.7C1377.7,807.0 1378.0,783.2 1378.8,783.2C1379.6,783.9 1379.9,809.6 1380.7,818.2C1381.5,826.2 1381.8,825.2 1382.6,826.2C1383.4,826.2 1383.7,823.5 1384.5,823.4C1385.3,823.4 1385.6,825.9 1386.4,825.9C1387.2,825.2 1387.5,820.1 1388.3,819.7C1389.1,819.7 1389.4,823.1 1390.2,824.0C1391.0,824.1 1391.3,824.0 1392.1,824.1C1392.9,824.3 1393.2,825.0 1394.0,825.1C1394.8,825.1 1395.1,825.1 1395.9,824.6C1396.7,823.8 1397.1,821.6 1397.8,821.4C1398.6,821.4 1399.0,823.4 1399.7,823.4C1400.5,822.5 1400.9,817.0 1401.6,816.7C1402.4,816.7 1402.8,820.4 1403.5,822.0C1404.3,823.6 1404.7,824.8 1405.4,824.8C1406.2,824.6 1406.4,824.8 1407.3,820.8C1408.2,802.7 1409.2,734.0 1410.0,734.0C1410.8,734.9 1410.5,807.3 1411.1,825.5C1411.7,825.5 1412.3,825.5 1413.0,825.2C1413.8,824.9 1414.2,824.2 1414.9,824.1C1415.7,824.1 1416.1,824.2 1416.8,824.4C1417.6,824.6 1418.0,824.9 1418.7,825.0C1419.5,825.0 1419.9,825.0 1420.6,825.0C1421.4,822.6 1421.8,813.2 1422.5,813.2C1423.3,813.2 1423.7,822.7 1424.4,825.1C1425.2,825.1 1425.6,825.1 1426.3,824.9C1427.1,824.1 1427.5,824.2 1428.2,821.4C1429.0,818.5 1429.4,812.7 1430.1,810.5C1430.9,810.3 1431.1,810.5 1432.0,810.3C1433.0,806.9 1434.0,793.3 1434.8,793.3C1435.6,796.2 1435.3,818.5 1435.8,825.1C1436.4,826.0 1437.0,826.0 1437.7,826.0C1438.5,826.0 1438.9,824.8 1439.6,824.7C1440.4,824.7 1440.8,825.8 1441.5,825.8C1442.3,825.6 1442.7,825.8 1443.5,823.6C1444.2,821.1 1444.6,813.2 1445.4,813.2C1446.1,813.2 1446.5,821.1 1447.3,823.5C1448.0,825.0 1448.4,825.0 1449.2,825.0C1449.9,824.9 1450.3,823.9 1451.1,823.3C1451.8,822.7 1452.2,823.3 1453.0,822.1C1453.7,807.1 1453.8,748.3 1454.6,748.3C1455.4,749.1 1455.9,811.0 1456.8,826.3C1457.6,826.3 1457.9,826.1 1458.7,824.8C1459.4,823.5 1459.8,821.6 1460.6,819.8C1461.3,818.1 1461.7,817.8 1462.5,816.0C1463.2,814.2 1463.5,816.0 1464.4,810.6C1465.3,803.6 1466.2,780.9 1467.0,780.9C1467.8,783.2 1467.6,813.0 1468.2,821.9C1468.8,825.2 1469.2,825.2 1470.1,825.2C1470.9,816.1 1471.7,776.6 1472.5,776.3C1473.3,776.3 1473.2,813.4 1473.9,823.6C1474.5,827.4 1475.0,827.3 1475.8,827.4C1476.5,827.4 1476.9,824.6 1477.7,824.2C1478.4,824.2 1478.8,825.5 1479.6,825.5C1480.3,822.6 1480.7,809.8 1481.5,809.8C1482.2,809.8 1482.6,823.6 1483.4,825.6C1484.1,825.6 1484.5,819.9 1485.3,819.8C1486.0,819.8 1486.4,824.3 1487.2,825.2C1487.9,825.2 1488.3,825.2 1489.1,824.4C1489.8,820.5 1490.1,805.8 1490.9,805.7C1491.7,805.7 1492.1,821.1 1492.9,823.6C1493.7,823.6 1494.0,818.4 1494.8,818.4C1495.6,818.8 1495.9,825.3 1496.7,826.0C1497.5,826.0 1497.8,822.3 1498.6,821.9C1499.4,821.9 1499.7,824.2 1500.5,824.2C1501.3,824.2 1501.6,822.0 1502.4,822.0C1503.2,822.2 1503.5,824.8 1504.3,825.3C1505.1,825.3 1505.4,824.5 1506.2,824.3C1507.0,824.0 1507.3,824.3 1508.1,824.0C1508.9,821.6 1509.2,812.0 1510.0,812.0C1510.8,812.5 1511.1,823.8 1511.9,826.5C1512.7,826.5 1513.1,826.1 1513.8,825.7C1514.6,825.3 1515.0,825.3 1515.7,824.4C1516.5,823.4 1516.9,820.9 1517.6,820.9C1518.4,821.0 1518.8,824.0 1519.5,824.9C1520.3,825.4 1520.7,825.2 1521.4,825.4C1522.2,825.6 1522.6,826.0 1523.3,826.0C1524.1,826.0 1524.5,826.0 1525.2,825.3C1526.0,823.2 1526.4,816.1 1527.1,815.5C1527.9,815.5 1528.1,822.1 1529.0,822.1C1530.0,817.9 1531.0,794.7 1531.8,794.7C1532.6,795.3 1532.2,820.7 1532.8,824.8C1533.4,824.8 1534.0,815.4 1534.7,815.4C1535.5,815.4 1535.9,823.1 1536.6,824.8C1537.4,824.8 1537.8,824.8 1538.5,823.9C1539.3,821.6 1539.7,814.5 1540.4,813.6C1541.2,813.6 1541.6,817.0 1542.3,819.5C1543.1,822.0 1543.5,826.1 1544.2,826.2C1545.0,826.2 1545.4,820.2 1546.1,820.1C1546.9,820.1 1547.3,824.4 1548.0,825.4C1548.8,825.4 1549.2,825.4 1549.9,825.2C1550.7,823.4 1551.1,816.0 1551.8,816.0C1552.6,816.0 1553.0,823.5 1553.7,825.2C1554.5,825.2 1554.9,824.6 1555.6,824.6C1556.4,824.7 1556.8,825.3 1557.5,825.3C1558.3,822.2 1558.7,809.7 1559.5,809.3C1560.2,809.3 1560.6,820.0 1561.4,823.1C1562.1,824.5 1562.5,824.5 1563.3,824.5C1564.0,823.8 1564.4,819.5 1565.2,819.3C1565.9,819.3 1566.3,822.6 1567.1,823.5C1567.8,823.8 1568.2,823.5 1569.0,823.8C1569.7,824.3 1570.1,825.9 1570.9,825.9C1571.6,825.7 1572.0,822.7 1572.8,822.7C1573.5,822.7 1574.0,826.2 1574.7,826.2C1575.4,810.9 1575.5,748.1 1576.3,746.5C1577.1,746.5 1577.6,818.2 1578.5,818.2C1579.3,816.2 1579.7,736.8 1580.5,736.8C1581.3,738.1 1581.5,824.7 1582.3,824.7C1583.0,822.8 1583.3,727.9 1584.1,727.6C1584.9,727.6 1585.3,803.9 1586.1,823.4C1586.8,824.8 1587.3,824.8 1588.0,824.8C1588.7,818.1 1588.8,789.9 1589.6,789.6C1590.4,789.6 1591.0,816.4 1591.8,823.3C1592.6,824.2 1592.9,823.9 1593.7,824.2C1594.4,824.4 1594.8,824.6 1595.6,824.7C1596.3,824.7 1596.7,824.7 1597.5,824.7C1598.2,824.3 1598.6,823.0 1599.4,822.8C1600.1,822.8 1600.5,823.9 1601.3,823.9C1602.0,823.7 1602.4,821.8 1603.2,821.8C1603.9,822.0 1604.3,825.0 1605.1,825.0C1605.9,823.6 1606.2,816.8 1607.0,814.8C1607.8,814.8 1608.1,814.8 1608.9,814.9C1609.7,816.9 1610.0,823.2 1610.8,824.9C1611.6,824.9 1611.9,823.8 1612.7,823.6C1613.5,823.6 1613.8,823.6 1614.6,823.6C1615.4,823.9 1615.8,825.1 1616.5,825.1C1617.2,816.6 1617.3,781.1 1618.1,780.9C1618.9,780.9 1619.5,815.5 1620.3,824.0C1621.1,824.0 1621.4,823.6 1622.2,823.6C1623.0,823.8 1623.4,825.0 1624.1,825.0C1624.8,809.9 1624.7,751.3 1625.5,748.3C1626.3,748.3 1627.0,796.1 1627.9,810.0C1628.8,817.7 1629.1,814.8 1629.8,817.7C1630.6,820.5 1631.0,823.5 1631.7,824.4C1632.5,824.4 1632.9,822.2 1633.6,822.2C1634.4,822.8 1634.8,827.3 1635.5,827.3C1636.3,825.0 1636.7,811.1 1637.4,810.7C1638.2,810.7 1638.6,825.4 1639.3,825.4C1640.1,823.4 1640.5,800.9 1641.2,800.9C1642.0,800.9 1642.4,821.1 1643.1,825.4C1643.9,825.4 1644.3,822.3 1645.0,822.2C1645.8,822.2 1646.2,824.8 1646.9,824.8C1647.7,824.6 1648.3,824.8 1648.8,821.6C1649.4,814.6 1649.0,789.6 1649.8,789.6C1650.6,790.2 1651.7,818.7 1652.6,824.4C1653.6,824.4 1653.8,817.9 1654.5,817.9C1655.3,818.5 1655.7,825.7 1656.4,827.3C1657.2,827.3 1657.6,826.2 1658.3,825.8C1659.1,825.4 1659.5,825.8 1660.2,825.3C1661.0,824.7 1661.4,822.5 1662.1,822.4C1662.9,822.4 1663.3,824.2 1664.0,824.8C1664.8,825.1 1665.2,825.1 1665.9,825.1C1666.7,825.1 1667.1,824.7 1667.8,824.7C1668.6,824.7 1669.0,825.2 1669.7,825.2C1670.5,821.7 1670.9,806.9 1671.6,806.9C1672.4,807.0 1672.8,822.2 1673.5,825.8C1674.3,825.8 1674.7,825.0 1675.5,824.7C1676.2,824.7 1676.6,824.7 1677.4,824.7C1678.1,824.9 1678.5,825.8 1679.3,825.8C1680.0,823.9 1680.4,815.7 1681.2,815.1C1681.9,815.1 1682.3,820.8 1683.1,822.7C1683.8,824.7 1684.2,824.9 1685.0,824.9C1685.7,822.6 1686.1,812.0 1686.9,810.8C1687.6,810.8 1688.0,816.0 1688.8,819.0C1689.5,822.1 1689.9,824.7 1690.7,826.1C1691.4,826.1 1691.6,826.1 1692.6,825.8C1693.5,803.2 1694.5,714.2 1695.3,712.9C1696.1,712.9 1695.8,798.1 1696.4,819.3C1697.0,819.3 1697.5,819.0 1698.3,819.0C1699.0,820.0 1699.4,823.0 1700.2,824.2C1700.9,825.3 1701.3,825.3 1702.1,825.3C1702.8,825.3 1703.2,825.3 1704.0,824.3C1704.7,822.9 1705.1,818.3 1705.9,818.3C1706.6,818.8 1707.0,826.4 1707.8,826.6C1708.5,826.6 1708.9,819.6 1709.7,819.5C1710.4,819.5 1710.8,824.7 1711.6,826.0C1712.3,826.0 1712.7,826.0 1713.5,826.0C1714.2,825.4 1714.6,826.0 1715.4,823.2C1716.1,820.3 1716.5,811.7 1717.3,811.7C1718.0,812.0 1718.4,823.0 1719.2,824.5C1719.9,824.5 1720.3,818.9 1721.1,818.9C1721.9,819.0 1722.2,823.9 1723.0,825.3C1723.8,825.5 1724.1,825.5 1724.9,825.5C1725.7,823.2 1726.0,822.0 1726.8,813.6C1727.6,805.3 1727.9,783.7 1728.7,783.7C1729.5,784.3 1729.8,808.0 1730.6,816.3C1731.4,824.7 1731.7,825.5 1732.5,825.5C1733.3,824.0 1733.6,816.4 1734.4,809.0C1735.2,801.7 1735.8,788.7 1736.6,788.7C1737.4,790.6 1737.5,811.8 1738.2,818.7C1738.9,823.1 1739.3,821.8 1740.1,823.1C1740.9,824.4 1741.2,824.9 1742.0,825.2C1742.8,825.2 1743.1,825.2 1743.9,824.3C1744.7,822.4 1745.1,815.7 1745.8,815.6C1746.6,815.6 1747.0,823.4 1747.7,823.8C1748.5,823.8 1748.9,817.4 1749.6,817.4C1750.4,817.9 1750.9,826.2 1751.5,826.2C1752.1,818.6 1751.9,782.6 1752.7,779.5C1753.5,779.5 1754.4,801.2 1755.3,810.6C1756.2,819.9 1756.5,825.6 1757.2,826.0C1758.0,826.0 1758.4,814.0 1759.1,813.0C1759.9,813.0 1760.1,820.6 1761.0,820.6C1761.9,818.3 1762.9,801.5 1763.7,801.1C1764.5,801.1 1764.2,814.4 1764.8,818.8C1765.4,823.3 1766.0,822.0 1766.7,823.3C1767.5,824.5 1767.9,825.0 1768.6,825.0C1769.4,824.4 1769.8,820.3 1770.5,820.3C1771.3,820.3 1771.7,824.8 1772.4,825.0C1773.2,825.0 1773.6,823.1 1774.3,821.2C1775.1,819.3 1775.5,815.3 1776.2,815.3C1777.0,815.8 1777.4,821.6 1778.1,823.7C1778.9,825.8 1779.3,825.8 1780.0,825.9C1780.8,825.9 1781.2,824.8 1781.9,823.9C1782.7,822.9 1783.1,821.1 1783.8,821.1C1784.6,821.1 1785.0,824.1 1785.7,824.1C1786.5,822.2 1786.9,811.6 1787.6,811.6C1788.4,812.0 1788.8,823.7 1789.5,826.3C1790.3,826.3 1790.7,825.2 1791.5,824.7C1792.2,824.2 1792.6,823.8 1793.4,823.8C1794.1,823.9 1794.5,824.9 1795.3,825.0C1796.0,825.0 1796.4,825.0 1797.2,824.4C1797.9,820.0 1798.3,803.3 1799.1,803.0C1799.9,803.0 1800.2,818.6 1801.0,823.0C1801.7,824.7 1802.1,824.5 1802.9,824.7C1803.6,824.7 1804.0,824.3 1804.8,824.1C1805.5,823.9 1805.9,823.7 1806.7,823.6C1807.4,823.6 1807.8,823.8 1808.6,823.8C1809.3,820.7 1809.7,808.1 1810.5,808.1C1811.2,808.4 1811.6,822.2 1812.4,825.3C1813.1,825.3 1813.5,823.8 1814.3,823.3C1815.0,822.8 1815.4,822.7 1816.2,822.7C1816.9,822.9 1817.3,824.0 1818.1,824.7C1818.8,825.4 1819.2,826.2 1820.0,826.2C1820.7,826.0 1821.1,824.5 1821.9,823.4C1822.6,822.2 1823.0,820.7 1823.8,820.7C1824.5,820.7 1824.9,823.3 1825.7,823.3C1826.4,821.8 1826.8,812.9 1827.6,812.9C1828.3,813.4 1828.7,823.2 1829.5,825.5C1830.2,825.5 1830.6,824.2 1831.4,824.2C1832.1,824.2 1832.5,825.3 1833.3,825.3C1834.0,824.3 1834.4,819.8 1835.2,819.4C1835.9,819.4 1836.4,823.5 1837.1,823.5C1837.8,817.6 1837.8,789.6 1838.6,789.6C1839.4,789.9 1840.1,817.6 1840.9,824.9C1841.7,826.6 1842.0,826.4 1842.8,826.6C1843.6,826.6 1843.9,826.0 1844.7,825.6C1845.5,825.1 1845.8,824.4 1846.6,824.4C1847.4,824.5 1847.7,825.7 1848.5,826.0C1849.3,826.0 1849.6,826.0 1850.4,825.7C1851.2,824.9 1851.5,825.1 1852.3,821.6C1853.1,818.2 1853.4,818.6 1854.2,808.6C1855.0,798.6 1855.7,771.7 1856.5,771.7C1857.3,774.6 1857.3,812.7 1858.0,823.1C1858.7,823.3 1859.1,823.1 1859.9,823.3C1860.7,823.8 1861.1,825.2 1861.8,825.6C1862.6,825.6 1863.0,825.6 1863.7,825.1C1864.5,824.4 1864.9,823.4 1865.6,821.9C1866.4,820.5 1866.8,821.9 1867.5,817.9C1868.3,807.9 1868.6,772.2 1869.4,772.2C1870.2,773.7 1870.6,814.9 1871.3,825.2C1872.1,825.2 1872.5,825.2 1873.2,824.0C1874.0,821.9 1874.4,814.5 1875.1,814.5C1875.9,814.6 1876.3,822.5 1877.0,824.7C1877.8,825.3 1878.2,825.3 1878.9,825.3C1879.7,824.6 1880.1,821.1 1880.8,821.1C1881.6,821.1 1882.0,825.2 1882.7,825.2C1883.5,823.1 1883.9,810.8 1884.6,810.4C1885.4,810.4 1885.8,823.2 1886.5,823.7C1887.3,823.7 1887.5,816.1 1888.4,812.8C1889.3,809.6 1890.2,807.6 1891.0,807.6C1891.8,810.0 1891.6,821.7 1892.2,824.9C1892.9,824.9 1893.4,824.2 1894.1,823.4C1894.9,822.6 1895.3,823.4 1896.0,821.0C1896.8,818.3 1897.2,809.9 1897.9,809.9C1898.7,810.4 1899.1,820.3 1899.8,823.4C1900.6,825.4 1901.0,825.0 1901.7,825.4C1902.5,825.4 1902.9,825.4 1903.6,825.3C1904.4,824.7 1904.8,825.3 1905.5,822.3C1906.3,818.8 1906.7,808.2 1907.5,808.2C1908.2,808.5 1908.6,820.3 1909.4,823.7C1910.1,825.6 1910.5,825.6 1911.3,825.6C1912.0,823.2 1912.4,812.1 1913.2,811.6C1913.9,811.6 1914.3,820.2 1915.1,822.8C1915.8,824.6 1916.2,824.6 1917.0,824.6C1917.7,822.7 1918.1,813.6 1918.9,813.3C1919.6,813.3 1920.0,821.1 1920.8,823.5C1921.5,825.5 1921.9,825.1 1922.7,825.5C1923.4,825.5 1923.8,825.5 1924.6,825.3C1925.3,824.7 1925.7,825.3 1926.5,822.4C1927.3,813.6 1927.8,782.8 1928.6,780.9C1929.4,780.9 1929.6,803.9 1930.3,812.9C1931.0,821.9 1931.4,823.7 1932.2,825.9C1932.9,825.9 1933.3,825.9 1934.1,823.8C1934.8,820.3 1935.2,808.6 1936.0,808.6C1936.7,809.0 1937.1,825.0 1937.9,825.7C1938.6,825.7 1939.0,812.5 1939.8,812.1C1940.5,812.1 1940.9,821.0 1941.7,823.7C1942.4,825.7 1942.8,825.7 1943.6,825.7C1944.3,823.5 1944.7,812.7 1945.5,812.7C1946.2,812.7 1946.6,823.0 1947.4,825.4C1948.1,825.4 1948.5,824.6 1949.3,824.6C1950.0,824.6 1950.4,825.6 1951.2,825.6C1951.9,825.6 1952.3,824.7 1953.1,824.6C1953.9,824.6 1954.2,825.0 1955.0,825.0C1955.8,824.8 1956.1,825.0 1956.9,823.3C1957.7,821.2 1958.0,814.9 1958.8,814.9C1959.6,815.1 1959.9,822.2 1960.7,824.1C1961.5,824.6 1961.8,824.6 1962.6,824.6C1963.4,824.6 1964.1,824.1 1964.5,824.0" fill="none" stroke="#ecc73c" stroke-width="1.6" stroke-linejoin="round"/>
<path d="M806.4,830.5C806.8,830.6 807.5,831.3 808.3,831.3C809.1,831.3 809.4,830.1 810.2,830.1C811.0,830.2 811.3,831.3 812.1,831.7C812.9,832.2 813.2,832.3 814.0,832.3C814.8,832.2 815.1,831.4 815.9,831.2C816.7,831.2 817.0,831.5 817.8,831.5C818.6,831.4 819.0,830.6 819.7,830.6C820.5,830.8 820.9,832.0 821.6,832.2C822.4,832.2 822.8,832.2 823.5,831.9C824.3,831.4 824.7,830.2 825.4,830.1C826.2,830.1 826.6,831.1 827.3,831.1C828.1,831.0 828.5,829.6 829.2,829.6C830.0,829.8 830.4,831.6 831.1,831.9C831.9,831.9 832.3,831.2 833.0,831.2C833.8,831.2 834.2,832.2 834.9,832.2C835.7,832.1 836.1,831.1 836.8,830.8C837.6,830.5 838.0,830.5 838.7,830.5C839.5,830.8 839.9,832.4 840.6,832.6C841.4,832.6 841.8,831.6 842.5,831.3C843.3,831.3 843.7,831.3 844.4,831.4C845.2,831.6 845.6,832.4 846.3,832.5C847.1,832.5 847.5,832.3 848.2,831.8C849.0,831.4 849.4,830.5 850.1,830.3C850.9,830.3 851.3,830.5 852.0,830.8C852.8,831.1 853.2,831.9 853.9,831.9C854.7,831.8 855.1,830.5 855.8,830.4C856.6,830.4 857.0,831.0 857.7,831.4C858.5,831.7 858.9,832.1 859.6,832.1C860.4,832.1 860.8,831.3 861.5,831.3C862.3,831.3 862.7,831.7 863.4,831.9C864.2,832.1 864.6,832.3 865.4,832.3C866.1,832.2 866.5,831.8 867.3,831.6C868.0,831.3 868.4,831.3 869.2,831.2C869.9,831.0 870.3,831.0 871.1,830.9C871.8,830.7 872.2,830.2 873.0,830.2C873.7,830.4 874.1,831.6 874.9,831.8C875.6,831.8 876.0,831.8 876.8,831.5C877.5,831.3 877.9,830.9 878.7,830.7C879.4,830.7 879.8,830.7 880.6,830.9C881.3,831.1 881.7,831.7 882.5,831.8C883.2,831.8 883.6,831.1 884.4,831.0C885.1,831.0 885.5,831.2 886.3,831.2C887.0,831.2 887.4,831.2 888.2,831.2C888.9,831.3 889.3,831.4 890.1,831.4C890.8,831.4 891.2,831.4 892.0,831.4C892.7,831.3 893.1,830.9 893.9,830.6C894.6,830.3 895.0,830.1 895.8,830.1C896.5,830.4 896.9,831.5 897.7,831.8C898.4,831.8 898.8,831.6 899.6,831.4C900.3,831.2 900.7,830.7 901.5,830.7C902.2,830.7 902.6,831.1 903.4,831.2C904.1,831.3 904.5,831.3 905.3,831.3C906.0,831.2 906.4,831.3 907.2,830.9C907.9,830.6 908.3,829.5 909.1,829.5C909.8,829.7 910.2,831.5 911.0,832.1C911.8,832.6 912.1,832.5 912.9,832.6C913.7,832.6 914.0,832.6 914.8,832.6C915.6,832.2 915.9,831.1 916.7,830.9C917.5,830.9 917.8,831.5 918.6,831.6C919.4,831.6 919.7,831.3 920.5,831.3C921.3,831.3 921.6,831.5 922.4,831.7C923.2,831.8 923.5,832.2 924.3,832.2C925.1,832.0 925.4,830.6 926.2,830.4C927.0,830.4 927.3,831.2 928.1,831.5C928.9,831.8 929.2,831.8 930.0,832.0C930.8,832.1 931.1,832.3 931.9,832.3C932.7,832.1 933.0,831.4 933.8,831.0C934.6,830.7 935.0,830.4 935.7,830.4C936.5,830.4 936.9,831.3 937.6,831.4C938.4,831.4 938.8,831.4 939.5,831.2C940.3,831.1 940.7,830.7 941.4,830.7C942.2,830.8 942.6,831.5 943.3,831.6C944.1,831.6 944.5,831.2 945.2,831.2C946.0,831.3 946.4,832.0 947.1,832.1C947.9,832.1 948.3,831.6 949.0,831.5C949.8,831.3 950.2,831.2 950.9,831.2C951.7,831.2 952.1,831.5 952.8,831.5C953.6,831.4 954.0,830.9 954.7,830.9C955.5,830.9 955.9,831.4 956.6,831.5C957.4,831.5 957.8,831.5 958.5,831.4C959.3,831.2 959.7,830.7 960.4,830.7C961.2,830.8 961.6,831.9 962.3,832.0C963.1,832.0 963.5,831.3 964.2,831.2C965.0,831.2 965.4,831.3 966.1,831.3C966.9,831.2 967.3,831.0 968.0,831.0C968.8,831.1 969.2,831.7 969.9,831.7C970.7,831.7 971.1,831.0 971.8,830.9C972.6,830.9 973.0,831.3 973.7,831.6C974.5,831.8 974.9,832.4 975.6,832.4C976.4,832.1 976.8,830.3 977.5,830.3C978.3,830.4 978.7,832.5 979.4,832.9C980.2,832.9 980.6,832.5 981.4,832.2C982.1,831.9 982.5,831.5 983.3,831.4C984.0,831.4 984.4,831.7 985.2,831.7C985.9,831.7 986.3,831.4 987.1,831.4C987.8,831.4 988.2,831.4 989.0,831.5C989.7,831.6 990.1,831.9 990.9,831.9C991.6,831.7 992.0,830.8 992.8,830.8C993.5,831.0 993.9,832.5 994.7,832.5C995.4,832.4 995.8,830.8 996.6,830.3C997.3,830.0 997.7,830.0 998.5,830.0C999.2,830.2 999.6,831.2 1000.4,831.5C1001.1,831.5 1001.5,831.5 1002.3,831.4C1003.0,831.3 1003.4,831.1 1004.2,831.1C1004.9,831.1 1005.3,831.5 1006.1,831.5C1006.8,831.5 1007.2,830.9 1008.0,830.8C1008.7,830.8 1009.1,831.3 1009.9,831.4C1010.6,831.5 1011.0,831.4 1011.8,831.5C1012.5,831.5 1012.9,831.5 1013.7,831.6C1014.4,831.7 1014.8,831.8 1015.6,831.8C1016.3,831.5 1016.7,830.1 1017.5,830.0C1018.2,830.0 1018.6,831.1 1019.4,831.4C1020.1,831.7 1020.5,831.7 1021.3,831.7C1022.0,831.3 1022.4,829.6 1023.2,829.4C1023.9,829.4 1024.3,830.5 1025.1,831.0C1025.8,831.5 1026.2,831.6 1027.0,832.0C1027.8,832.3 1028.1,832.6 1028.9,832.6C1029.7,832.6 1030.0,832.1 1030.8,831.7C1031.6,831.4 1031.9,830.8 1032.7,830.7C1033.5,830.7 1033.8,831.4 1034.6,831.4C1035.4,831.4 1035.7,830.5 1036.5,830.5C1037.3,830.6 1037.6,832.0 1038.4,832.1C1039.2,832.1 1039.5,831.3 1040.3,831.0C1041.1,830.7 1041.4,830.6 1042.2,830.6C1043.0,830.8 1043.3,831.7 1044.1,832.0C1044.9,832.0 1045.2,832.0 1046.0,831.9C1046.8,831.7 1047.1,830.7 1047.9,830.7C1048.7,830.8 1049.0,832.3 1049.8,832.4C1050.6,832.4 1051.0,831.9 1051.7,831.6C1052.5,831.3 1052.9,831.0 1053.6,831.0C1054.4,831.0 1054.8,831.6 1055.5,831.7C1056.3,831.7 1056.7,831.4 1057.4,831.3C1058.2,831.3 1058.6,831.3 1059.3,831.3C1060.1,831.4 1060.5,831.6 1061.2,831.7C1062.0,831.7 1062.4,831.5 1063.1,831.4C1063.9,831.3 1064.3,831.3 1065.0,831.3C1065.8,831.3 1066.2,831.3 1066.9,831.2C1067.7,830.8 1068.1,829.2 1068.8,829.2C1069.6,829.3 1070.0,831.0 1070.7,831.5C1071.5,831.5 1071.9,831.5 1072.6,831.4C1073.4,831.2 1073.8,830.7 1074.5,830.6C1075.3,830.6 1075.7,831.1 1076.4,831.2C1077.2,831.2 1077.6,830.9 1078.3,830.9C1079.1,830.9 1079.5,831.0 1080.2,831.2C1081.0,831.4 1081.4,831.8 1082.1,831.9C1082.9,831.9 1083.3,831.9 1084.0,831.8C1084.8,831.6 1085.2,830.9 1085.9,830.8C1086.7,830.8 1087.1,831.3 1087.8,831.3C1088.6,831.2 1089.0,830.4 1089.7,830.4C1090.5,830.5 1090.9,831.6 1091.6,831.8C1092.4,831.8 1092.8,831.6 1093.5,831.5C1094.3,831.5 1094.7,831.4 1095.4,831.4C1096.2,831.6 1096.6,832.6 1097.4,832.9C1098.1,832.9 1098.5,832.9 1099.3,832.6C1100.0,832.4 1100.4,831.8 1101.2,831.6C1101.9,831.3 1102.3,831.5 1103.1,831.3C1103.8,831.1 1104.2,830.7 1105.0,830.5C1105.7,830.5 1106.1,830.5 1106.9,830.7C1107.6,830.9 1108.0,831.7 1108.8,831.8C1109.5,831.8 1109.9,831.5 1110.7,831.4C1111.4,831.3 1111.8,831.3 1112.6,831.3C1113.3,831.7 1113.7,833.3 1114.5,833.3C1115.2,833.2 1115.6,831.1 1116.4,831.1C1117.1,831.1 1117.5,833.1 1118.3,833.3C1119.0,833.3 1119.4,832.4 1120.2,831.9C1120.9,831.5 1121.3,831.1 1122.1,831.1C1122.8,831.1 1123.2,831.7 1124.0,831.8C1124.7,831.8 1125.1,831.5 1125.9,831.4C1126.6,831.4 1127.0,831.6 1127.8,831.6C1128.5,831.4 1128.9,830.6 1129.7,830.3C1130.4,830.3 1130.8,830.5 1131.6,830.5C1132.3,830.5 1132.7,830.2 1133.5,830.2C1134.2,830.5 1134.6,831.5 1135.4,831.7C1136.1,831.7 1136.5,831.4 1137.3,831.4C1138.0,831.7 1138.4,833.0 1139.2,833.1C1139.9,833.1 1140.3,832.6 1141.1,832.1C1141.8,831.5 1142.2,830.7 1143.0,830.4C1143.8,830.4 1144.1,830.4 1144.9,830.5C1145.7,830.7 1146.0,831.6 1146.8,831.7C1147.6,831.7 1147.9,831.3 1148.7,831.1C1149.5,830.9 1149.8,830.7 1150.6,830.7C1151.4,830.7 1151.7,830.8 1152.5,831.2C1153.3,831.6 1153.6,832.4 1154.4,832.6C1155.2,832.6 1155.5,832.6 1156.3,832.3C1157.1,831.9 1157.4,831.2 1158.2,830.8C1159.0,830.8 1159.3,830.8 1160.1,830.8C1160.9,831.0 1161.2,831.8 1162.0,831.8C1162.8,831.8 1163.1,831.2 1163.9,831.1C1164.7,831.1 1165.0,831.3 1165.8,831.5C1166.6,831.7 1167.0,832.0 1167.7,832.0C1168.5,831.9 1168.9,830.9 1169.6,830.7C1170.4,830.7 1170.8,831.1 1171.5,831.1C1172.3,831.1 1172.7,830.9 1173.4,830.9C1174.2,830.9 1174.6,831.1 1175.3,831.1C1176.1,831.1 1176.5,830.7 1177.2,830.6C1178.0,830.6 1178.4,830.6 1179.1,830.6C1179.9,831.0 1180.3,832.3 1181.0,832.6C1181.8,832.6 1182.2,832.2 1182.9,832.0C1183.7,831.8 1184.1,831.9 1184.8,831.6C1185.6,831.2 1186.0,830.4 1186.7,830.4C1187.5,830.5 1187.9,831.8 1188.6,832.1C1189.4,832.1 1189.8,831.7 1190.5,831.5C1191.3,831.3 1191.7,831.0 1192.4,831.0C1193.2,831.2 1193.6,832.6 1194.3,832.6C1195.1,832.6 1195.5,831.5 1196.2,831.1C1197.0,830.6 1197.4,830.3 1198.1,830.3C1198.9,830.3 1199.3,831.2 1200.0,831.4C1200.8,831.4 1201.2,831.2 1201.9,831.2C1202.7,831.3 1203.1,831.8 1203.8,831.9C1204.6,832.0 1205.0,832.0 1205.7,832.0C1206.5,831.9 1206.9,831.5 1207.6,831.1C1208.4,830.8 1208.8,830.5 1209.5,830.5C1210.3,830.5 1210.7,831.0 1211.4,831.1C1212.2,831.1 1212.6,831.1 1213.4,831.1C1214.1,831.1 1214.5,831.2 1215.3,831.3C1216.0,831.4 1216.4,831.5 1217.2,831.5C1217.9,831.3 1218.3,830.2 1219.1,829.9C1219.8,829.7 1220.2,829.7 1221.0,829.7C1221.7,830.4 1222.1,832.8 1222.9,833.2C1223.6,833.2 1224.0,832.1 1224.8,831.6C1225.5,831.2 1225.9,831.0 1226.7,831.0C1227.4,831.0 1227.8,831.6 1228.6,831.7C1229.3,831.7 1229.7,831.7 1230.5,831.5C1231.2,831.0 1231.6,829.2 1232.4,829.2C1233.1,829.4 1233.5,831.8 1234.3,832.2C1235.0,832.2 1235.4,831.3 1236.2,831.1C1236.9,831.1 1237.3,831.3 1238.1,831.3C1238.8,831.3 1239.2,830.8 1240.0,830.8C1240.7,830.8 1241.1,830.9 1241.9,830.9C1242.6,831.0 1243.0,830.9 1243.8,831.1C1244.5,831.4 1244.9,831.9 1245.7,832.2C1246.4,832.3 1246.8,832.3 1247.6,832.3C1248.3,832.1 1248.7,831.6 1249.5,831.5C1250.2,831.5 1250.6,831.8 1251.4,831.8C1252.1,831.7 1252.5,831.3 1253.3,831.1C1254.0,830.8 1254.4,830.6 1255.2,830.6C1255.9,830.6 1256.3,830.9 1257.1,831.2C1257.8,831.6 1258.2,832.3 1259.0,832.4C1259.8,832.4 1260.1,831.5 1260.9,831.5C1261.7,831.6 1262.0,832.6 1262.8,832.6C1263.6,832.6 1263.9,831.9 1264.7,831.8C1265.5,831.8 1265.8,832.2 1266.6,832.2C1267.4,831.6 1267.7,829.2 1268.5,829.0C1269.3,829.0 1269.6,831.3 1270.4,831.4C1271.2,831.4 1271.5,829.7 1272.3,829.6C1273.1,829.6 1273.4,830.4 1274.2,830.8C1275.0,831.1 1275.3,831.2 1276.1,831.3C1276.9,831.3 1277.2,831.2 1278.0,831.2C1278.8,831.1 1279.1,830.9 1279.9,830.9C1280.7,831.0 1281.0,831.7 1281.8,831.7C1282.6,831.5 1283.0,829.9 1283.7,829.8C1284.5,829.8 1284.9,831.2 1285.6,831.5C1286.4,831.5 1286.8,831.1 1287.5,831.1C1288.3,831.2 1288.7,832.0 1289.4,832.0C1290.2,831.9 1290.6,830.8 1291.3,830.6C1292.1,830.6 1292.5,831.0 1293.2,831.1C1294.0,831.3 1294.4,831.6 1295.1,831.6C1295.9,831.5 1296.3,831.0 1297.0,830.8C1297.8,830.6 1298.2,830.4 1298.9,830.4C1299.7,830.5 1300.1,830.8 1300.8,831.0C1301.6,831.1 1302.0,831.0 1302.7,831.3C1303.5,831.6 1303.9,832.5 1304.6,832.5C1305.4,832.3 1305.8,831.0 1306.5,830.4C1307.3,829.9 1307.7,829.7 1308.4,829.7C1309.2,830.0 1309.6,831.7 1310.3,832.0C1311.1,832.0 1311.5,831.2 1312.2,831.1C1313.0,831.1 1313.4,831.1 1314.1,831.2C1314.9,831.4 1315.3,831.8 1316.0,831.8C1316.8,831.7 1317.2,831.0 1317.9,831.0C1318.7,831.0 1319.1,831.6 1319.8,831.6C1320.6,831.6 1321.0,831.0 1321.7,830.8C1322.5,830.7 1322.9,830.7 1323.6,830.7C1324.4,830.9 1324.8,831.4 1325.5,831.6C1326.3,831.9 1326.7,832.0 1327.4,832.0C1328.2,831.9 1328.6,831.6 1329.4,831.3C1330.1,831.0 1330.5,830.3 1331.3,830.3C1332.0,830.5 1332.4,831.7 1333.2,831.9C1333.9,831.9 1334.3,831.3 1335.1,831.2C1335.8,831.2 1336.2,831.3 1337.0,831.3C1337.7,831.3 1338.1,831.0 1338.9,831.0C1339.6,831.3 1340.0,832.5 1340.8,832.7C1341.5,832.7 1341.9,832.0 1342.7,831.8C1343.4,831.7 1343.8,831.8 1344.6,831.7C1345.3,831.6 1345.7,831.2 1346.5,831.2C1347.2,831.2 1347.6,831.5 1348.4,831.5C1349.1,831.5 1349.5,831.0 1350.3,831.0C1351.0,831.0 1351.4,831.5 1352.2,831.6C1352.9,831.8 1353.3,831.7 1354.1,831.8C1354.8,831.8 1355.2,831.9 1356.0,831.9C1356.7,831.7 1357.1,831.1 1357.9,830.8C1358.6,830.7 1359.0,830.7 1359.8,830.7C1360.5,830.9 1360.9,831.6 1361.7,831.8C1362.4,831.8 1362.8,831.7 1363.6,831.7C1364.3,831.7 1364.7,831.8 1365.5,831.8C1366.2,831.8 1366.6,831.5 1367.4,831.5C1368.1,831.5 1368.5,831.5 1369.3,831.5C1370.0,831.4 1370.4,831.3 1371.2,831.2C1371.9,831.2 1372.3,831.2 1373.1,831.1C1373.8,831.1 1374.2,831.0 1375.0,831.0C1375.8,831.0 1376.1,831.0 1376.9,831.0C1377.7,831.0 1378.0,831.0 1378.8,831.1C1379.6,831.2 1379.9,831.5 1380.7,831.6C1381.5,831.7 1381.8,831.8 1382.6,831.8C1383.4,831.8 1383.7,831.4 1384.5,831.4C1385.3,831.5 1385.6,832.2 1386.4,832.2C1387.2,832.2 1387.5,831.3 1388.3,831.1C1389.1,831.1 1389.4,831.2 1390.2,831.4C1391.0,831.6 1391.3,832.1 1392.1,832.1C1392.9,831.8 1393.2,830.4 1394.0,830.3C1394.8,830.3 1395.1,830.8 1395.9,831.2C1396.7,831.6 1397.1,832.3 1397.8,832.4C1398.6,832.4 1399.0,831.9 1399.7,831.7C1400.5,831.7 1400.9,831.7 1401.6,831.7C1402.4,831.4 1402.8,830.4 1403.5,830.3C1404.3,830.3 1404.7,831.2 1405.4,831.2C1406.2,831.2 1406.6,830.4 1407.3,830.4C1408.1,830.4 1408.5,831.1 1409.2,831.2C1410.0,831.2 1410.4,831.1 1411.1,831.0C1411.9,830.9 1412.3,830.6 1413.0,830.6C1413.8,830.8 1414.2,831.7 1414.9,831.9C1415.7,831.9 1416.1,831.6 1416.8,831.5C1417.6,831.5 1418.0,831.6 1418.7,831.6C1419.5,831.5 1419.9,830.9 1420.6,830.6C1421.4,830.2 1421.8,829.9 1422.5,829.9C1423.3,830.1 1423.7,831.5 1424.4,831.6C1425.2,831.6 1425.6,830.4 1426.3,830.4C1427.1,830.4 1427.5,831.5 1428.2,831.5C1429.0,831.5 1429.4,830.5 1430.1,830.4C1430.9,830.4 1431.3,830.5 1432.0,830.7C1432.8,831.0 1433.2,831.6 1433.9,831.6C1434.7,831.6 1435.1,830.7 1435.8,830.7C1436.6,830.8 1437.0,831.6 1437.7,831.8C1438.5,831.8 1438.9,831.6 1439.6,831.6C1440.4,831.6 1440.8,831.6 1441.5,831.6C1442.3,831.6 1442.7,831.6 1443.5,831.6C1444.2,831.7 1444.6,831.8 1445.4,831.8C1446.1,831.7 1446.5,831.7 1447.3,831.2C1448.0,830.8 1448.4,829.4 1449.2,829.4C1449.9,829.5 1450.3,831.8 1451.1,832.0C1451.8,832.0 1452.2,830.2 1453.0,830.1C1453.7,830.1 1454.1,831.5 1454.9,831.6C1455.6,831.6 1456.0,831.1 1456.8,830.8C1457.5,830.5 1457.9,830.1 1458.7,830.1C1459.4,830.3 1459.8,831.4 1460.6,831.7C1461.3,831.7 1461.7,831.7 1462.5,831.6C1463.2,831.5 1463.6,831.6 1464.4,831.3C1465.1,831.1 1465.5,830.4 1466.3,830.4C1467.0,830.6 1467.4,831.8 1468.2,832.2C1468.9,832.3 1469.3,832.3 1470.1,832.3C1470.8,832.1 1471.2,831.1 1472.0,831.1C1472.7,831.1 1473.1,831.8 1473.9,832.1C1474.6,832.4 1475.0,832.6 1475.8,832.6C1476.5,832.6 1476.9,832.6 1477.7,832.2C1478.4,831.8 1478.8,830.7 1479.6,830.6C1480.3,830.6 1480.7,831.5 1481.5,831.9C1482.2,832.3 1482.6,832.5 1483.4,832.5C1484.1,832.4 1484.5,832.0 1485.3,831.6C1486.0,831.2 1486.4,830.7 1487.2,830.5C1487.9,830.5 1488.3,830.5 1489.1,830.6C1489.9,831.0 1490.2,832.1 1491.0,832.2C1491.8,832.2 1492.1,831.5 1492.9,831.3C1493.7,831.3 1494.0,831.4 1494.8,831.4C1495.6,831.2 1495.9,830.2 1496.7,830.2C1497.5,830.2 1497.8,831.2 1498.6,831.3C1499.4,831.3 1499.7,830.9 1500.5,830.9C1501.3,830.9 1501.6,831.0 1502.4,831.2C1503.2,831.4 1503.5,831.6 1504.3,831.9C1505.1,832.1 1505.4,832.4 1506.2,832.4C1507.0,831.8 1507.3,828.8 1508.1,828.7C1508.9,828.7 1509.2,831.6 1510.0,832.2C1510.8,832.2 1511.1,832.2 1511.9,832.1C1512.7,831.8 1513.1,830.6 1513.8,830.6C1514.6,830.8 1515.0,832.8 1515.7,833.0C1516.5,833.0 1516.9,831.8 1517.6,831.2C1518.4,830.7 1518.8,830.2 1519.5,830.2C1520.3,830.3 1520.7,831.5 1521.4,831.8C1522.2,832.0 1522.6,832.0 1523.3,832.0C1524.1,832.0 1524.5,832.0 1525.2,832.0C1526.0,831.9 1526.4,831.8 1527.1,831.1C1527.9,830.5 1528.3,828.9 1529.0,828.7C1529.8,828.7 1530.2,829.7 1530.9,830.3C1531.7,830.9 1532.1,831.7 1532.8,831.8C1533.6,831.8 1534.0,831.3 1534.7,830.9C1535.5,830.6 1535.9,829.9 1536.6,829.9C1537.4,830.2 1537.8,832.0 1538.5,832.2C1539.3,832.2 1539.7,831.1 1540.4,830.8C1541.2,830.8 1541.6,830.8 1542.3,830.9C1543.1,831.3 1543.5,832.7 1544.2,832.7C1545.0,832.7 1545.4,831.3 1546.1,830.9C1546.9,830.9 1547.3,830.9 1548.0,831.0C1548.8,831.2 1549.2,831.4 1549.9,831.7C1550.7,832.0 1551.1,832.4 1551.8,832.4C1552.6,832.4 1553.0,831.6 1553.7,831.5C1554.5,831.5 1554.9,832.1 1555.6,832.1C1556.4,832.1 1556.8,831.5 1557.5,831.4C1558.3,831.4 1558.7,831.6 1559.5,831.6C1560.2,831.5 1560.6,831.0 1561.4,830.9C1562.1,830.9 1562.5,830.9 1563.3,831.2C1564.0,831.7 1564.4,833.1 1565.2,833.1C1565.9,833.1 1566.3,831.5 1567.1,831.2C1567.8,831.2 1568.2,831.4 1569.0,831.6C1569.7,831.7 1570.1,831.9 1570.9,832.0C1571.6,832.1 1572.0,832.3 1572.8,832.3C1573.5,831.9 1573.9,830.6 1574.7,830.4C1575.4,830.4 1575.8,830.8 1576.6,831.0C1577.3,831.3 1577.7,831.4 1578.5,831.8C1579.2,832.1 1579.6,832.6 1580.4,832.6C1581.1,832.6 1581.5,831.9 1582.3,831.6C1583.0,831.4 1583.4,831.2 1584.2,831.1C1584.9,831.1 1585.3,831.4 1586.1,831.5C1586.8,831.5 1587.2,831.5 1588.0,831.5C1588.7,831.2 1589.1,829.9 1589.9,829.9C1590.6,830.1 1591.0,832.1 1591.8,832.3C1592.5,832.3 1592.9,831.3 1593.7,831.2C1594.4,831.2 1594.8,831.7 1595.6,831.7C1596.3,831.6 1596.7,830.9 1597.5,830.8C1598.2,830.8 1598.6,830.8 1599.4,830.9C1600.1,831.1 1600.5,831.7 1601.3,831.8C1602.0,831.8 1602.4,831.5 1603.2,831.4C1603.9,831.3 1604.3,831.4 1605.1,831.2C1605.9,831.0 1606.2,830.2 1607.0,830.2C1607.8,830.2 1608.1,830.9 1608.9,831.1C1609.7,831.3 1610.0,831.2 1610.8,831.3C1611.6,831.4 1611.9,831.5 1612.7,831.6C1613.5,831.6 1613.8,831.4 1614.6,831.4C1615.4,831.3 1615.7,831.4 1616.5,831.3C1617.3,831.0 1617.6,830.2 1618.4,830.0C1619.2,830.0 1619.5,830.3 1620.3,830.5C1621.1,830.8 1621.4,831.1 1622.2,831.4C1623.0,831.7 1623.3,831.9 1624.1,832.1C1624.9,832.3 1625.2,832.4 1626.0,832.4C1626.8,832.2 1627.1,831.1 1627.9,831.0C1628.7,831.0 1629.1,831.9 1629.8,831.9C1630.6,831.8 1631.0,830.7 1631.7,830.5C1632.5,830.5 1632.9,830.7 1633.6,830.8C1634.4,831.0 1634.8,831.2 1635.5,831.3C1636.3,831.5 1636.7,831.6 1637.4,831.6C1638.2,831.5 1638.6,830.8 1639.3,830.7C1640.1,830.7 1640.5,830.7 1641.2,830.9C1642.0,831.0 1642.4,831.6 1643.1,831.6C1643.9,831.4 1644.3,830.3 1645.0,830.0C1645.8,830.0 1646.2,830.0 1646.9,830.0C1647.7,830.1 1648.1,830.6 1648.8,830.9C1649.6,831.1 1650.0,831.2 1650.7,831.4C1651.5,831.6 1651.9,831.8 1652.6,831.8C1653.4,831.7 1653.8,831.2 1654.5,831.1C1655.3,831.1 1655.7,831.1 1656.4,831.2C1657.2,831.4 1657.6,831.5 1658.3,831.7C1659.1,832.0 1659.5,832.3 1660.2,832.3C1661.0,832.0 1661.4,830.6 1662.1,830.4C1662.9,830.4 1663.3,831.6 1664.0,831.6C1664.8,831.5 1665.2,830.2 1665.9,830.2C1666.7,830.3 1667.1,831.4 1667.8,831.7C1668.6,831.7 1669.0,831.5 1669.7,831.5C1670.5,831.5 1670.9,831.5 1671.6,831.5C1672.4,831.2 1672.8,830.2 1673.5,830.2C1674.3,830.2 1674.7,831.2 1675.5,831.4C1676.2,831.4 1676.6,831.0 1677.4,831.0C1678.1,831.0 1678.5,831.2 1679.3,831.2C1680.0,831.2 1680.4,831.0 1681.2,831.0C1681.9,831.1 1682.3,831.7 1683.1,831.8C1683.8,831.9 1684.2,831.9 1685.0,831.9C1685.7,832.0 1686.1,832.0 1686.9,832.0C1687.6,831.8 1688.0,831.2 1688.8,831.1C1689.5,831.1 1689.9,831.3 1690.7,831.5C1691.4,831.7 1691.8,832.1 1692.6,832.1C1693.3,832.0 1693.7,831.7 1694.5,830.9C1695.2,830.2 1695.6,828.5 1696.4,828.5C1697.1,828.7 1697.5,831.2 1698.3,831.9C1699.0,832.1 1699.4,832.1 1700.2,832.1C1700.9,831.8 1701.3,830.3 1702.1,830.3C1702.8,830.3 1703.2,831.4 1704.0,831.9C1704.7,832.3 1705.1,832.3 1705.9,832.3C1706.6,832.3 1707.0,832.3 1707.8,832.3C1708.5,832.2 1708.9,831.8 1709.7,831.6C1710.4,831.5 1710.8,831.6 1711.6,831.5C1712.3,831.2 1712.7,830.0 1713.5,830.0C1714.2,830.0 1714.6,831.0 1715.4,831.5C1716.1,832.0 1716.5,832.4 1717.3,832.4C1718.0,832.4 1718.4,831.8 1719.2,831.6C1719.9,831.3 1720.3,831.2 1721.1,831.1C1721.9,830.9 1722.2,830.8 1723.0,830.8C1723.8,830.8 1724.1,830.9 1724.9,831.0C1725.7,831.1 1726.0,831.0 1726.8,831.3C1727.6,831.7 1727.9,832.9 1728.7,832.9C1729.5,832.9 1729.8,831.5 1730.6,831.2C1731.4,831.2 1731.7,831.6 1732.5,831.6C1733.3,831.5 1733.6,830.8 1734.4,830.8C1735.2,830.8 1735.5,831.4 1736.3,831.7C1737.1,832.1 1737.4,832.8 1738.2,832.8C1739.0,832.8 1739.3,832.0 1740.1,831.7C1740.9,831.7 1741.2,831.7 1742.0,831.7C1742.8,831.8 1743.1,832.3 1743.9,832.3C1744.7,832.3 1745.1,831.9 1745.8,831.8C1746.6,831.7 1747.0,831.7 1747.7,831.7C1748.5,831.8 1748.9,832.1 1749.6,832.1C1750.4,831.8 1750.8,830.6 1751.5,830.3C1752.3,830.3 1752.7,830.3 1753.4,830.5C1754.2,830.8 1754.6,831.6 1755.3,831.6C1756.1,831.6 1756.5,830.6 1757.2,830.6C1758.0,830.9 1758.4,832.7 1759.1,832.9C1759.9,832.9 1760.3,831.8 1761.0,831.6C1761.8,831.6 1762.2,831.7 1762.9,831.7C1763.7,831.5 1764.1,830.6 1764.8,830.6C1765.6,830.7 1766.0,831.9 1766.7,832.2C1767.5,832.2 1767.9,832.1 1768.6,832.0C1769.4,831.9 1769.8,831.6 1770.5,831.4C1771.3,831.3 1771.7,831.3 1772.4,831.3C1773.2,831.3 1773.6,831.7 1774.3,831.7C1775.1,831.7 1775.5,831.4 1776.2,831.1C1777.0,830.7 1777.4,830.0 1778.1,830.0C1778.9,830.1 1779.3,831.5 1780.0,831.8C1780.8,831.8 1781.2,831.7 1781.9,831.4C1782.7,831.2 1783.1,830.7 1783.8,830.6C1784.6,830.6 1785.0,831.4 1785.7,831.4C1786.5,831.1 1786.9,829.6 1787.6,829.6C1788.4,829.7 1788.8,831.8 1789.5,831.8C1790.3,831.8 1790.7,829.9 1791.5,829.6C1792.2,829.6 1792.6,830.3 1793.4,830.5C1794.1,830.5 1794.5,830.5 1795.3,830.5C1796.0,830.5 1796.4,830.5 1797.2,830.5C1797.9,830.8 1798.3,832.2 1799.1,832.3C1799.8,832.3 1800.2,830.9 1801.0,830.8C1801.7,830.8 1802.1,832.1 1802.9,832.1C1803.6,832.1 1804.0,831.3 1804.8,831.2C1805.5,831.2 1805.9,831.5 1806.7,831.5C1807.4,830.8 1807.8,827.9 1808.6,827.6C1809.3,827.6 1809.7,829.0 1810.5,829.7C1811.2,830.4 1811.6,830.5 1812.4,831.0C1813.1,831.5 1813.5,832.1 1814.3,832.1C1815.0,832.1 1815.4,831.0 1816.2,830.9C1816.9,830.9 1817.3,831.7 1818.1,831.7C1818.8,831.4 1819.2,829.4 1820.0,829.4C1820.7,829.6 1821.1,831.7 1821.9,832.4C1822.6,832.9 1823.0,832.9 1823.8,832.9C1824.5,832.6 1824.9,831.2 1825.7,830.8C1826.4,830.8 1826.8,830.8 1827.6,830.9C1828.3,831.1 1828.7,832.0 1829.5,832.0C1830.2,831.9 1830.6,830.9 1831.4,830.7C1832.1,830.7 1832.5,831.0 1833.3,831.0C1834.0,830.9 1834.4,830.4 1835.2,830.2C1835.9,830.2 1836.3,830.2 1837.1,830.2C1837.9,830.7 1838.2,832.7 1839.0,832.7C1839.8,832.6 1840.1,830.1 1840.9,830.0C1841.7,830.0 1842.0,831.7 1842.8,832.1C1843.6,832.1 1843.9,832.1 1844.7,831.8C1845.5,831.4 1845.8,830.2 1846.6,830.2C1847.4,830.3 1847.7,832.3 1848.5,832.3C1849.3,832.1 1849.6,830.0 1850.4,829.4C1851.2,829.2 1851.5,829.2 1852.3,829.2C1853.1,829.7 1853.4,831.6 1854.2,832.0C1855.0,832.0 1855.3,831.0 1856.1,830.9C1856.9,830.9 1857.2,831.5 1858.0,831.6C1858.8,831.6 1859.1,831.6 1859.9,831.6C1860.7,831.4 1861.1,830.7 1861.8,830.7C1862.6,830.7 1863.0,831.2 1863.7,831.2C1864.5,831.2 1864.9,830.9 1865.6,830.7C1866.4,830.6 1866.8,830.4 1867.5,830.4C1868.3,830.5 1868.7,831.2 1869.4,831.3C1870.2,831.3 1870.6,831.0 1871.3,830.8C1872.1,830.7 1872.5,830.6 1873.2,830.6C1874.0,831.2 1874.4,833.3 1875.1,833.6C1875.9,833.6 1876.3,832.1 1877.0,831.7C1877.8,831.6 1878.2,831.6 1878.9,831.6C1879.7,831.7 1880.1,832.3 1880.8,832.3C1881.6,832.3 1882.0,831.8 1882.7,831.7C1883.5,831.5 1883.9,831.6 1884.6,831.5C1885.4,831.5 1885.8,831.5 1886.5,831.5C1887.3,831.4 1887.7,831.5 1888.4,831.4C1889.2,831.3 1889.6,831.1 1890.3,831.1C1891.1,831.0 1891.5,830.9 1892.2,830.9C1893.0,831.1 1893.4,831.7 1894.1,831.7C1894.9,831.7 1895.3,831.2 1896.0,831.2C1896.8,831.2 1897.2,831.3 1897.9,831.5C1898.7,831.7 1899.1,832.0 1899.8,832.1C1900.6,832.1 1901.0,831.8 1901.7,831.8C1902.5,831.9 1902.9,832.4 1903.6,832.4C1904.4,832.4 1904.8,831.9 1905.5,831.8C1906.3,831.8 1906.7,832.1 1907.5,832.1C1908.2,831.9 1908.6,831.1 1909.4,831.0C1910.1,831.0 1910.5,831.5 1911.3,831.5C1912.0,831.4 1912.4,830.7 1913.2,830.7C1913.9,830.7 1914.3,831.2 1915.1,831.4C1915.8,831.7 1916.2,832.0 1917.0,832.0C1917.7,831.9 1918.1,831.6 1918.9,831.4C1919.6,831.2 1920.0,830.9 1920.8,830.9C1921.5,831.0 1921.9,831.5 1922.7,831.7C1923.4,831.7 1923.8,831.6 1924.6,831.6C1925.3,831.7 1925.7,832.2 1926.5,832.2C1927.2,832.1 1927.6,831.7 1928.4,831.2C1929.1,830.7 1929.5,829.7 1930.3,829.7C1931.0,829.7 1931.4,830.9 1932.2,831.3C1932.9,831.7 1933.3,831.5 1934.1,831.7C1934.8,832.0 1935.2,832.5 1936.0,832.5C1936.7,832.5 1937.1,832.0 1937.9,832.0C1938.6,832.0 1939.0,832.4 1939.8,832.4C1940.5,832.0 1940.9,830.4 1941.7,830.2C1942.4,830.2 1942.8,831.0 1943.6,831.1C1944.3,831.1 1944.7,830.7 1945.5,830.7C1946.2,830.7 1946.6,831.4 1947.4,831.4C1948.1,831.2 1948.5,829.9 1949.3,829.8C1950.0,829.8 1950.4,830.1 1951.2,830.5C1951.9,830.9 1952.3,831.4 1953.1,831.8C1953.9,832.1 1954.2,832.3 1955.0,832.3C1955.8,831.9 1956.1,829.9 1956.9,829.8C1957.7,829.8 1958.0,831.4 1958.8,831.6C1959.6,831.6 1959.9,830.7 1960.7,830.6C1961.5,830.6 1961.8,831.1 1962.6,831.1C1963.4,831.1 1964.1,830.7 1964.5,830.6" fill="none" stroke="#5fa04e" stroke-width="1.6" stroke-linejoin="round"/>
<rect x="592" y="935" width="1386" height="2" fill="#c9cbce"/>
<rect x="604.2" y="951" width="21" height="6" rx="3" fill="#5fa04e"/>
<rect x="592" y="971" width="1386" height="2" fill="#c9cbce"/>
<rect x="604.2" y="987" width="21" height="6" rx="3" fill="#ecc73c"/>
<rect x="592" y="1007" width="1386" height="2" fill="#e0e1e3"/>
<path d="M2074.0,138.2H3391.0M2074.0,177.5H3391.0M2074.0,216.8H3391.0M2074.0,256.1H3391.0M2074.0,295.4H3391.0M2074.0,334.7H3391.0" stroke="#ebecee" stroke-width="1" fill="none"/>
<path d="M2075.2,138.2V338.6M2207.0,138.2V338.6M2338.8,138.2V338.6M2470.6,138.2V338.6M2602.4,138.2V338.6M2734.2,138.2V338.6M2866.0,138.2V338.6M2997.8,138.2V338.6M3129.6,138.2V338.6M3261.4,138.2V338.6" stroke="#e4e5e8" stroke-width="1" fill="none"/>
<path d="M2164.1,334.5 L2196.6,334.5" fill="none" stroke="#5fa04e" stroke-width="1.7" stroke-linejoin="round"/>
<path d="M2206.1,334.5 L2287.6,334.5 L2289.6,325.5 L2291.6,325.5 L2293.6,334.5 L2362.7,334.5 L2364.7,325.5 L2366.7,325.5 L2368.7,334.5 L2503.5,334.5 L2505.5,325.5 L2507.5,325.5 L2509.5,334.5 L2600.8,334.5 L2602.8,325.5 L2604.8,325.5 L2606.8,334.5 L2807.5,334.5 L2809.5,325.5 L2811.5,325.5 L2813.5,334.5 L3215.2,334.5 L3217.2,325.5 L3219.2,325.5 L3221.2,334.5 L3221.1,334.5 L3223.1,325.5 L3225.1,325.5 L3227.1,334.5 L3390,334.5" fill="none" stroke="#5fa04e" stroke-width="1.7" stroke-linejoin="round"/>
<rect x="2017" y="401.5" width="1386" height="2" fill="#c9cbce"/>
<rect x="2029.5" y="417" width="20.5" height="6" rx="3" fill="#5fa04e"/>
<rect x="2017" y="437" width="1386" height="2" fill="#e0e1e3"/>
<path d="M2092.0,778.3H3391.3M2092.0,810.0H3391.3M2092.0,841.7H3391.3M2092.0,873.4H3391.3M2092.0,905.1H3391.3" stroke="#ebecee" stroke-width="1" fill="none"/>
<path d="M2093.5,765.6V911.2M2223.5,765.6V911.2M2353.5,765.6V911.2M2483.5,765.6V911.2M2613.5,765.6V911.2M2743.5,765.6V911.2M2873.5,765.6V911.2M3003.5,765.6V911.2M3133.5,765.6V911.2M3263.5,765.6V911.2" stroke="#e4e5e8" stroke-width="1" fill="none"/>
<path d="M2181.2,897.1C2181.6,897.6 2182.3,898.8 2183.1,899.5C2183.9,900.3 2184.2,900.6 2185.0,900.9C2185.8,901.1 2186.3,901.1 2186.9,901.1C2187.5,898.7 2187.2,889.0 2188.0,889.0C2188.8,889.1 2189.8,899.1 2190.7,901.3C2191.6,901.3 2191.8,900.7 2192.6,900.0C2193.4,899.4 2193.6,900.0 2194.5,898.2C2195.4,896.0 2196.3,890.5 2197.1,889.0C2197.9,889.0 2197.7,889.4 2198.3,890.8C2198.9,892.2 2199.4,895.0 2200.2,896.1C2201.0,896.6 2201.3,896.6 2202.1,896.6C2202.9,889.6 2203.5,861.4 2204.3,861.4C2205.1,862.2 2205.2,892.3 2205.9,900.4C2206.6,902.2 2207.0,902.2 2207.8,902.2C2208.6,901.5 2208.9,899.0 2209.7,897.1C2210.5,895.2 2210.8,892.6 2211.6,892.6C2212.4,893.2 2213.1,898.6 2213.5,900.1" fill="none" stroke="#5fa04e" stroke-width="1.6" stroke-linejoin="round"/>
<path d="M2222.7,893.8C2223.1,895.1 2223.8,899.4 2224.6,900.5C2225.4,900.5 2225.7,899.2 2226.5,899.1C2227.3,899.1 2227.6,899.8 2228.4,900.2C2229.2,900.7 2229.5,901.3 2230.3,901.3C2231.1,901.3 2231.4,900.5 2232.2,900.3C2233.0,900.3 2233.3,900.3 2234.1,900.3C2234.9,899.3 2235.2,895.4 2236.0,895.3C2236.8,895.3 2237.1,899.7 2237.9,899.7C2238.7,899.7 2239.0,895.4 2239.8,895.4C2240.6,895.4 2241.0,898.9 2241.7,899.6C2242.5,899.6 2242.9,898.9 2243.6,898.8C2244.4,898.8 2244.8,898.8 2245.5,898.9C2246.3,899.4 2246.7,901.3 2247.4,901.3C2248.2,901.3 2248.6,899.6 2249.3,899.2C2250.1,899.2 2250.5,899.5 2251.2,899.5C2251.9,896.9 2252.1,886.1 2252.9,886.1C2253.7,886.3 2254.2,897.4 2255.0,900.5C2255.8,901.4 2256.2,901.4 2256.9,901.4C2257.7,901.3 2258.1,901.4 2258.8,900.0C2259.6,898.5 2260.0,893.9 2260.7,893.9C2261.5,894.1 2261.9,901.0 2262.6,901.0C2263.4,900.1 2263.8,889.6 2264.5,889.4C2265.3,889.4 2265.7,897.8 2266.4,900.0C2267.2,900.4 2267.6,900.4 2268.3,900.4C2269.1,900.3 2269.5,899.9 2270.2,899.8C2271.0,899.8 2271.4,899.8 2272.1,899.9C2272.9,900.1 2273.3,900.5 2274.0,900.6C2274.8,900.6 2275.2,900.6 2275.9,900.4C2276.7,897.0 2277.1,883.6 2277.8,883.6C2278.6,883.6 2279.0,897.0 2279.7,900.3C2280.5,900.3 2280.9,900.3 2281.6,900.3C2282.4,898.5 2282.8,891.2 2283.5,890.9C2284.3,890.9 2284.7,896.9 2285.4,898.8C2286.2,900.4 2286.6,900.1 2287.3,900.4C2288.1,900.4 2288.5,900.3 2289.2,900.3C2290.0,900.5 2290.4,901.2 2291.1,901.4C2291.9,901.4 2292.3,901.0 2293.0,900.9C2293.8,900.9 2294.2,901.0 2294.9,901.0C2295.7,900.8 2296.1,900.9 2296.8,900.0C2297.6,899.2 2298.0,899.4 2298.7,897.0C2299.5,894.5 2299.9,887.7 2300.6,887.7C2301.4,888.4 2301.8,897.7 2302.5,900.2C2303.3,900.2 2303.7,900.1 2304.4,900.1C2305.2,900.2 2305.6,900.8 2306.4,900.8C2307.1,900.8 2307.4,900.8 2308.3,900.0C2309.1,897.8 2310.0,890.8 2310.8,889.8C2311.6,889.8 2311.4,892.8 2312.1,895.1C2312.7,897.3 2313.2,899.9 2314.0,900.9C2314.7,900.9 2315.1,900.1 2315.9,900.0C2316.6,900.0 2317.0,900.8 2317.8,900.8C2318.5,899.4 2318.9,893.4 2319.7,893.2C2320.4,893.2 2320.8,898.0 2321.6,899.4C2322.3,900.3 2322.7,899.8 2323.5,900.3C2324.2,900.7 2324.6,901.4 2325.4,901.6C2326.1,901.6 2326.5,901.2 2327.3,901.1C2328.0,900.9 2328.4,901.1 2329.2,900.8C2329.9,898.6 2330.3,890.2 2331.1,890.0C2331.8,890.0 2332.2,897.6 2333.0,899.7C2333.7,900.3 2334.1,900.3 2334.9,900.3C2335.6,899.9 2335.9,900.3 2336.8,897.4C2337.7,889.7 2338.6,863.1 2339.4,862.0C2340.2,862.0 2340.0,884.2 2340.6,891.8C2341.2,899.3 2341.7,897.8 2342.5,899.5C2343.2,900.6 2343.6,900.5 2344.4,900.6C2345.1,900.6 2345.5,900.0 2346.3,899.9C2347.0,899.9 2347.4,900.2 2348.2,900.2C2348.9,900.2 2349.3,900.1 2350.1,900.1C2350.8,900.2 2351.2,900.5 2352.0,900.7C2352.7,900.9 2353.1,901.0 2353.9,901.0C2354.6,900.7 2355.0,899.0 2355.8,898.9C2356.5,898.9 2356.9,900.5 2357.7,900.9C2358.4,900.9 2358.8,900.9 2359.6,900.7C2360.3,900.1 2360.7,899.2 2361.5,897.7C2362.2,896.3 2362.6,893.6 2363.4,893.6C2364.1,893.9 2364.5,898.5 2365.3,899.4C2366.0,899.4 2366.4,898.4 2367.2,898.2C2367.9,898.2 2368.3,898.2 2369.1,898.3C2369.8,898.7 2370.2,900.5 2371.0,900.6C2371.7,900.6 2372.1,899.3 2372.9,898.8C2373.7,898.2 2374.0,897.9 2374.8,897.9C2375.6,898.4 2375.9,901.1 2376.7,901.3C2377.5,901.3 2377.8,899.5 2378.6,899.0C2379.4,898.8 2379.7,898.8 2380.5,898.8C2381.3,899.2 2381.6,900.7 2382.4,901.1C2383.2,901.1 2383.5,900.6 2384.3,900.6C2385.1,900.8 2385.3,901.7 2386.2,901.7C2387.1,898.5 2387.8,884.8 2388.6,884.5C2389.4,884.5 2389.3,897.2 2390.0,900.2C2390.7,900.2 2391.1,899.2 2391.9,899.2C2392.7,899.4 2393.0,900.7 2393.8,900.7C2394.6,900.7 2394.9,900.7 2395.7,898.9C2396.5,896.8 2396.8,890.4 2397.6,890.4C2398.4,890.6 2398.7,898.0 2399.5,899.8C2400.3,899.8 2400.6,899.6 2401.4,899.6C2402.2,899.8 2402.6,900.6 2403.3,900.6C2404.0,877.0 2404.1,782.0 2404.9,782.0C2405.7,782.0 2406.3,877.2 2407.1,900.4C2407.9,900.4 2408.3,898.1 2409.0,898.1C2409.8,898.1 2410.2,900.1 2410.9,900.5C2411.7,900.5 2412.1,900.3 2412.8,900.0C2413.6,899.7 2414.0,899.1 2414.7,898.9C2415.5,898.9 2415.9,899.1 2416.6,899.1C2417.4,896.2 2417.8,884.5 2418.5,884.5C2419.3,884.9 2419.7,898.4 2420.4,901.0C2421.2,901.0 2421.6,897.7 2422.3,897.7C2423.1,897.7 2423.5,900.5 2424.2,901.0C2425.0,901.0 2425.4,900.6 2426.1,900.3C2426.9,900.1 2427.3,899.7 2428.0,899.7C2428.8,899.7 2429.2,900.2 2429.9,900.2C2430.7,898.2 2431.1,890.2 2431.8,889.9C2432.6,889.9 2433.0,896.2 2433.7,898.3C2434.5,900.1 2434.9,899.9 2435.6,900.1C2436.4,900.1 2436.8,899.0 2437.5,899.0C2438.3,899.0 2438.7,899.8 2439.4,900.1C2440.2,900.3 2440.6,900.3 2441.3,900.3C2442.1,899.8 2442.5,898.6 2443.2,897.7C2444.0,896.7 2444.4,895.4 2445.1,895.4C2445.9,895.9 2446.3,899.4 2447.0,900.5C2447.8,900.7 2448.2,900.7 2448.9,900.7C2449.7,900.6 2450.1,900.1 2450.8,900.1C2451.6,900.2 2452.0,901.2 2452.7,901.2C2453.5,901.2 2453.9,900.4 2454.6,900.3C2455.4,900.3 2455.7,900.7 2456.5,900.7C2457.4,896.8 2458.0,880.8 2458.8,880.8C2459.6,880.8 2459.7,897.4 2460.3,900.8C2461.0,900.8 2461.5,898.1 2462.2,897.8C2463.0,897.8 2463.4,898.7 2464.1,899.2C2464.9,899.7 2465.3,900.1 2466.0,900.3C2466.8,900.3 2467.2,900.2 2467.9,900.2C2468.7,900.2 2469.1,900.3 2469.8,900.3C2470.6,900.0 2471.0,899.0 2471.7,898.8C2472.5,898.8 2472.9,899.5 2473.7,899.5C2474.4,897.7 2474.8,889.9 2475.6,889.9C2476.3,890.2 2476.7,899.2 2477.5,901.2C2478.2,901.2 2478.6,900.1 2479.4,899.7C2480.1,899.3 2480.5,899.3 2481.3,899.3C2482.0,899.5 2482.4,900.3 2483.2,900.6C2483.9,900.7 2484.3,900.6 2485.1,900.7C2485.8,900.7 2486.2,900.8 2487.0,900.8C2487.7,900.8 2488.1,900.8 2488.9,900.8C2489.6,900.4 2490.0,899.3 2490.8,899.0C2491.5,898.9 2491.9,898.9 2492.7,898.9C2493.4,898.9 2493.8,898.9 2494.6,899.0C2495.3,899.4 2495.7,900.6 2496.5,900.9C2497.2,900.9 2497.6,900.7 2498.4,900.4C2499.1,900.2 2499.5,899.8 2500.3,899.8C2501.0,899.8 2501.4,900.3 2502.2,900.4C2502.9,900.4 2503.4,900.4 2504.1,900.4C2504.8,898.2 2504.9,889.2 2505.7,889.2C2506.5,889.2 2507.1,898.8 2507.9,900.3C2508.7,900.3 2509.0,897.2 2509.8,896.6C2510.5,896.6 2510.9,896.6 2511.7,897.1C2512.4,897.7 2512.8,899.6 2513.6,899.6C2514.3,898.6 2514.7,892.1 2515.5,892.0C2516.2,892.0 2516.6,899.5 2517.4,899.5C2518.1,899.2 2518.5,891.1 2519.3,890.7C2520.0,890.7 2520.5,897.7 2521.2,897.7C2521.8,892.0 2521.7,862.5 2522.5,862.5C2523.3,863.0 2524.1,892.4 2525.0,900.0C2525.9,900.5 2526.1,900.5 2526.9,900.5C2527.6,900.2 2528.0,898.7 2528.8,898.6C2529.5,898.6 2529.9,899.5 2530.7,899.6C2531.4,899.6 2531.8,899.4 2532.6,899.4C2533.3,899.6 2533.7,900.1 2534.5,900.5C2535.2,901.0 2535.6,901.5 2536.4,901.6C2537.1,901.6 2537.5,901.6 2538.3,901.2C2539.0,900.2 2539.4,896.7 2540.2,896.5C2541.0,896.5 2541.3,899.2 2542.1,900.1C2542.9,900.9 2543.2,901.0 2544.0,901.0C2544.8,900.8 2545.1,899.5 2545.9,899.1C2546.7,898.6 2547.0,898.6 2547.8,898.6C2548.6,898.7 2548.9,899.0 2549.7,899.5C2550.5,900.0 2550.8,900.9 2551.6,901.1C2552.4,901.1 2552.7,900.5 2553.5,900.4C2554.3,900.4 2554.6,900.6 2555.4,900.6C2556.2,900.6 2556.5,900.6 2557.3,900.6C2558.1,900.4 2558.4,899.6 2559.2,899.6C2560.0,899.6 2560.3,900.5 2561.1,900.5C2561.9,899.9 2562.2,898.5 2563.0,896.9C2563.8,895.3 2564.1,894.5 2564.9,892.4C2565.7,890.3 2566.4,886.3 2567.2,886.3C2568.0,887.9 2568.0,897.8 2568.7,900.7C2569.4,900.7 2569.9,900.7 2570.6,900.5C2571.3,897.8 2571.5,887.6 2572.3,887.4C2573.1,887.4 2573.6,897.0 2574.4,899.6C2575.2,900.3 2575.6,900.3 2576.3,900.3C2577.1,900.3 2577.5,900.3 2578.2,899.6C2579.0,899.0 2579.4,897.3 2580.1,897.2C2580.9,897.2 2581.3,899.0 2582.0,899.0C2582.8,898.2 2583.2,893.2 2583.9,893.2C2584.7,893.5 2585.1,898.6 2585.8,900.1C2586.6,900.7 2587.0,900.7 2587.7,900.7C2588.5,900.6 2588.9,899.8 2589.6,899.8C2590.4,899.9 2590.8,901.1 2591.5,901.1C2592.3,900.4 2592.7,896.4 2593.4,896.4C2594.2,896.4 2594.6,901.0 2595.3,901.4C2596.1,901.4 2596.5,899.6 2597.2,898.3C2598.0,897.0 2598.4,894.9 2599.1,894.9C2599.9,895.2 2600.3,898.8 2601.0,899.9C2601.8,900.5 2602.2,900.5 2602.9,900.5C2603.7,900.4 2604.1,899.7 2604.8,899.5C2605.6,899.3 2606.0,899.5 2606.7,899.3C2607.5,898.6 2607.9,896.1 2608.6,895.9C2609.4,895.9 2609.8,897.8 2610.5,898.4C2611.3,899.0 2611.7,898.5 2612.4,899.0C2613.2,899.4 2613.6,900.4 2614.3,900.5C2615.1,900.5 2615.5,899.8 2616.2,899.6C2617.0,899.6 2617.4,899.6 2618.1,899.7C2618.9,899.9 2619.3,900.4 2620.0,900.5C2620.8,900.5 2621.2,900.5 2621.9,900.5C2622.7,900.3 2623.1,899.6 2623.8,899.6C2624.6,899.7 2625.0,900.7 2625.7,901.0C2626.5,901.0 2626.9,901.0 2627.6,901.0C2628.4,900.9 2628.8,901.0 2629.5,900.3C2630.3,899.5 2630.7,896.8 2631.4,896.8C2632.2,896.9 2632.6,899.9 2633.3,900.5C2634.1,900.5 2634.5,900.1 2635.2,899.8C2636.0,899.5 2636.3,899.8 2637.1,899.0C2638.0,893.7 2638.6,873.5 2639.4,873.5C2640.2,873.7 2640.3,894.3 2641.0,899.8C2641.6,901.3 2642.1,901.3 2642.9,901.3C2643.6,900.9 2644.0,897.9 2644.8,897.8C2645.5,897.8 2645.9,900.5 2646.7,900.5C2647.4,899.4 2647.8,892.4 2648.6,892.3C2649.3,892.3 2649.7,898.3 2650.5,900.1C2651.2,901.3 2651.6,901.3 2652.4,901.3C2653.1,900.9 2653.5,898.8 2654.3,898.1C2655.0,898.1 2655.4,898.1 2656.2,898.1C2656.9,898.5 2657.3,900.0 2658.1,900.4C2658.8,900.4 2659.2,900.4 2660.0,900.4C2660.7,900.5 2661.1,901.0 2661.9,901.1C2662.6,901.1 2663.0,900.9 2663.8,900.8C2664.5,900.7 2664.9,900.8 2665.7,900.6C2666.4,900.3 2666.8,900.6 2667.6,899.4C2668.3,897.3 2668.7,890.9 2669.5,890.0C2670.2,890.0 2670.6,894.3 2671.4,894.9C2672.1,894.9 2672.5,892.7 2673.3,892.7C2674.0,894.0 2674.4,899.7 2675.2,901.2C2675.9,901.2 2676.3,900.4 2677.1,900.1C2677.8,899.9 2678.2,899.9 2679.0,899.9C2679.7,900.0 2680.1,900.4 2680.9,900.6C2681.6,900.9 2682.0,901.2 2682.8,901.2C2683.5,901.0 2683.9,899.9 2684.7,899.7C2685.4,899.7 2685.8,900.1 2686.6,900.3C2687.3,900.6 2687.7,901.0 2688.5,901.0C2689.2,900.7 2689.6,899.7 2690.4,899.2C2691.1,898.8 2691.5,898.7 2692.3,898.7C2693.0,898.7 2693.4,899.3 2694.2,899.3C2694.9,897.9 2695.5,899.3 2696.1,891.7C2696.7,878.4 2696.5,832.4 2697.3,832.4C2698.1,834.1 2699.0,886.7 2699.9,900.4C2700.8,900.9 2701.0,900.9 2701.8,900.9C2702.5,900.5 2702.9,899.6 2703.7,898.4C2704.4,897.3 2704.8,896.3 2705.6,895.1C2706.4,893.9 2706.7,892.5 2707.5,892.5C2708.3,893.5 2708.6,899.5 2709.4,900.3C2710.2,900.3 2710.5,896.6 2711.3,896.6C2712.1,896.6 2712.4,899.1 2713.2,899.9C2714.0,900.8 2714.3,900.5 2715.1,900.8C2715.9,901.1 2716.2,901.4 2717.0,901.4C2717.8,901.2 2718.1,899.9 2718.9,899.5C2719.7,899.5 2720.1,899.8 2720.8,899.8C2721.5,891.5 2721.8,858.1 2722.6,858.1C2723.4,858.4 2723.8,894.3 2724.6,901.5C2725.4,901.5 2725.7,895.0 2726.5,894.0C2727.3,894.0 2727.6,896.1 2728.4,896.1C2729.2,895.0 2729.5,888.5 2730.3,888.5C2731.1,889.1 2731.4,897.9 2732.2,899.4C2733.0,899.4 2733.3,896.0 2734.1,896.0C2734.9,896.2 2735.2,899.5 2736.0,900.3C2736.8,900.3 2737.1,900.2 2737.9,900.2C2738.7,900.1 2739.0,900.1 2739.8,900.1C2740.6,900.1 2741.0,900.1 2741.7,900.1C2742.5,900.0 2742.9,899.5 2743.6,899.5C2744.4,899.5 2744.8,899.5 2745.5,899.7C2746.3,899.8 2746.7,900.3 2747.4,900.3C2748.2,899.7 2748.6,898.8 2749.3,896.7C2750.1,894.7 2750.5,890.1 2751.2,890.1C2752.0,890.8 2752.4,898.5 2753.1,900.6C2753.9,900.6 2754.3,900.6 2755.0,900.4C2755.8,899.7 2756.2,897.2 2756.9,897.2C2757.7,897.2 2758.1,900.8 2758.8,900.8C2759.6,900.7 2760.0,897.0 2760.7,896.8C2761.5,896.8 2761.9,899.1 2762.6,899.7C2763.4,900.0 2763.9,900.0 2764.5,900.0C2765.2,894.2 2765.0,870.9 2765.8,870.9C2766.6,870.9 2767.4,895.1 2768.3,899.8C2769.2,899.8 2769.5,894.6 2770.2,894.6C2771.0,894.7 2771.4,899.2 2772.1,900.3C2772.9,900.3 2773.2,900.3 2774.0,899.9C2774.8,894.9 2775.3,875.6 2776.1,875.3C2776.9,875.3 2777.1,893.6 2777.8,898.4C2778.6,899.4 2779.0,899.1 2779.7,899.4C2780.5,899.8 2780.9,900.2 2781.6,900.2C2782.4,900.2 2782.8,900.2 2783.5,899.4C2784.2,893.8 2784.4,871.7 2785.2,871.7C2786.0,872.0 2786.5,895.2 2787.3,900.9C2788.1,900.9 2788.5,900.3 2789.2,900.2C2790.0,900.2 2790.4,900.5 2791.1,900.5C2791.9,899.1 2792.3,893.4 2793.0,893.2C2793.8,893.2 2794.2,898.0 2794.9,899.5C2795.7,900.5 2796.1,900.3 2796.8,900.5C2797.6,900.7 2798.0,900.7 2798.7,900.7C2799.5,897.2 2799.8,884.8 2800.6,883.0C2801.4,883.0 2801.8,888.5 2802.5,891.9C2803.3,895.4 2803.7,899.7 2804.4,900.3C2805.2,900.3 2805.6,894.9 2806.3,894.9C2807.1,894.9 2807.5,900.2 2808.3,900.2C2809.0,900.2 2809.4,894.7 2810.2,894.7C2810.9,894.9 2811.3,900.1 2812.1,901.2C2812.8,901.2 2813.2,901.2 2814.0,900.1C2814.7,897.4 2815.1,887.8 2815.9,887.8C2816.6,887.8 2817.0,897.7 2817.8,899.9C2818.5,899.9 2818.9,899.2 2819.7,899.0C2820.4,898.7 2820.8,899.0 2821.6,898.6C2822.3,897.4 2822.7,893.5 2823.5,893.0C2824.2,893.0 2824.6,895.6 2825.4,896.2C2826.1,896.2 2826.5,896.2 2827.3,896.2C2828.0,896.7 2828.4,899.0 2829.2,899.0C2829.9,892.0 2830.2,861.0 2831.0,861.0C2831.8,861.2 2832.2,893.1 2833.0,899.8C2833.7,899.8 2834.1,894.7 2834.9,894.7C2835.6,894.8 2836.0,898.7 2836.8,899.9C2837.5,900.9 2837.9,900.6 2838.7,900.9C2839.4,901.0 2839.8,901.0 2840.6,901.0C2841.3,900.7 2841.7,899.5 2842.5,899.0C2843.2,898.6 2843.6,898.6 2844.4,898.6C2845.1,898.8 2845.5,899.7 2846.3,899.9C2847.0,899.9 2847.4,899.9 2848.2,899.8C2848.9,898.7 2849.3,894.3 2850.1,894.3C2850.8,894.4 2851.2,899.6 2852.0,900.5C2852.7,900.5 2853.1,900.5 2853.9,898.9C2854.7,895.7 2855.2,884.5 2856.0,884.5C2856.8,884.7 2857.0,896.6 2857.7,899.9C2858.4,901.4 2858.8,901.3 2859.6,901.4C2860.3,901.4 2860.7,900.7 2861.5,900.5C2862.2,900.2 2862.6,900.1 2863.4,899.9C2864.1,899.7 2864.5,899.6 2865.3,899.5C2866.0,899.4 2866.4,899.4 2867.2,899.4C2867.9,899.6 2868.3,900.6 2869.1,900.7C2869.8,900.7 2870.2,900.0 2871.0,900.0C2871.7,900.1 2871.9,901.2 2872.9,901.2C2873.8,892.1 2874.9,854.5 2875.7,854.4C2876.5,854.4 2876.1,891.5 2876.7,900.7C2877.3,900.7 2877.8,900.3 2878.6,900.3C2879.4,900.3 2879.7,900.5 2880.5,900.7C2881.3,900.8 2881.6,901.1 2882.4,901.1C2883.2,899.9 2883.5,895.7 2884.3,894.8C2885.1,894.8 2885.3,896.5 2886.2,896.5C2887.1,892.3 2887.8,873.9 2888.6,873.9C2889.4,874.6 2889.3,894.6 2890.0,899.9C2890.7,900.7 2891.1,900.7 2891.9,900.7C2892.7,896.5 2893.2,880.8 2894.0,879.4C2894.8,879.4 2895.0,889.7 2895.7,893.5C2896.4,897.4 2896.8,897.1 2897.6,898.7C2898.4,900.2 2898.7,901.0 2899.5,901.2C2900.3,901.2 2900.6,899.7 2901.4,899.6C2902.2,899.6 2902.5,900.8 2903.3,900.8C2904.1,900.7 2904.4,899.3 2905.2,899.2C2906.0,899.2 2906.3,899.7 2907.1,900.1C2907.9,900.5 2908.3,901.1 2909.0,901.1C2909.8,901.1 2910.2,900.1 2910.9,899.9C2911.7,899.9 2912.1,899.9 2912.8,899.9C2913.6,899.9 2914.0,900.0 2914.7,900.1C2915.5,900.2 2915.9,900.4 2916.6,900.4C2917.4,900.3 2917.8,899.8 2918.5,899.8C2919.3,899.8 2919.7,900.3 2920.4,900.4C2921.2,900.4 2921.6,900.4 2922.3,900.3C2923.1,898.0 2923.5,889.3 2924.2,889.3C2925.0,889.3 2925.4,898.6 2926.1,900.2C2926.9,900.2 2927.3,897.6 2928.0,897.6C2928.8,897.7 2929.2,901.0 2929.9,901.0C2930.7,900.8 2931.1,897.1 2931.8,896.9C2932.6,896.9 2933.0,899.1 2933.7,899.7C2934.5,900.3 2934.9,900.2 2935.6,900.3C2936.4,900.3 2936.8,900.2 2937.5,900.2C2938.3,900.3 2938.7,901.1 2939.4,901.1C2940.2,901.0 2940.6,900.7 2941.3,899.8C2942.1,898.8 2942.5,896.2 2943.2,896.2C2944.0,896.2 2944.4,899.6 2945.1,899.6C2945.9,899.1 2946.3,893.3 2947.0,893.3C2947.8,893.6 2948.2,899.7 2948.9,901.0C2949.7,901.0 2949.9,901.0 2950.8,899.4C2951.7,896.5 2952.6,886.3 2953.4,886.3C2954.2,886.3 2954.0,897.0 2954.6,899.7C2955.3,899.7 2955.8,899.7 2956.5,899.7C2957.3,899.8 2957.7,900.1 2958.4,900.1C2959.2,898.7 2959.6,892.8 2960.3,892.7C2961.1,892.7 2961.5,898.6 2962.2,900.0C2963.0,900.0 2963.4,899.9 2964.1,899.6C2964.9,899.2 2965.3,899.6 2966.0,898.4C2966.8,896.9 2967.2,892.0 2967.9,892.0C2968.7,892.5 2969.1,898.8 2969.8,900.5C2970.6,900.6 2971.0,900.6 2971.7,900.6C2972.5,900.5 2972.9,900.1 2973.7,900.0C2974.4,900.0 2974.8,900.3 2975.6,900.3C2976.3,898.7 2976.7,892.3 2977.5,892.2C2978.2,892.2 2978.6,898.2 2979.4,899.8C2980.1,900.1 2980.5,900.1 2981.3,900.1C2982.0,899.9 2982.4,899.6 2983.2,899.0C2983.9,898.3 2984.3,897.0 2985.1,896.8C2985.8,896.8 2986.1,897.9 2987.0,897.9C2987.8,895.1 2988.5,883.0 2989.3,883.0C2990.1,883.4 2990.1,896.2 2990.8,899.7C2991.4,900.3 2991.9,900.2 2992.7,900.3C2993.4,900.3 2993.8,900.3 2994.6,900.3C2995.3,899.9 2995.7,899.2 2996.5,898.6C2997.2,897.9 2997.7,898.6 2998.4,896.9C2999.0,890.2 2998.8,872.4 2999.6,865.4C3000.4,861.8 3001.3,861.8 3002.2,861.8C3003.1,868.8 3003.3,900.5 3004.1,900.5C3004.9,899.6 3005.4,857.1 3006.2,857.0C3007.0,857.0 3007.2,891.7 3007.9,900.3C3008.6,900.3 3009.1,900.3 3009.8,900.0C3010.5,896.4 3010.5,883.2 3011.3,882.7C3012.1,882.7 3012.7,894.2 3013.6,897.4C3014.4,899.0 3014.7,898.5 3015.5,899.0C3016.2,899.5 3016.6,900.1 3017.4,900.1C3018.1,899.9 3018.5,899.6 3019.3,898.3C3020.0,897.1 3020.4,893.8 3021.2,893.8C3021.9,894.3 3022.3,899.6 3023.1,900.8C3023.8,900.8 3024.2,899.7 3025.0,899.5C3025.7,899.5 3026.1,899.7 3026.9,899.9C3027.6,900.0 3028.0,900.1 3028.8,900.1C3029.5,899.9 3029.9,899.2 3030.7,899.1C3031.4,899.1 3031.8,899.8 3032.6,899.8C3033.3,899.8 3033.7,899.5 3034.5,899.5C3035.2,899.5 3035.6,899.6 3036.4,899.6C3037.1,899.1 3037.6,899.6 3038.3,897.0C3039.0,893.3 3039.1,881.2 3039.9,881.2C3040.7,881.7 3041.3,895.7 3042.1,899.7C3042.9,901.1 3043.2,901.1 3044.0,901.1C3044.8,901.0 3045.1,901.1 3045.9,899.5C3046.7,892.7 3047.2,867.4 3048.0,867.3C3048.8,867.3 3049.0,892.8 3049.7,899.1C3050.4,899.1 3050.8,899.1 3051.6,899.0C3052.4,895.8 3052.7,883.1 3053.5,883.1C3054.3,883.5 3054.6,897.9 3055.4,901.3C3056.2,901.3 3056.5,900.2 3057.3,900.0C3058.1,900.0 3058.4,900.2 3059.2,900.2C3060.0,900.2 3060.3,899.7 3061.1,899.6C3061.9,899.6 3062.2,900.0 3063.0,900.1C3063.8,900.1 3064.1,899.8 3064.9,899.8C3065.7,900.0 3066.0,901.1 3066.8,901.3C3067.6,901.3 3067.9,900.9 3068.7,900.5C3069.5,900.1 3069.8,900.5 3070.6,899.2C3071.4,896.2 3072.1,885.6 3072.9,885.6C3073.7,885.6 3073.7,896.4 3074.4,899.2C3075.1,899.8 3075.6,899.8 3076.3,899.8C3077.1,898.6 3077.5,893.6 3078.2,893.1C3079.0,893.1 3079.4,896.4 3080.1,897.6C3080.9,898.7 3081.3,898.0 3082.0,898.8C3082.8,899.5 3083.2,901.3 3083.9,901.3C3084.7,899.9 3085.1,892.1 3085.8,891.8C3086.6,891.8 3087.0,898.0 3087.7,899.8C3088.5,900.6 3088.9,900.5 3089.6,900.6C3090.4,900.6 3090.8,900.6 3091.5,900.6C3092.3,899.9 3092.7,897.5 3093.4,897.4C3094.2,897.4 3094.6,899.3 3095.3,899.9C3096.1,900.3 3096.5,900.3 3097.2,900.3C3098.0,900.3 3098.4,899.9 3099.1,899.8C3099.9,899.8 3100.3,899.9 3101.0,900.1C3101.8,900.3 3102.2,900.7 3102.9,901.0C3103.7,901.2 3104.1,901.2 3104.8,901.2C3105.6,901.0 3106.0,900.5 3106.7,900.0C3107.5,899.4 3107.9,898.5 3108.6,898.5C3109.4,898.7 3109.8,900.3 3110.5,900.8C3111.3,900.9 3111.7,900.9 3112.4,900.9C3113.2,901.0 3113.6,901.0 3114.3,901.1C3115.1,901.2 3115.6,901.4 3116.2,901.4C3116.9,891.3 3116.8,851.3 3117.6,850.8C3118.4,850.8 3119.2,889.2 3120.0,898.8C3120.9,898.8 3121.2,898.4 3121.9,898.4C3122.7,898.8 3123.1,900.4 3123.8,900.4C3124.6,900.4 3125.0,898.8 3125.7,898.6C3126.5,898.6 3126.9,899.0 3127.6,899.4C3128.4,899.9 3128.8,900.6 3129.5,900.8C3130.3,900.8 3130.7,900.5 3131.4,900.5C3132.2,900.5 3132.6,901.0 3133.3,901.0C3134.1,901.0 3134.5,900.5 3135.2,900.4C3136.0,900.4 3136.4,900.5 3137.1,900.6C3137.9,900.6 3138.3,900.7 3139.0,900.7C3139.8,900.7 3140.2,900.7 3141.0,900.5C3141.7,898.8 3142.1,892.8 3142.9,892.5C3143.6,892.5 3144.0,898.9 3144.8,898.9C3145.5,898.7 3145.9,892.6 3146.7,891.7C3147.4,891.7 3147.8,893.2 3148.6,894.8C3149.3,896.5 3149.7,898.9 3150.5,900.0C3151.2,900.5 3151.6,900.4 3152.4,900.5C3153.1,900.5 3153.5,900.3 3154.3,900.3C3155.0,900.3 3155.4,900.6 3156.2,900.6C3156.9,900.3 3157.4,900.6 3158.1,898.8C3158.8,895.8 3158.9,885.6 3159.7,885.6C3160.5,885.8 3161.1,897.1 3161.9,899.9C3162.7,899.9 3163.0,899.8 3163.8,899.8C3164.5,899.9 3164.9,900.1 3165.7,900.1C3166.4,898.5 3166.8,892.4 3167.6,891.7C3168.3,891.7 3168.7,895.4 3169.5,896.2C3170.2,896.2 3170.7,896.2 3171.4,895.4C3172.0,893.3 3171.8,885.6 3172.6,885.6C3173.4,886.6 3174.5,900.3 3175.2,900.3C3175.9,899.4 3175.4,882.1 3176.2,880.8C3177.0,880.8 3178.0,889.8 3179.0,893.7C3179.9,897.6 3180.1,899.0 3180.9,900.3C3181.6,900.6 3182.0,900.6 3182.8,900.6C3183.5,900.1 3183.9,898.0 3184.7,897.8C3185.4,897.8 3185.8,899.8 3186.6,899.8C3187.3,899.6 3187.7,896.9 3188.5,896.9C3189.2,896.9 3189.6,898.8 3190.4,899.8C3191.1,900.8 3191.5,901.8 3192.3,901.8C3193.0,901.8 3193.4,900.0 3194.2,899.6C3194.9,899.6 3195.3,900.2 3196.1,900.2C3196.8,900.1 3197.2,899.3 3198.0,899.3C3198.7,899.5 3199.1,901.2 3199.9,901.2C3200.6,900.3 3201.0,895.3 3201.8,894.8C3202.5,894.8 3202.9,897.8 3203.7,899.0C3204.4,900.2 3204.8,900.3 3205.6,900.6C3206.3,900.6 3206.7,900.6 3207.5,900.5C3208.3,900.1 3208.6,898.7 3209.4,898.7C3210.2,898.7 3210.5,900.3 3211.3,900.3C3212.1,900.0 3212.4,896.8 3213.2,896.8C3214.0,897.0 3214.3,900.4 3215.1,901.2C3215.9,901.2 3216.2,901.1 3217.0,900.8C3217.8,900.5 3218.1,900.1 3218.9,899.6C3219.7,899.2 3220.0,898.7 3220.8,898.7C3221.6,898.8 3221.9,899.9 3222.7,900.3C3223.5,900.4 3223.8,900.4 3224.6,900.4C3225.4,899.6 3225.7,896.2 3226.5,896.0C3227.3,896.0 3227.6,898.7 3228.4,899.6C3229.2,900.5 3229.5,900.6 3230.3,900.6C3231.1,900.4 3231.4,898.6 3232.2,898.6C3233.0,898.6 3233.3,900.4 3234.1,900.4C3234.9,900.4 3235.2,898.5 3236.0,898.5C3236.8,898.6 3237.1,900.3 3237.9,900.9C3238.7,901.1 3239.0,901.1 3239.8,901.1C3240.6,900.8 3241.0,899.9 3241.7,899.5C3242.5,899.1 3242.9,899.5 3243.6,899.0C3244.4,897.9 3244.8,894.4 3245.5,893.7C3246.3,893.7 3246.7,894.2 3247.4,895.6C3248.2,897.0 3248.6,899.9 3249.3,900.6C3250.1,900.6 3250.5,900.2 3251.2,899.5C3252.0,898.8 3252.4,897.6 3253.1,897.1C3253.9,896.9 3254.3,896.9 3255.0,896.9C3255.8,897.6 3256.2,899.8 3256.9,900.6C3257.7,901.1 3258.1,901.1 3258.8,901.1C3259.6,901.0 3260.0,901.1 3260.7,900.2C3261.4,896.7 3261.5,884.5 3262.3,883.7C3263.1,883.7 3263.7,892.7 3264.5,896.1C3265.3,899.6 3265.7,899.8 3266.4,900.8C3267.2,901.0 3267.6,900.9 3268.3,901.0C3269.1,901.1 3269.5,901.1 3270.2,901.1C3271.0,901.1 3271.4,901.1 3272.1,900.8C3272.9,898.7 3273.3,890.9 3274.0,890.6C3274.8,890.6 3275.2,897.2 3275.9,899.1C3276.7,899.7 3276.9,899.7 3277.8,899.7C3278.8,895.3 3279.8,877.5 3280.6,877.5C3281.4,877.6 3281.0,896.1 3281.6,899.9C3282.2,899.9 3282.8,896.7 3283.5,896.7C3284.3,896.7 3284.7,899.0 3285.4,899.9C3286.2,900.8 3286.6,901.2 3287.3,901.2C3288.1,901.2 3288.5,900.5 3289.2,900.3C3290.0,900.2 3290.3,900.3 3291.1,900.2C3292.0,895.8 3292.7,878.3 3293.5,878.3C3294.3,878.3 3294.3,896.1 3294.9,900.4C3295.6,900.4 3296.1,900.3 3296.8,899.9C3297.6,899.5 3298.0,898.2 3298.7,898.2C3299.5,898.2 3299.9,899.6 3300.6,899.8C3301.4,899.8 3301.8,899.0 3302.5,899.0C3303.3,899.0 3303.7,899.4 3304.4,899.6C3305.2,899.8 3305.6,899.9 3306.3,899.9C3307.1,899.0 3307.5,895.4 3308.3,895.4C3309.0,895.5 3309.4,899.7 3310.2,900.5C3310.9,900.5 3311.3,899.8 3312.1,899.6C3312.8,899.6 3313.2,899.6 3314.0,899.6C3314.7,899.7 3315.1,900.4 3315.9,900.4C3316.6,898.8 3317.0,891.8 3317.8,891.5C3318.5,891.5 3318.9,898.5 3319.7,898.9C3320.4,898.9 3320.8,893.5 3321.6,893.5C3322.3,893.7 3322.7,898.5 3323.5,899.8C3324.2,899.8 3324.6,899.8 3325.4,899.8C3326.1,899.9 3326.5,899.9 3327.3,899.9C3328.0,899.7 3328.4,898.7 3329.2,898.5C3329.9,898.5 3330.3,899.0 3331.1,899.0C3331.8,898.3 3332.2,894.8 3333.0,894.8C3333.7,895.2 3334.1,900.6 3334.9,900.8C3335.6,900.8 3336.0,896.5 3336.8,896.3C3337.5,896.3 3337.9,899.0 3338.7,899.9C3339.4,900.6 3339.8,900.5 3340.6,900.6C3341.3,900.6 3341.7,900.6 3342.5,900.6C3343.2,900.5 3343.6,900.3 3344.4,900.1C3345.1,899.9 3345.5,900.1 3346.3,899.6C3347.0,897.7 3347.4,890.7 3348.2,890.5C3348.9,890.5 3349.3,897.0 3350.1,898.7C3350.8,899.2 3351.4,899.2 3352.0,899.2C3352.6,895.7 3352.4,881.2 3353.2,881.2C3354.0,881.2 3354.9,895.4 3355.8,899.1C3356.7,899.7 3356.9,899.4 3357.7,899.7C3358.4,900.0 3358.8,900.9 3359.6,900.9C3360.3,900.9 3360.7,899.7 3361.5,899.7C3362.2,899.7 3362.6,901.0 3363.4,901.0C3364.1,899.0 3364.5,889.6 3365.3,889.4C3366.0,889.4 3366.4,899.7 3367.2,900.0C3367.9,900.0 3368.3,891.5 3369.1,891.3C3369.8,891.3 3370.2,898.2 3371.0,898.8C3371.7,898.8 3372.1,894.1 3372.9,894.1C3373.7,894.1 3374.0,898.6 3374.8,898.7C3375.6,898.7 3375.9,894.7 3376.7,894.7C3377.5,894.9 3377.8,898.8 3378.6,900.1C3379.4,901.0 3379.7,900.7 3380.5,901.0C3381.3,901.2 3381.6,901.5 3382.4,901.5C3383.2,901.2 3383.5,900.0 3384.3,899.6C3385.1,899.4 3385.4,899.4 3386.2,899.4C3387.0,899.4 3387.3,899.8 3388.1,899.8C3388.9,899.3 3389.6,897.3 3390.0,896.7" fill="none" stroke="#5fa04e" stroke-width="1.6" stroke-linejoin="round"/>
<rect x="2017" y="971" width="1386" height="2" fill="#c9cbce"/>
<rect x="2029.2" y="987" width="20.5" height="6" rx="3" fill="#5fa04e"/>
<rect x="2017" y="1007" width="1386" height="2" fill="#e0e1e3"/>
</svg>
<div class="t" style="left:53.6px;top:17.0px;color:#24292e;font-size:24.7px;line-height:24.7px;-webkit-text-stroke:0.7px #24292e;letter-spacing:0.45px;">Mkcloud.SHA-NRT status</div>
<div class="t" style="left:23.0px;top:79.0px;color:#24292e;font-size:22.5px;line-height:22.5px;-webkit-text-stroke:0.7px #24292e;">Status</div>
<div class="t" style="left:23.4px;top:364.0px;color:#24292e;font-size:22.5px;line-height:22.5px;-webkit-text-stroke:0.7px #24292e;transform:scaleX(0.95);transform-origin:0 0;">AvgPLR</div>
<div class="t" style="left:23.4px;top:706.0px;color:#24292e;font-size:22.5px;line-height:22.5px;-webkit-text-stroke:0.7px #24292e;letter-spacing:-0.1px;">Average ICMP RTT Duration</div>
<div class="t" style="left:592.0px;top:79.0px;color:#24292e;font-size:22.5px;line-height:22.5px;-webkit-text-stroke:0.7px #24292e;letter-spacing:0.1px;">ICMP Duration</div>
<div class="t" style="left:592.0px;top:478.0px;color:#24292e;font-size:22.5px;line-height:22.5px;-webkit-text-stroke:0.7px #24292e;letter-spacing:0.1px;">ICMP Duration</div>
<div class="t" style="left:2016.8px;top:78.0px;color:#24292e;font-size:22.5px;line-height:22.5px;-webkit-text-stroke:0.7px #24292e;">Packet Loss Rate</div>
<div class="t" style="left:2017.7px;top:478.0px;color:#24292e;font-size:22.5px;line-height:22.5px;-webkit-text-stroke:0.7px #24292e;letter-spacing:0.5px;">Jitter</div>
<div class="t" style="left:2730.5px;top:478.0px;color:#24292e;font-size:22.5px;line-height:22.5px;-webkit-text-stroke:0.7px #24292e;">StdDev</div>
<div class="t" style="left:2016.4px;top:706.0px;color:#24292e;font-size:22.5px;line-height:22.5px;-webkit-text-stroke:0.7px #24292e;">ICMP StdDev</div>
<div class="t" style="left:182.7px;top:146.0px;color:#f4f5f7;font-size:156px;line-height:156px;-webkit-text-stroke:3.8px #f4f5f7;letter-spacing:4px;transform:scaleX(0.95);transform-origin:0 0;">UP</div>
<div class="t" style="left:61.8px;top:478.0px;color:#69a459;font-size:122px;line-height:122px;-webkit-text-stroke:2.8px #69a459;letter-spacing:5.33px;">0.02</div>
<div class="t" style="left:373.0px;top:478.0px;color:#69a459;font-size:122px;line-height:122px;-webkit-text-stroke:2.8px #69a459;">5</div>
<div class="t" style="left:448.6px;top:521.0px;color:#69a459;font-size:72px;line-height:72px;-webkit-text-stroke:1.6px #69a459;transform:scaleX(0.96);transform-origin:0 0;">%</div>
<div class="t" style="left:31.2px;top:844.0px;color:#96b24a;font-size:71px;line-height:71px;-webkit-text-stroke:1.6px #96b24a;transform:scaleX(1.055);transform-origin:0 0;">26 milliseconds</div>
<div class="t" style="left:2102.2px;top:542.0px;color:#69a459;font-size:106px;line-height:106px;-webkit-text-stroke:2.6px #69a459;letter-spacing:1.67px;transform:scaleX(1.06);transform-origin:0 0;">millisecond</div>
<div class="t" style="left:598.5px;top:145.0px;color:#24292e;font-size:19px;line-height:19px;">27.25 ms</div>
<div class="t" style="left:625.5px;top:173.0px;color:#24292e;font-size:19px;line-height:19px;">27 ms</div>
<div class="t" style="left:598.5px;top:200.0px;color:#24292e;font-size:19px;line-height:19px;">26.75 ms</div>
<div class="t" style="left:609.5px;top:227.0px;color:#24292e;font-size:19px;line-height:19px;">26.5 ms</div>
<div class="t" style="left:598.5px;top:254.0px;color:#24292e;font-size:19px;line-height:19px;">26.25 ms</div>
<div class="t" style="left:625.5px;top:282.0px;color:#24292e;font-size:19px;line-height:19px;">26 ms</div>
<div class="t" style="left:598.5px;top:309.0px;color:#24292e;font-size:19px;line-height:19px;">25.75 ms</div>
<div class="t" style="left:635.6px;top:349.0px;color:#24292e;font-size:19px;line-height:19px;letter-spacing:0.5px;">2026-01-19</div>
<div class="t" style="left:763.7px;top:349.0px;color:#24292e;font-size:19px;line-height:19px;letter-spacing:0.5px;">2026-01-22</div>
<div class="t" style="left:891.8px;top:349.0px;color:#24292e;font-size:19px;line-height:19px;letter-spacing:0.5px;">2026-01-25</div>
<div class="t" style="left:1019.9px;top:349.0px;color:#24292e;font-size:19px;line-height:19px;letter-spacing:0.5px;">2026-01-28</div>
<div class="t" style="left:1148.0px;top:349.0px;color:#24292e;font-size:19px;line-height:19px;letter-spacing:0.5px;">2026-01-31</div>
<div class="t" style="left:1276.1px;top:349.0px;color:#24292e;font-size:19px;line-height:19px;letter-spacing:0.5px;">2026-02-03</div>
<div class="t" style="left:1404.2px;top:349.0px;color:#24292e;font-size:19px;line-height:19px;letter-spacing:0.5px;">2026-02-06</div>
<div class="t" style="left:1532.3px;top:349.0px;color:#24292e;font-size:19px;line-height:19px;letter-spacing:0.5px;">2026-02-09</div>
<div class="t" style="left:1660.4px;top:349.0px;color:#24292e;font-size:19px;line-height:19px;letter-spacing:0.5px;">2026-02-12</div>
<div class="t" style="left:1788.5px;top:349.0px;color:#24292e;font-size:19px;line-height:19px;letter-spacing:0.5px;">2026-02-15</div>
<div class="t" style="left:636.8px;top:374.0px;color:#1f62e0;font-size:19px;line-height:19px;-webkit-text-stroke:0.5px #1f62e0;letter-spacing:0.2px;">Name</div>
<div class="t" style="left:1385.8px;top:374.0px;color:#1f62e0;font-size:19px;line-height:19px;-webkit-text-stroke:0.5px #1f62e0;letter-spacing:0.2px;">Min (above zero)</div>
<div class="t" style="left:1588.6px;top:374.0px;color:#1f62e0;font-size:19px;line-height:19px;-webkit-text-stroke:0.5px #1f62e0;letter-spacing:0.2px;">Max</div>
<div class="t" style="left:1683.7px;top:374.0px;color:#1f62e0;font-size:19px;line-height:19px;-webkit-text-stroke:0.5px #1f62e0;letter-spacing:0.2px;">Mean</div>
<div class="t" style="left:1788.6px;top:374.0px;color:#1f62e0;font-size:19px;line-height:19px;-webkit-text-stroke:0.5px #1f62e0;letter-spacing:0.2px;">StdDev</div>
<div class="t" style="left:1908.2px;top:374.0px;color:#1f62e0;font-size:19px;line-height:19px;-webkit-text-stroke:0.5px #1f62e0;letter-spacing:0.2px;">Range</div>
<div class="t" style="left:636.8px;top:410.0px;color:#24292e;font-size:19px;line-height:19px;">rtt</div>
<div class="t" style="left:1463.8px;top:410.0px;color:#24292e;font-size:19px;line-height:19px;">25.7 ms</div>
<div class="t" style="left:1558.6px;top:410.0px;color:#24292e;font-size:19px;line-height:19px;">27.2 ms</div>
<div class="t" style="left:1664.7px;top:410.0px;color:#24292e;font-size:19px;line-height:19px;">26.0 ms</div>
<div class="t" style="left:1795.6px;top:410.0px;color:#24292e;font-size:19px;line-height:19px;">181 µs</div>
<div class="t" style="left:1898.2px;top:410.0px;color:#24292e;font-size:19px;line-height:19px;">1.42 ms</div>
<div class="t" style="left:615.1px;top:528.0px;color:#24292e;font-size:19px;line-height:19px;">40 ms</div>
<div class="t" style="left:599.1px;top:580.0px;color:#24292e;font-size:19px;line-height:19px;">37.5 ms</div>
<div class="t" style="left:615.1px;top:632.0px;color:#24292e;font-size:19px;line-height:19px;">35 ms</div>
<div class="t" style="left:599.1px;top:683.0px;color:#24292e;font-size:19px;line-height:19px;">32.5 ms</div>
<div class="t" style="left:615.1px;top:735.0px;color:#24292e;font-size:19px;line-height:19px;">30 ms</div>
<div class="t" style="left:599.1px;top:787.0px;color:#24292e;font-size:19px;line-height:19px;">27.5 ms</div>
<div class="t" style="left:615.1px;top:839.0px;color:#24292e;font-size:19px;line-height:19px;">25 ms</div>
<div class="t" style="left:626.2px;top:883.0px;color:#24292e;font-size:19px;line-height:19px;letter-spacing:0.5px;">2026-01-19</div>
<div class="t" style="left:755.2px;top:883.0px;color:#24292e;font-size:19px;line-height:19px;letter-spacing:0.5px;">2026-01-22</div>
<div class="t" style="left:884.3px;top:883.0px;color:#24292e;font-size:19px;line-height:19px;letter-spacing:0.5px;">2026-01-25</div>
<div class="t" style="left:1013.4px;top:883.0px;color:#24292e;font-size:19px;line-height:19px;letter-spacing:0.5px;">2026-01-28</div>
<div class="t" style="left:1142.4px;top:883.0px;color:#24292e;font-size:19px;line-height:19px;letter-spacing:0.5px;">2026-01-31</div>
<div class="t" style="left:1271.5px;top:883.0px;color:#24292e;font-size:19px;line-height:19px;letter-spacing:0.5px;">2026-02-03</div>
<div class="t" style="left:1400.5px;top:883.0px;color:#24292e;font-size:19px;line-height:19px;letter-spacing:0.5px;">2026-02-06</div>
<div class="t" style="left:1529.6px;top:883.0px;color:#24292e;font-size:19px;line-height:19px;letter-spacing:0.5px;">2026-02-09</div>
<div class="t" style="left:1658.6px;top:883.0px;color:#24292e;font-size:19px;line-height:19px;letter-spacing:0.5px;">2026-02-12</div>
<div class="t" style="left:1787.7px;top:883.0px;color:#24292e;font-size:19px;line-height:19px;letter-spacing:0.5px;">2026-02-15</div>
<div class="t" style="left:636.9px;top:908.0px;color:#1f62e0;font-size:19px;line-height:19px;-webkit-text-stroke:0.5px #1f62e0;letter-spacing:0.2px;">Name</div>
<div class="t" style="left:1385.8px;top:908.0px;color:#1f62e0;font-size:19px;line-height:19px;-webkit-text-stroke:0.5px #1f62e0;letter-spacing:0.2px;">Min (above zero)</div>
<div class="t" style="left:1588.6px;top:908.0px;color:#1f62e0;font-size:19px;line-height:19px;-webkit-text-stroke:0.5px #1f62e0;letter-spacing:0.2px;">Max</div>
<div class="t" style="left:1683.7px;top:908.0px;color:#1f62e0;font-size:19px;line-height:19px;-webkit-text-stroke:0.5px #1f62e0;letter-spacing:0.2px;">Mean</div>
<div class="t" style="left:1788.6px;top:908.0px;color:#1f62e0;font-size:19px;line-height:19px;-webkit-text-stroke:0.5px #1f62e0;letter-spacing:0.2px;">StdDev</div>
<div class="t" style="left:1908.2px;top:908.0px;color:#1f62e0;font-size:19px;line-height:19px;-webkit-text-stroke:0.5px #1f62e0;letter-spacing:0.2px;">Range</div>
<div class="t" style="left:636.9px;top:944.0px;color:#24292e;font-size:19px;line-height:19px;">best</div>
<div class="t" style="left:1463.8px;top:944.0px;color:#24292e;font-size:19px;line-height:19px;">25.7 ms</div>
<div class="t" style="left:1558.6px;top:944.0px;color:#24292e;font-size:19px;line-height:19px;">26.0 ms</div>
<div class="t" style="left:1664.7px;top:944.0px;color:#24292e;font-size:19px;line-height:19px;">25.8 ms</div>
<div class="t" style="left:1790.6px;top:944.0px;color:#24292e;font-size:19px;line-height:19px;">39.9 µs</div>
<div class="t" style="left:1908.2px;top:944.0px;color:#24292e;font-size:19px;line-height:19px;">292 µs</div>
<div class="t" style="left:637.9px;top:980.0px;color:#24292e;font-size:19px;line-height:19px;">worst</div>
<div class="t" style="left:1463.8px;top:980.0px;color:#24292e;font-size:19px;line-height:19px;">26.0 ms</div>
<div class="t" style="left:1558.6px;top:980.0px;color:#24292e;font-size:19px;line-height:19px;">37.9 ms</div>
<div class="t" style="left:1664.7px;top:980.0px;color:#24292e;font-size:19px;line-height:19px;">26.5 ms</div>
<div class="t" style="left:1795.6px;top:980.0px;color:#24292e;font-size:19px;line-height:19px;">868 µs</div>
<div class="t" style="left:1899.2px;top:980.0px;color:#24292e;font-size:19px;line-height:19px;">11.9 ms</div>
<div class="t" style="left:2025.0px;top:129.0px;color:#24292e;font-size:19px;line-height:19px;">50%</div>
<div class="t" style="left:2025.0px;top:168.0px;color:#24292e;font-size:19px;line-height:19px;">40%</div>
<div class="t" style="left:2025.0px;top:207.0px;color:#24292e;font-size:19px;line-height:19px;">30%</div>
<div class="t" style="left:2025.0px;top:247.0px;color:#24292e;font-size:19px;line-height:19px;">20%</div>
<div class="t" style="left:2025.0px;top:286.0px;color:#24292e;font-size:19px;line-height:19px;">10%</div>
<div class="t" style="left:2036.0px;top:325.0px;color:#24292e;font-size:19px;line-height:19px;">0%</div>
<div class="t" style="left:2024.2px;top:349.0px;color:#24292e;font-size:19px;line-height:19px;letter-spacing:0.5px;">2026-01-19</div>
<div class="t" style="left:2156.0px;top:349.0px;color:#24292e;font-size:19px;line-height:19px;letter-spacing:0.5px;">2026-01-22</div>
<div class="t" style="left:2287.8px;top:349.0px;color:#24292e;font-size:19px;line-height:19px;letter-spacing:0.5px;">2026-01-25</div>
<div class="t" style="left:2419.6px;top:349.0px;color:#24292e;font-size:19px;line-height:19px;letter-spacing:0.5px;">2026-01-28</div>
<div class="t" style="left:2551.4px;top:349.0px;color:#24292e;font-size:19px;line-height:19px;letter-spacing:0.5px;">2026-01-31</div>
<div class="t" style="left:2683.2px;top:349.0px;color:#24292e;font-size:19px;line-height:19px;letter-spacing:0.5px;">2026-02-03</div>
<div class="t" style="left:2815.0px;top:349.0px;color:#24292e;font-size:19px;line-height:19px;letter-spacing:0.5px;">2026-02-06</div>
<div class="t" style="left:2946.8px;top:349.0px;color:#24292e;font-size:19px;line-height:19px;letter-spacing:0.5px;">2026-02-09</div>
<div class="t" style="left:3078.6px;top:349.0px;color:#24292e;font-size:19px;line-height:19px;letter-spacing:0.5px;">2026-02-12</div>
<div class="t" style="left:3210.4px;top:349.0px;color:#24292e;font-size:19px;line-height:19px;letter-spacing:0.5px;">2026-02-15</div>
<div class="t" style="left:2061.9px;top:374.0px;color:#1f62e0;font-size:19px;line-height:19px;-webkit-text-stroke:0.5px #1f62e0;letter-spacing:0.2px;">Name</div>
<div class="t" style="left:3138.0px;top:374.0px;color:#1f62e0;font-size:19px;line-height:19px;-webkit-text-stroke:0.5px #1f62e0;letter-spacing:0.2px;">Max</div>
<div class="t" style="left:3233.0px;top:374.0px;color:#1f62e0;font-size:19px;line-height:19px;-webkit-text-stroke:0.5px #1f62e0;letter-spacing:0.2px;">Last *</div>
<div class="t" style="left:3341.6px;top:374.0px;color:#1f62e0;font-size:19px;line-height:19px;-webkit-text-stroke:0.5px #1f62e0;letter-spacing:0.2px;">Mean</div>
<div class="t" style="left:2061.9px;top:410.0px;color:#24292e;font-size:19px;line-height:19px;letter-spacing:0.1px;">Mkcloud.SHA-NRT</div>
<div class="t" style="left:3121.0px;top:410.0px;color:#24292e;font-size:19px;line-height:19px;">2.38%</div>
<div class="t" style="left:3256.0px;top:410.0px;color:#24292e;font-size:19px;line-height:19px;">0%</div>
<div class="t" style="left:3314.6px;top:410.0px;color:#24292e;font-size:19px;line-height:19px;">0.0250%</div>
<div class="t" style="left:2040.6px;top:769.0px;color:#24292e;font-size:19px;line-height:19px;">2 ms</div>
<div class="t" style="left:2024.6px;top:801.0px;color:#24292e;font-size:19px;line-height:19px;">1.5 ms</div>
<div class="t" style="left:2040.6px;top:832.0px;color:#24292e;font-size:19px;line-height:19px;">1 ms</div>
<div class="t" style="left:2024.6px;top:864.0px;color:#24292e;font-size:19px;line-height:19px;">500 µs</div>
<div class="t" style="left:2056.6px;top:896.0px;color:#24292e;font-size:19px;line-height:19px;">0 s</div>
<div class="t" style="left:2042.5px;top:920.0px;color:#24292e;font-size:19px;line-height:19px;letter-spacing:0.5px;">2026-01-19</div>
<div class="t" style="left:2172.5px;top:920.0px;color:#24292e;font-size:19px;line-height:19px;letter-spacing:0.5px;">2026-01-22</div>
<div class="t" style="left:2302.5px;top:920.0px;color:#24292e;font-size:19px;line-height:19px;letter-spacing:0.5px;">2026-01-25</div>
<div class="t" style="left:2432.5px;top:920.0px;color:#24292e;font-size:19px;line-height:19px;letter-spacing:0.5px;">2026-01-28</div>
<div class="t" style="left:2562.5px;top:920.0px;color:#24292e;font-size:19px;line-height:19px;letter-spacing:0.5px;">2026-01-31</div>
<div class="t" style="left:2692.5px;top:920.0px;color:#24292e;font-size:19px;line-height:19px;letter-spacing:0.5px;">2026-02-03</div>
<div class="t" style="left:2822.5px;top:920.0px;color:#24292e;font-size:19px;line-height:19px;letter-spacing:0.5px;">2026-02-06</div>
<div class="t" style="left:2952.5px;top:920.0px;color:#24292e;font-size:19px;line-height:19px;letter-spacing:0.5px;">2026-02-09</div>
<div class="t" style="left:3082.5px;top:920.0px;color:#24292e;font-size:19px;line-height:19px;letter-spacing:0.5px;">2026-02-12</div>
<div class="t" style="left:3212.5px;top:920.0px;color:#24292e;font-size:19px;line-height:19px;letter-spacing:0.5px;">2026-02-15</div>
<div class="t" style="left:2061.7px;top:944.0px;color:#1f62e0;font-size:19px;line-height:19px;-webkit-text-stroke:0.5px #1f62e0;letter-spacing:0.2px;">Name</div>
<div class="t" style="left:2810.3px;top:944.0px;color:#1f62e0;font-size:19px;line-height:19px;-webkit-text-stroke:0.5px #1f62e0;letter-spacing:0.2px;">Min (above zero)</div>
<div class="t" style="left:3013.5px;top:944.0px;color:#1f62e0;font-size:19px;line-height:19px;-webkit-text-stroke:0.5px #1f62e0;letter-spacing:0.2px;">Max</div>
<div class="t" style="left:3108.0px;top:944.0px;color:#1f62e0;font-size:19px;line-height:19px;-webkit-text-stroke:0.5px #1f62e0;letter-spacing:0.2px;">Mean</div>
<div class="t" style="left:3213.0px;top:944.0px;color:#1f62e0;font-size:19px;line-height:19px;-webkit-text-stroke:0.5px #1f62e0;letter-spacing:0.2px;">StdDev</div>
<div class="t" style="left:3332.9px;top:944.0px;color:#1f62e0;font-size:19px;line-height:19px;-webkit-text-stroke:0.5px #1f62e0;letter-spacing:0.2px;">Range</div>
<div class="t" style="left:2061.9px;top:980.0px;color:#24292e;font-size:19px;line-height:19px;letter-spacing:0.1px;">Mkcloud.SHA-NRT</div>
<div class="t" style="left:2893.3px;top:980.0px;color:#24292e;font-size:19px;line-height:19px;">51.4 µs</div>
<div class="t" style="left:2983.5px;top:980.0px;color:#24292e;font-size:19px;line-height:19px;">1.93 ms</div>
<div class="t" style="left:3099.0px;top:980.0px;color:#24292e;font-size:19px;line-height:19px;">133 µs</div>
<div class="t" style="left:3220.0px;top:980.0px;color:#24292e;font-size:19px;line-height:19px;">130 µs</div>
<div class="t" style="left:3322.9px;top:980.0px;color:#24292e;font-size:19px;line-height:19px;">1.88 ms</div>
</body></html>
